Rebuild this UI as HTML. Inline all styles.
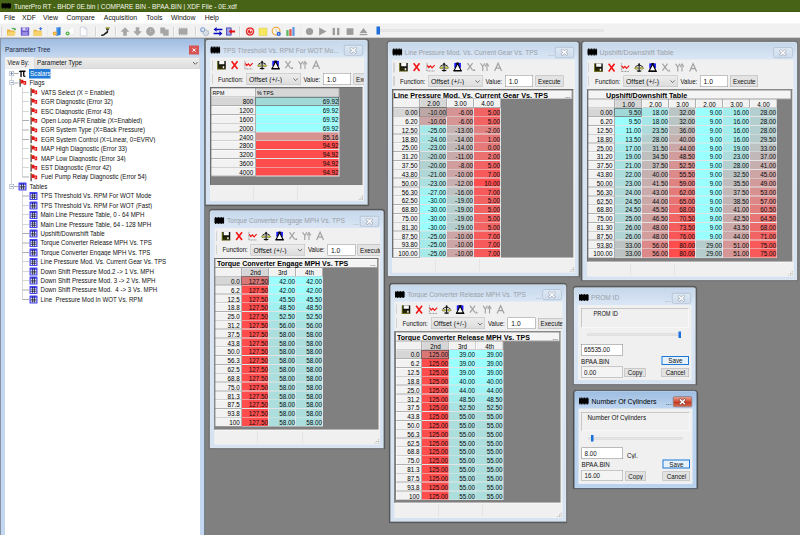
<!DOCTYPE html>
<html><head><meta charset="utf-8"><title>TunerPro RT</title>
<style>
html,body{margin:0;padding:0;}
body{width:800px;height:535px;overflow:hidden;background:#808080;}
#r{position:absolute;left:0;top:0;width:1600px;height:1070px;transform:scale(.5);transform-origin:0 0;overflow:hidden;
font-family:"Liberation Sans",sans-serif;background:#808080;}
#r div,#r svg{position:absolute;box-sizing:border-box;}
#r svg{overflow:visible;}
</style></head><body><div id="r">
<div style="left:0px;top:40px;width:1600px;height:36.2px;background:#f1f1f1;border-bottom:1px solid #a8a8a8;"></div>
<div style="left:0px;top:16px;width:1600px;height:30.8px;background:#fff;"></div>
<div style="left:0px;top:0px;width:1600px;height:24px;background:#476315;border-bottom:1px solid #3c5510;"></div>
<svg style="left:3px;top:6.4px;width:19px;height:11.2px" viewBox="0 0 9.5 5.6"><rect x="0" y="0.9" width="9.5" height="3.8" fill="#000"/><rect x="0.50" y="0" width="0.9" height="5.6" fill="#000"/><rect x="2.02" y="0" width="0.9" height="5.6" fill="#000"/><rect x="3.54" y="0" width="0.9" height="5.6" fill="#000"/><rect x="5.06" y="0" width="0.9" height="5.6" fill="#000"/><rect x="6.58" y="0" width="0.9" height="5.6" fill="#000"/><rect x="8.10" y="0" width="0.9" height="5.6" fill="#000"/></svg>
<div style="left:27.6px;top:2.97px;height:18.46px;font-size:14.2px;line-height:18.46px;color:#f4f6ea;white-space:pre;transform:scaleX(0.923);transform-origin:0 50%;">TunerPro RT - BHDF 0E.bin | COMPARE BIN - BPAA.BIN | XDF File - 0E.xdf</div>
<div style="left:-41px;top:27.23px;width:120px;height:17.94px;text-align:center;font-size:13.8px;line-height:17.94px;color:#111;white-space:pre;">File</div>
<div style="left:-2px;top:27.23px;width:120px;height:17.94px;text-align:center;font-size:13.8px;line-height:17.94px;color:#111;white-space:pre;">XDF</div>
<div style="left:41px;top:27.23px;width:120px;height:17.94px;text-align:center;font-size:13.8px;line-height:17.94px;color:#111;white-space:pre;">View</div>
<div style="left:101.3px;top:27.23px;width:120px;height:17.94px;text-align:center;font-size:13.8px;line-height:17.94px;color:#111;white-space:pre;">Compare</div>
<div style="left:181px;top:27.23px;width:120px;height:17.94px;text-align:center;font-size:13.8px;line-height:17.94px;color:#111;white-space:pre;">Acquisition</div>
<div style="left:248.8px;top:27.23px;width:120px;height:17.94px;text-align:center;font-size:13.8px;line-height:17.94px;color:#111;white-space:pre;">Tools</div>
<div style="left:306.3px;top:27.23px;width:120px;height:17.94px;text-align:center;font-size:13.8px;line-height:17.94px;color:#111;white-space:pre;">Window</div>
<div style="left:363.5px;top:27.23px;width:120px;height:17.94px;text-align:center;font-size:13.8px;line-height:17.94px;color:#111;white-space:pre;">Help</div>
<div style="left:3.2px;top:53px;width:1.2px;height:20px;background:#c4c4c4;"></div>
<div style="left:93.5px;top:53px;width:1px;height:20px;background:#b8b8b8;"></div>
<div style="left:94.5px;top:53px;width:1px;height:20px;background:#fff;"></div>
<div style="left:191.1px;top:53px;width:1px;height:20px;background:#b8b8b8;"></div>
<div style="left:192.1px;top:53px;width:1px;height:20px;background:#fff;"></div>
<div style="left:230.7px;top:53px;width:1px;height:20px;background:#b8b8b8;"></div>
<div style="left:231.7px;top:53px;width:1px;height:20px;background:#fff;"></div>
<div style="left:346.9px;top:53px;width:1px;height:20px;background:#b8b8b8;"></div>
<div style="left:347.9px;top:53px;width:1px;height:20px;background:#fff;"></div>
<div style="left:390.5px;top:53px;width:1px;height:20px;background:#b8b8b8;"></div>
<div style="left:391.5px;top:53px;width:1px;height:20px;background:#fff;"></div>
<div style="left:479.1px;top:53px;width:1px;height:20px;background:#b8b8b8;"></div>
<div style="left:480.1px;top:53px;width:1px;height:20px;background:#fff;"></div>
<div style="left:599.5px;top:53px;width:1px;height:20px;background:#b8b8b8;"></div>
<div style="left:600.5px;top:53px;width:1px;height:20px;background:#fff;"></div>
<svg style="left:13.4px;top:52.6px;width:20px;height:20px" viewBox="0 0 10 10"><path d="M0.5 3 L3.5 3 L4.3 4 L8 4 L8 9 L0.5 9 Z" fill="#e9b64a"/><path d="M2 5.2 L9.6 5.2 L8 9 L0.5 9 Z" fill="#f7d36e"/><path d="M5 2.2 Q7 0.2 8.6 2.2 L9.3 1.6 L9.2 3.8 L7 3.5 L7.8 2.9 Q6.8 1.6 5.6 2.7 Z" fill="#3aa03a"/></svg>
<svg style="left:40px;top:52.6px;width:20px;height:20px" viewBox="0 0 10 10"><rect x="0.8" y="0.8" width="8.4" height="8.4" rx="0.8" fill="#6a5acd"/><rect x="2.4" y="0.8" width="5.2" height="3.2" fill="#d8d4f4"/><rect x="2.2" y="5.6" width="5.6" height="3.6" fill="#9a8fe0"/><rect x="5.6" y="1.2" width="1.2" height="2.2" fill="#6a5acd"/></svg>
<svg style="left:66px;top:52.6px;width:20px;height:20px" viewBox="0 0 10 10"><path d="M0.5 3.2 L3.5 3.2 L4.3 4.2 L8.6 4.2 L8.6 9.2 L0.5 9.2 Z" fill="#e9b64a"/><rect x="0.5" y="5" width="8.1" height="4.2" fill="#f7d36e"/><path d="M7.6 0.4 L9.6 2.4 L8.3 2.4 L8.3 3.8 L6.9 3.8 L6.9 2.4 L5.6 2.4 Z" fill="#3f6fd0"/></svg>
<svg style="left:104px;top:52.6px;width:20px;height:20px" viewBox="0 0 10 10"><path d="M4 1.2 L8.6 0.6 L8.6 8.6 L4 9.4 Z" fill="#2f7fd8"/><path d="M4 1.2 L5.4 0.8 L5.4 9 L4 9.4 Z" fill="#7ab4ee"/><circle cx="2.8" cy="7" r="2" fill="#f0a020"/><circle cx="2.8" cy="7" r="0.8" fill="#fff3c0"/></svg>
<svg style="left:130px;top:52.6px;width:20px;height:20px" viewBox="0 0 10 10"><path d="M3.4 2.6 L7.6 0.8 L9 1.6 L9 7.6 L4.6 9 Z" fill="#fdfdfd" stroke="#d8d8d8" stroke-width=".4"/><circle cx="2.6" cy="7" r="2" fill="#58b548"/><circle cx="2.6" cy="7" r=".7" fill="#e4f6d8"/></svg>
<svg style="left:157.4px;top:52.6px;width:20px;height:20px" viewBox="0 0 10 10"><path d="M1.8 0.6 L6.4 0.6 L8.4 2.6 L8.4 9.4 L1.8 9.4 Z" fill="#fcfcfe" stroke="#b9c0d4" stroke-width=".6"/><path d="M6.4 0.6 L6.4 2.6 L8.4 2.6 Z" fill="#dfe4f0" stroke="#b9c0d4" stroke-width=".4"/></svg>
<svg style="left:201px;top:52.6px;width:20px;height:20px" viewBox="0 0 10 10"><path d="M5.2 0.8 L9 0.8 L8.4 3.2 L7.4 4.2 L6.6 4.2 L5.6 3.2 Z" fill="#444"/><rect x="5.4" y="0.6" width="3.4" height="1.4" fill="#c8c040"/><path d="M7 4.2 C7 7 5.6 6.2 4.6 7.2 C3.6 8.4 2.4 9 0.8 8.6" fill="none" stroke="#1a1a1a" stroke-width="1.6"/></svg>
<svg style="left:239.6px;top:52.6px;width:20px;height:20px" viewBox="0 0 10 10"><path d="M5 0.8 L9.4 5.2 L6.8 5.2 L6.8 9.2 L3.2 9.2 L3.2 5.2 L0.6 5.2 Z" fill="#a6a6a6"/></svg>
<svg style="left:265.4px;top:52.6px;width:20px;height:20px" viewBox="0 0 10 10"><path d="M5 9.2 L9.4 4.8 L6.8 4.8 L6.8 0.8 L3.2 0.8 L3.2 4.8 L0.6 4.8 Z" fill="#a6a6a6"/></svg>
<svg style="left:291.4px;top:52.6px;width:20px;height:20px" viewBox="0 0 10 10"><circle cx="5" cy="5" r="4.4" fill="#a6a6a6"/><path d="M5 2 L5 5 L7 5" stroke="#bdbdbd" stroke-width=".7" fill="none"/></svg>
<svg style="left:319px;top:52.6px;width:20px;height:20px" viewBox="0 0 10 10"><path d="M0.8 1 L5.6 1 L5.6 3 L9.2 3 L9.2 9.2 L3.6 9.2 L3.6 7 L0.8 7 Z" fill="#a6a6a6"/></svg>
<svg style="left:356px;top:52.6px;width:20px;height:20px" viewBox="0 0 10 10"><rect x="0.6" y="2.2" width="8.8" height="5.6" fill="#a6a6a6"/><rect x="1.20" y="1.2" width="0.9" height="7.6" fill="#a6a6a6"/><rect x="2.95" y="1.2" width="0.9" height="7.6" fill="#a6a6a6"/><rect x="4.70" y="1.2" width="0.9" height="7.6" fill="#a6a6a6"/><rect x="6.45" y="1.2" width="0.9" height="7.6" fill="#a6a6a6"/><rect x="8.20" y="1.2" width="0.9" height="7.6" fill="#a6a6a6"/></svg>
<svg style="left:399.4px;top:52.6px;width:20px;height:20px" viewBox="0 0 10 10"><circle cx="3.2" cy="3.2" r="2" fill="#dfe8f6" stroke="#7f9fd0" stroke-width="1.1"/><circle cx="6.4" cy="6.4" r="2.6" fill="none" stroke="#aab4c6" stroke-width="1.5" stroke-dasharray="1.2 .5"/><circle cx="6.4" cy="6.4" r="1.5" fill="#d3d9e4"/></svg>
<svg style="left:426px;top:52.6px;width:20px;height:20px" viewBox="0 0 10 10"><path d="M0.6 3 L3.6 0.6 L3.6 2.2 L9.4 2.2 L9.4 3.8 L3.6 3.8 L3.6 5.2 Z" fill="#0b0bbf"/><path d="M9.4 7 L6.4 4.6 L6.4 6.2 L0.6 6.2 L0.6 7.8 L6.4 7.8 L6.4 9.4 Z" fill="#0b0bbf"/></svg>
<svg style="left:451.2px;top:52.6px;width:20px;height:20px" viewBox="0 0 10 10"><rect x="0.6" y="1" width="5.4" height="8" fill="#3a3ab8"/><rect x="1.4" y="1.8" width="3.8" height="6.4" fill="#9fa4e6"/><path d="M3.2 5 L6.2 2.4 L6.2 4.1 L9.6 4.1 L9.6 5.9 L6.2 5.9 L6.2 7.6 Z" fill="#e81414"/></svg>
<svg style="left:489.6px;top:52.6px;width:20px;height:20px" viewBox="0 0 10 10"><circle cx="5" cy="5" r="4.6" fill="#f7b9b9"/><circle cx="5" cy="5" r="4" fill="#e82222"/><circle cx="5" cy="5" r="2.5" fill="none" stroke="#fff" stroke-width=".8"/><circle cx="5.7" cy="4.1" r=".9" fill="#fff"/></svg>
<svg style="left:516.4px;top:52.6px;width:20px;height:20px" viewBox="0 0 10 10"><rect x="1" y="1.6" width="8" height="7.4" fill="#f6e960" stroke="#d9c94a" stroke-width=".5"/></svg>
<svg style="left:543.2px;top:52.6px;width:20px;height:20px" viewBox="0 0 10 10"><circle cx="4.6" cy="4.6" r="3.9" fill="#fdf6e6" stroke="#e7a233" stroke-width="1.1"/><path d="M4.6 2 L4.6 4.8 L6.4 5.6" stroke="#b0b0b0" stroke-width=".6" fill="none"/><circle cx="7.2" cy="7.4" r="2.1" fill="#2b66d6"/><rect x="6.9" y="6.6" width=".7" height="1.8" fill="#fff"/></svg>
<svg style="left:570.6px;top:52.6px;width:20px;height:20px" viewBox="0 0 10 10"><rect x="0.8" y="3.6" width="2.3" height="5.8" fill="#58b860"/><rect x="3.8" y="2.6" width="2.3" height="6.8" fill="#e0584a"/><rect x="6.8" y="0.6" width="2.3" height="8.8" fill="#5f97e6"/></svg>
<svg style="left:609.2px;top:52.6px;width:20px;height:20px" viewBox="0 0 10 10"><circle cx="5" cy="5" r="3.6" fill="#9c9c9c"/></svg>
<svg style="left:635px;top:52.6px;width:20px;height:20px" viewBox="0 0 10 10"><path d="M1.6 1 L9 5 L1.6 9 Z" fill="#9c9c9c"/></svg>
<svg style="left:662px;top:52.6px;width:20px;height:20px" viewBox="0 0 10 10"><rect x="1.6" y="1.4" width="2.4" height="7.2" fill="#9c9c9c"/><rect x="6" y="1.4" width="2.4" height="7.2" fill="#9c9c9c"/></svg>
<svg style="left:689.8px;top:52.6px;width:20px;height:20px" viewBox="0 0 10 10"><rect x="1.6" y="1.8" width="6.8" height="6.6" fill="#9c9c9c"/></svg>
<svg style="left:717px;top:52.6px;width:20px;height:20px" viewBox="0 0 10 10"><path d="M5 1.4 L8.8 6.6 L1.2 6.6 Z" fill="#9c9c9c"/><rect x="1.2" y="7.4" width="7.6" height="1.3" fill="#9c9c9c"/></svg>
<div style="left:760px;top:58.6px;width:447.2px;height:4.8px;background:#e8e8e8;border:1px solid #d9d9d9;"></div>
<div style="left:753.2px;top:53px;width:7px;height:15.6px;background:#1a6fdb;"></div>
<div style="left:0px;top:77.2px;width:409.2px;height:994px;background:linear-gradient(#9ebbe0 0,#c3d7f0 36px,#c3d7f0 100%);"></div>
<div style="left:0px;top:77.2px;width:2.2px;height:994px;background:linear-gradient(90deg,#6f7580,#9fb2cc);"></div>
<div style="left:407.6px;top:76.8px;width:1.6px;height:994px;background:#4f8aa2;"></div>
<div style="left:409.2px;top:76.8px;width:1.2px;height:994px;background:#686868;"></div>
<div style="left:10px;top:90.1px;height:18.2px;font-size:14px;line-height:18.2px;color:#1c2742;white-space:pre;transform:scaleX(0.936);transform-origin:0 50%;">Parameter Tree</div>
<div style="left:378.4px;top:90.6px;width:19.2px;height:18.6px;background:#d75454;"></div>
<svg style="left:383.8px;top:95.8px;width:8.4px;height:8.4px" viewBox="0 0 4.2 4.2"><path d="M0.5 0.5 L3.7 3.7 M3.7 0.5 L0.5 3.7" stroke="#fff" stroke-width="1"/></svg>
<div style="left:10px;top:114.4px;width:390px;height:23.6px;background:#f0f0f0;"></div>
<div style="left:68.8px;top:114.8px;width:330.8px;height:22.4px;background:linear-gradient(#ececec,#dedede);border:1px solid #c2c2c2;"></div>
<div style="left:15px;top:116.76px;height:17.68px;font-size:13.6px;line-height:17.68px;color:#111;white-space:pre;transform:scaleX(0.817);transform-origin:0 50%;">View By:</div>
<div style="left:74px;top:116.76px;height:17.68px;font-size:13.6px;line-height:17.68px;color:#111;white-space:pre;transform:scaleX(0.933);transform-origin:0 50%;">Parameter Type</div>
<svg style="left:385px;top:122.8px;width:11.2px;height:6.8px" viewBox="0 0 5.6 3.4"><path d="M0.5 0.5 L2.8 2.8 L5.1 0.5" stroke="#555" stroke-width=".9" fill="none"/></svg>
<div style="left:10px;top:138px;width:390px;height:932px;background:#fff;"></div>
<div style="left:22.5px;top:152px;width:1.4px;height:216.01px;background:#adadad;"></div>
<div style="left:28px;top:146.3px;width:9px;height:1.4px;background:#adadad;"></div>
<div style="left:28px;top:165.13px;width:9px;height:1.4px;background:#adadad;"></div>
<div style="left:28px;top:372.31px;width:9px;height:1.4px;background:#adadad;"></div>
<div style="left:44.5px;top:174.83px;width:1.4px;height:179.34px;background:#adadad;"></div>
<div style="left:44.5px;top:382.01px;width:1.4px;height:217.01px;background:#adadad;"></div>
<div style="left:18.6px;top:142.4px;width:9.2px;height:9.2px;background:#fff;border:1px solid #8f9bb3;"></div>
<div style="left:20.6px;top:146.5px;width:5.2px;height:1px;background:#24408c;"></div>
<div style="left:22.7px;top:144.4px;width:1px;height:5.2px;background:#24408c;"></div>
<div style="left:18.6px;top:161.23px;width:9.2px;height:9.2px;background:#fff;border:1px solid #8f9bb3;"></div>
<div style="left:20.6px;top:165.33px;width:5.2px;height:1px;background:#24408c;"></div>
<div style="left:18.6px;top:368.41px;width:9.2px;height:9.2px;background:#fff;border:1px solid #8f9bb3;"></div>
<div style="left:20.6px;top:372.51px;width:5.2px;height:1px;background:#24408c;"></div>
<svg style="left:37.2px;top:139.8px;width:14.8px;height:14.8px" viewBox="0 0 7.4 7.4"><path d="M0.4 1.6 C1 0.6 1.6 0.6 2.4 0.6 L7 0.6 L7 1.9 L5.9 1.9 L5.9 5.4 C5.9 6 6.4 6 7 5.6 L7 6.6 C5.6 7.4 4.6 6.8 4.6 5.6 L4.6 1.9 L3.2 1.9 L3.2 6.9 L1.9 6.9 L1.9 1.9 C1.2 1.9 0.9 2 0.4 2.6 Z" fill="#000"/></svg>
<div style="left:58px;top:138.2px;width:43.4px;height:18.6px;background:#1e7ad6;"></div>
<div style="left:59.6px;top:138.16px;height:17.68px;font-size:13.6px;line-height:17.68px;color:#fff;white-space:pre;transform:scaleX(0.905);transform-origin:0 50%;">Scalars</div>
<svg style="left:37.6px;top:157.43px;width:15.2px;height:16.8px" viewBox="0 0 7.6 8.4"><rect x="0.6" y="0.8" width="1" height="7.4" fill="#111"/><rect x="0.2" y="0.2" width="1.8" height="1" fill="#9a8a20"/><path d="M1.6 1.2 L4.4 1.2 L4.4 2.6 L7.2 2.6 L7.2 6.2 L4.6 6.2 L4.6 5 L1.6 5 Z" fill="#e01818"/><rect x="4.6" y="3.6" width="1.6" height="1.5" fill="#ff8a8a"/></svg>
<div style="left:59px;top:156.99px;height:17.68px;font-size:13.6px;line-height:17.68px;color:#111;white-space:pre;transform:scaleX(0.905);transform-origin:0 50%;">Flags</div>
<div style="left:45.2px;top:183.97px;width:13px;height:1.4px;background:#adadad;"></div>
<svg style="left:59.6px;top:176.27px;width:15.2px;height:16.8px" viewBox="0 0 7.6 8.4"><rect x="0.6" y="0.8" width="1" height="7.4" fill="#111"/><rect x="0.2" y="0.2" width="1.8" height="1" fill="#9a8a20"/><path d="M1.6 1.2 L4.4 1.2 L4.4 2.6 L7.2 2.6 L7.2 6.2 L4.6 6.2 L4.6 5 L1.6 5 Z" fill="#e01818"/><rect x="4.6" y="3.6" width="1.6" height="1.5" fill="#ff8a8a"/></svg>
<div style="left:81.6px;top:175.83px;height:17.68px;font-size:13.6px;line-height:17.68px;color:#111;white-space:pre;transform:scaleX(0.905);transform-origin:0 50%;">VATS Select (X = Enabled)</div>
<div style="left:45.2px;top:202.8px;width:13px;height:1.4px;background:#adadad;"></div>
<svg style="left:59.6px;top:195.1px;width:15.2px;height:16.8px" viewBox="0 0 7.6 8.4"><rect x="0.6" y="0.8" width="1" height="7.4" fill="#111"/><rect x="0.2" y="0.2" width="1.8" height="1" fill="#9a8a20"/><path d="M1.6 1.2 L4.4 1.2 L4.4 2.6 L7.2 2.6 L7.2 6.2 L4.6 6.2 L4.6 5 L1.6 5 Z" fill="#e01818"/><rect x="4.6" y="3.6" width="1.6" height="1.5" fill="#ff8a8a"/></svg>
<div style="left:81.6px;top:194.66px;height:17.68px;font-size:13.6px;line-height:17.68px;color:#111;white-space:pre;transform:scaleX(0.905);transform-origin:0 50%;">EGR Diagnostic (Error 32)</div>
<div style="left:45.2px;top:221.64px;width:13px;height:1.4px;background:#adadad;"></div>
<svg style="left:59.6px;top:213.94px;width:15.2px;height:16.8px" viewBox="0 0 7.6 8.4"><rect x="0.6" y="0.8" width="1" height="7.4" fill="#111"/><rect x="0.2" y="0.2" width="1.8" height="1" fill="#9a8a20"/><path d="M1.6 1.2 L4.4 1.2 L4.4 2.6 L7.2 2.6 L7.2 6.2 L4.6 6.2 L4.6 5 L1.6 5 Z" fill="#e01818"/><rect x="4.6" y="3.6" width="1.6" height="1.5" fill="#ff8a8a"/></svg>
<div style="left:81.6px;top:213.5px;height:17.68px;font-size:13.6px;line-height:17.68px;color:#111;white-space:pre;transform:scaleX(0.905);transform-origin:0 50%;">ESC Diagnostic (Error 43)</div>
<div style="left:45.2px;top:240.47px;width:13px;height:1.4px;background:#adadad;"></div>
<svg style="left:59.6px;top:232.77px;width:15.2px;height:16.8px" viewBox="0 0 7.6 8.4"><rect x="0.6" y="0.8" width="1" height="7.4" fill="#111"/><rect x="0.2" y="0.2" width="1.8" height="1" fill="#9a8a20"/><path d="M1.6 1.2 L4.4 1.2 L4.4 2.6 L7.2 2.6 L7.2 6.2 L4.6 6.2 L4.6 5 L1.6 5 Z" fill="#e01818"/><rect x="4.6" y="3.6" width="1.6" height="1.5" fill="#ff8a8a"/></svg>
<div style="left:81.6px;top:232.33px;height:17.68px;font-size:13.6px;line-height:17.68px;color:#111;white-space:pre;transform:scaleX(0.905);transform-origin:0 50%;">Open Loop AFR Enable (X=Enabled)</div>
<div style="left:45.2px;top:259.3px;width:13px;height:1.4px;background:#adadad;"></div>
<svg style="left:59.6px;top:251.6px;width:15.2px;height:16.8px" viewBox="0 0 7.6 8.4"><rect x="0.6" y="0.8" width="1" height="7.4" fill="#111"/><rect x="0.2" y="0.2" width="1.8" height="1" fill="#9a8a20"/><path d="M1.6 1.2 L4.4 1.2 L4.4 2.6 L7.2 2.6 L7.2 6.2 L4.6 6.2 L4.6 5 L1.6 5 Z" fill="#e01818"/><rect x="4.6" y="3.6" width="1.6" height="1.5" fill="#ff8a8a"/></svg>
<div style="left:81.6px;top:251.16px;height:17.68px;font-size:13.6px;line-height:17.68px;color:#111;white-space:pre;transform:scaleX(0.905);transform-origin:0 50%;">EGR System Type (X=Back Pressure)</div>
<div style="left:45.2px;top:278.14px;width:13px;height:1.4px;background:#adadad;"></div>
<svg style="left:59.6px;top:270.44px;width:15.2px;height:16.8px" viewBox="0 0 7.6 8.4"><rect x="0.6" y="0.8" width="1" height="7.4" fill="#111"/><rect x="0.2" y="0.2" width="1.8" height="1" fill="#9a8a20"/><path d="M1.6 1.2 L4.4 1.2 L4.4 2.6 L7.2 2.6 L7.2 6.2 L4.6 6.2 L4.6 5 L1.6 5 Z" fill="#e01818"/><rect x="4.6" y="3.6" width="1.6" height="1.5" fill="#ff8a8a"/></svg>
<div style="left:81.6px;top:270px;height:17.68px;font-size:13.6px;line-height:17.68px;color:#111;white-space:pre;transform:scaleX(0.905);transform-origin:0 50%;">EGR System Control (X=Linear, 0=EVRV)</div>
<div style="left:45.2px;top:296.97px;width:13px;height:1.4px;background:#adadad;"></div>
<svg style="left:59.6px;top:289.27px;width:15.2px;height:16.8px" viewBox="0 0 7.6 8.4"><rect x="0.6" y="0.8" width="1" height="7.4" fill="#111"/><rect x="0.2" y="0.2" width="1.8" height="1" fill="#9a8a20"/><path d="M1.6 1.2 L4.4 1.2 L4.4 2.6 L7.2 2.6 L7.2 6.2 L4.6 6.2 L4.6 5 L1.6 5 Z" fill="#e01818"/><rect x="4.6" y="3.6" width="1.6" height="1.5" fill="#ff8a8a"/></svg>
<div style="left:81.6px;top:288.83px;height:17.68px;font-size:13.6px;line-height:17.68px;color:#111;white-space:pre;transform:scaleX(0.905);transform-origin:0 50%;">MAP High Diagnostic (Error 33)</div>
<div style="left:45.2px;top:315.81px;width:13px;height:1.4px;background:#adadad;"></div>
<svg style="left:59.6px;top:308.11px;width:15.2px;height:16.8px" viewBox="0 0 7.6 8.4"><rect x="0.6" y="0.8" width="1" height="7.4" fill="#111"/><rect x="0.2" y="0.2" width="1.8" height="1" fill="#9a8a20"/><path d="M1.6 1.2 L4.4 1.2 L4.4 2.6 L7.2 2.6 L7.2 6.2 L4.6 6.2 L4.6 5 L1.6 5 Z" fill="#e01818"/><rect x="4.6" y="3.6" width="1.6" height="1.5" fill="#ff8a8a"/></svg>
<div style="left:81.6px;top:307.67px;height:17.68px;font-size:13.6px;line-height:17.68px;color:#111;white-space:pre;transform:scaleX(0.905);transform-origin:0 50%;">MAP Low Diagnostic (Error 34)</div>
<div style="left:45.2px;top:334.64px;width:13px;height:1.4px;background:#adadad;"></div>
<svg style="left:59.6px;top:326.94px;width:15.2px;height:16.8px" viewBox="0 0 7.6 8.4"><rect x="0.6" y="0.8" width="1" height="7.4" fill="#111"/><rect x="0.2" y="0.2" width="1.8" height="1" fill="#9a8a20"/><path d="M1.6 1.2 L4.4 1.2 L4.4 2.6 L7.2 2.6 L7.2 6.2 L4.6 6.2 L4.6 5 L1.6 5 Z" fill="#e01818"/><rect x="4.6" y="3.6" width="1.6" height="1.5" fill="#ff8a8a"/></svg>
<div style="left:81.6px;top:326.5px;height:17.68px;font-size:13.6px;line-height:17.68px;color:#111;white-space:pre;transform:scaleX(0.905);transform-origin:0 50%;">EST Diagnostic (Error 42)</div>
<div style="left:45.2px;top:353.47px;width:13px;height:1.4px;background:#adadad;"></div>
<svg style="left:59.6px;top:345.77px;width:15.2px;height:16.8px" viewBox="0 0 7.6 8.4"><rect x="0.6" y="0.8" width="1" height="7.4" fill="#111"/><rect x="0.2" y="0.2" width="1.8" height="1" fill="#9a8a20"/><path d="M1.6 1.2 L4.4 1.2 L4.4 2.6 L7.2 2.6 L7.2 6.2 L4.6 6.2 L4.6 5 L1.6 5 Z" fill="#e01818"/><rect x="4.6" y="3.6" width="1.6" height="1.5" fill="#ff8a8a"/></svg>
<div style="left:81.6px;top:345.33px;height:17.68px;font-size:13.6px;line-height:17.68px;color:#111;white-space:pre;transform:scaleX(0.905);transform-origin:0 50%;">Fuel Pump Relay Diagnostic (Error 54)</div>
<svg style="left:36.6px;top:365.01px;width:16px;height:16px" viewBox="0 0 8 8"><rect x="0" y="0" width="8" height="8" rx=".6" fill="#4545f2"/><rect x="1.2" y="2.3" width="5.6" height="4.6" fill="#fff"/><path d="M3.05 1 V7" stroke="#15153a" stroke-width=".75"/><path d="M4.95 1 V7" stroke="#15153a" stroke-width=".75"/><path d="M1.2 3.8 H6.8" stroke="#15153a" stroke-width=".7"/><path d="M1.2 5.4 H6.8" stroke="#15153a" stroke-width=".7"/></svg>
<div style="left:59px;top:364.17px;height:17.68px;font-size:13.6px;line-height:17.68px;color:#111;white-space:pre;transform:scaleX(0.905);transform-origin:0 50%;">Tables</div>
<div style="left:45.2px;top:391.14px;width:13px;height:1.4px;background:#adadad;"></div>
<svg style="left:58.6px;top:383.84px;width:16px;height:16px" viewBox="0 0 8 8"><rect x="0" y="0" width="8" height="8" rx=".6" fill="#4545f2"/><rect x="1.2" y="2.3" width="5.6" height="4.6" fill="#fff"/><path d="M3.05 1 V7" stroke="#15153a" stroke-width=".75"/><path d="M4.95 1 V7" stroke="#15153a" stroke-width=".75"/><path d="M1.2 3.8 H6.8" stroke="#15153a" stroke-width=".7"/><path d="M1.2 5.4 H6.8" stroke="#15153a" stroke-width=".7"/></svg>
<div style="left:81.2px;top:383px;height:17.68px;font-size:13.6px;line-height:17.68px;color:#111;white-space:pre;transform:scaleX(0.905);transform-origin:0 50%;">TPS Threshold Vs. RPM For WOT Mode</div>
<div style="left:45.2px;top:409.98px;width:13px;height:1.4px;background:#adadad;"></div>
<svg style="left:58.6px;top:402.68px;width:16px;height:16px" viewBox="0 0 8 8"><rect x="0" y="0" width="8" height="8" rx=".6" fill="#4545f2"/><rect x="1.2" y="2.3" width="5.6" height="4.6" fill="#fff"/><path d="M3.05 1 V7" stroke="#15153a" stroke-width=".75"/><path d="M4.95 1 V7" stroke="#15153a" stroke-width=".75"/><path d="M1.2 3.8 H6.8" stroke="#15153a" stroke-width=".7"/><path d="M1.2 5.4 H6.8" stroke="#15153a" stroke-width=".7"/></svg>
<div style="left:81.2px;top:401.84px;height:17.68px;font-size:13.6px;line-height:17.68px;color:#111;white-space:pre;transform:scaleX(0.905);transform-origin:0 50%;">TPS Threshold Vs. RPM For WOT (Fast)</div>
<div style="left:45.2px;top:428.81px;width:13px;height:1.4px;background:#adadad;"></div>
<svg style="left:58.6px;top:421.51px;width:16px;height:16px" viewBox="0 0 8 8"><rect x="0" y="0" width="8" height="8" rx=".6" fill="#4545f2"/><rect x="1.2" y="2.3" width="5.6" height="4.6" fill="#fff"/><path d="M3.05 1 V7" stroke="#15153a" stroke-width=".75"/><path d="M4.95 1 V7" stroke="#15153a" stroke-width=".75"/><path d="M1.2 3.8 H6.8" stroke="#15153a" stroke-width=".7"/><path d="M1.2 5.4 H6.8" stroke="#15153a" stroke-width=".7"/></svg>
<div style="left:81.2px;top:420.67px;height:17.68px;font-size:13.6px;line-height:17.68px;color:#111;white-space:pre;transform:scaleX(0.905);transform-origin:0 50%;">Main Line Pressure Table, 0 - 64 MPH</div>
<div style="left:45.2px;top:447.64px;width:13px;height:1.4px;background:#adadad;"></div>
<svg style="left:58.6px;top:440.34px;width:16px;height:16px" viewBox="0 0 8 8"><rect x="0" y="0" width="8" height="8" rx=".6" fill="#4545f2"/><rect x="1.2" y="2.3" width="5.6" height="4.6" fill="#fff"/><path d="M3.05 1 V7" stroke="#15153a" stroke-width=".75"/><path d="M4.95 1 V7" stroke="#15153a" stroke-width=".75"/><path d="M1.2 3.8 H6.8" stroke="#15153a" stroke-width=".7"/><path d="M1.2 5.4 H6.8" stroke="#15153a" stroke-width=".7"/></svg>
<div style="left:81.2px;top:439.5px;height:17.68px;font-size:13.6px;line-height:17.68px;color:#111;white-space:pre;transform:scaleX(0.905);transform-origin:0 50%;">Main Line Pressure Table, 64 - 128 MPH</div>
<div style="left:45.2px;top:466.48px;width:13px;height:1.4px;background:#adadad;"></div>
<svg style="left:58.6px;top:459.18px;width:16px;height:16px" viewBox="0 0 8 8"><rect x="0" y="0" width="8" height="8" rx=".6" fill="#4545f2"/><rect x="1.2" y="2.3" width="5.6" height="4.6" fill="#fff"/><path d="M3.05 1 V7" stroke="#15153a" stroke-width=".75"/><path d="M4.95 1 V7" stroke="#15153a" stroke-width=".75"/><path d="M1.2 3.8 H6.8" stroke="#15153a" stroke-width=".7"/><path d="M1.2 5.4 H6.8" stroke="#15153a" stroke-width=".7"/></svg>
<div style="left:81.2px;top:458.34px;height:17.68px;font-size:13.6px;line-height:17.68px;color:#111;white-space:pre;transform:scaleX(0.905);transform-origin:0 50%;">Upshift/Downshift Table</div>
<div style="left:45.2px;top:485.31px;width:13px;height:1.4px;background:#adadad;"></div>
<svg style="left:58.6px;top:478.01px;width:16px;height:16px" viewBox="0 0 8 8"><rect x="0" y="0" width="8" height="8" rx=".6" fill="#4545f2"/><rect x="1.2" y="2.3" width="5.6" height="4.6" fill="#fff"/><path d="M3.05 1 V7" stroke="#15153a" stroke-width=".75"/><path d="M4.95 1 V7" stroke="#15153a" stroke-width=".75"/><path d="M1.2 3.8 H6.8" stroke="#15153a" stroke-width=".7"/><path d="M1.2 5.4 H6.8" stroke="#15153a" stroke-width=".7"/></svg>
<div style="left:81.2px;top:477.17px;height:17.68px;font-size:13.6px;line-height:17.68px;color:#111;white-space:pre;transform:scaleX(0.905);transform-origin:0 50%;">Torque Converter Release MPH Vs. TPS</div>
<div style="left:45.2px;top:504.15px;width:13px;height:1.4px;background:#adadad;"></div>
<svg style="left:58.6px;top:496.85px;width:16px;height:16px" viewBox="0 0 8 8"><rect x="0" y="0" width="8" height="8" rx=".6" fill="#4545f2"/><rect x="1.2" y="2.3" width="5.6" height="4.6" fill="#fff"/><path d="M3.05 1 V7" stroke="#15153a" stroke-width=".75"/><path d="M4.95 1 V7" stroke="#15153a" stroke-width=".75"/><path d="M1.2 3.8 H6.8" stroke="#15153a" stroke-width=".7"/><path d="M1.2 5.4 H6.8" stroke="#15153a" stroke-width=".7"/></svg>
<div style="left:81.2px;top:496.01px;height:17.68px;font-size:13.6px;line-height:17.68px;color:#111;white-space:pre;transform:scaleX(0.905);transform-origin:0 50%;">Torque Converter Engage MPH Vs. TPS</div>
<div style="left:45.2px;top:522.98px;width:13px;height:1.4px;background:#adadad;"></div>
<svg style="left:58.6px;top:515.68px;width:16px;height:16px" viewBox="0 0 8 8"><rect x="0" y="0" width="8" height="8" rx=".6" fill="#4545f2"/><rect x="1.2" y="2.3" width="5.6" height="4.6" fill="#fff"/><path d="M3.05 1 V7" stroke="#15153a" stroke-width=".75"/><path d="M4.95 1 V7" stroke="#15153a" stroke-width=".75"/><path d="M1.2 3.8 H6.8" stroke="#15153a" stroke-width=".7"/><path d="M1.2 5.4 H6.8" stroke="#15153a" stroke-width=".7"/></svg>
<div style="left:81.2px;top:514.84px;height:17.68px;font-size:13.6px;line-height:17.68px;color:#111;white-space:pre;transform:scaleX(0.905);transform-origin:0 50%;">Line Pressure Mod. Vs. Current Gear Vs. TPS</div>
<div style="left:45.2px;top:541.81px;width:13px;height:1.4px;background:#adadad;"></div>
<svg style="left:58.6px;top:534.51px;width:16px;height:16px" viewBox="0 0 8 8"><rect x="0" y="0" width="8" height="8" rx=".6" fill="#4545f2"/><rect x="1.2" y="2.3" width="5.6" height="4.6" fill="#fff"/><path d="M3.05 1 V7" stroke="#15153a" stroke-width=".75"/><path d="M4.95 1 V7" stroke="#15153a" stroke-width=".75"/><path d="M1.2 3.8 H6.8" stroke="#15153a" stroke-width=".7"/><path d="M1.2 5.4 H6.8" stroke="#15153a" stroke-width=".7"/></svg>
<div style="left:81.2px;top:533.67px;height:17.68px;font-size:13.6px;line-height:17.68px;color:#111;white-space:pre;transform:scaleX(0.905);transform-origin:0 50%;">Down Shift Pressure Mod.2 -&gt; 1 Vs. MPH</div>
<div style="left:45.2px;top:560.65px;width:13px;height:1.4px;background:#adadad;"></div>
<svg style="left:58.6px;top:553.35px;width:16px;height:16px" viewBox="0 0 8 8"><rect x="0" y="0" width="8" height="8" rx=".6" fill="#4545f2"/><rect x="1.2" y="2.3" width="5.6" height="4.6" fill="#fff"/><path d="M3.05 1 V7" stroke="#15153a" stroke-width=".75"/><path d="M4.95 1 V7" stroke="#15153a" stroke-width=".75"/><path d="M1.2 3.8 H6.8" stroke="#15153a" stroke-width=".7"/><path d="M1.2 5.4 H6.8" stroke="#15153a" stroke-width=".7"/></svg>
<div style="left:81.2px;top:552.51px;height:17.68px;font-size:13.6px;line-height:17.68px;color:#111;white-space:pre;transform:scaleX(0.905);transform-origin:0 50%;">Down Shift Pressure Mod. 3 -&gt; 2 Vs. MPH</div>
<div style="left:45.2px;top:579.48px;width:13px;height:1.4px;background:#adadad;"></div>
<svg style="left:58.6px;top:572.18px;width:16px;height:16px" viewBox="0 0 8 8"><rect x="0" y="0" width="8" height="8" rx=".6" fill="#4545f2"/><rect x="1.2" y="2.3" width="5.6" height="4.6" fill="#fff"/><path d="M3.05 1 V7" stroke="#15153a" stroke-width=".75"/><path d="M4.95 1 V7" stroke="#15153a" stroke-width=".75"/><path d="M1.2 3.8 H6.8" stroke="#15153a" stroke-width=".7"/><path d="M1.2 5.4 H6.8" stroke="#15153a" stroke-width=".7"/></svg>
<div style="left:81.2px;top:571.34px;height:17.68px;font-size:13.6px;line-height:17.68px;color:#111;white-space:pre;transform:scaleX(0.905);transform-origin:0 50%;">Down Shift Pressure Mod.  4 -&gt; 3 Vs. MPH</div>
<div style="left:45.2px;top:598.32px;width:13px;height:1.4px;background:#adadad;"></div>
<svg style="left:58.6px;top:591.02px;width:16px;height:16px" viewBox="0 0 8 8"><rect x="0" y="0" width="8" height="8" rx=".6" fill="#4545f2"/><rect x="1.2" y="2.3" width="5.6" height="4.6" fill="#fff"/><path d="M3.05 1 V7" stroke="#15153a" stroke-width=".75"/><path d="M4.95 1 V7" stroke="#15153a" stroke-width=".75"/><path d="M1.2 3.8 H6.8" stroke="#15153a" stroke-width=".7"/><path d="M1.2 5.4 H6.8" stroke="#15153a" stroke-width=".7"/></svg>
<div style="left:81.2px;top:590.18px;height:17.68px;font-size:13.6px;line-height:17.68px;color:#111;white-space:pre;transform:scaleX(0.905);transform-origin:0 50%;">Line  Pressure Mod In WOT Vs. RPM</div>
<div style="left:410.8px;top:78.8px;width:325.4px;height:331.2px;box-shadow:0 0 1.8px 1px rgba(20,20,20,.5);border-radius:6.4px 6.4px 1.2px 1.2px;"></div>
<div style="left:410.8px;top:78.8px;width:325.4px;height:331.2px;background:linear-gradient(#c5d7eb 0,#dbe7f5 36px,#d5e2f2 100%);border:1px solid #9aa6b5;border-radius:6px 6px 1px 1px;box-shadow:inset 0 0 0 1px rgba(255,255,255,.75);"></div>
<svg style="left:421.2px;top:92.8px;width:19.2px;height:14px" viewBox="0 0 9.6 7"><rect x="0" y="0.9" width="9.6" height="5.2" fill="#000"/><rect x="0.50" y="0" width="0.9" height="7" fill="#000"/><rect x="2.04" y="0" width="0.9" height="7" fill="#000"/><rect x="3.58" y="0" width="0.9" height="7" fill="#000"/><rect x="5.12" y="0" width="0.9" height="7" fill="#000"/><rect x="6.66" y="0" width="0.9" height="7" fill="#000"/><rect x="8.20" y="0" width="0.9" height="7" fill="#000"/></svg>
<div style="left:445.6px;top:89.52px;height:19.76px;font-size:15.2px;line-height:19.76px;color:#9aa0a8;white-space:pre;transform:scaleX(0.860);transform-origin:0 50%;">TPS Threshold Vs. RPM For WOT Mo...</div>
<div style="left:688.4px;top:90px;width:37.6px;height:21.4px;background:linear-gradient(#dde8f4,#cddbec);border:1px solid #93a6bd;border-radius:3.2px;box-shadow:inset 0 0 0 1px rgba(255,255,255,.6);"></div>
<svg style="left:700.4px;top:95.1px;width:13.6px;height:11.2px" viewBox="0 0 6.8 5.6"><path d="M1.3 0.9 L5.5 4.7 M5.5 0.9 L1.3 4.7" stroke="#949dab" stroke-width="2.5" stroke-linecap="square" fill="none"/><path d="M1.3 0.9 L5.5 4.7 M5.5 0.9 L1.3 4.7" stroke="#fff" stroke-width="1.5" stroke-linecap="square" fill="none"/></svg>
<div style="left:420.4px;top:114.6px;width:307.6px;height:287.2px;background:#f0f0f0;"></div>
<div style="left:420.4px;top:114.6px;width:307.6px;height:60px;overflow:hidden;"><div style="left:-420.4px;top:-114.6px;width:1600px;height:1070px;">
<div style="left:423.6px;top:120.6px;width:1.2px;height:20px;background:#b5b5b5;"></div>
<div style="left:423.6px;top:147.6px;width:1.2px;height:20px;background:#b5b5b5;"></div>
<svg style="left:434.4px;top:121px;width:18.4px;height:18.4px" viewBox="0 0 10 10"><rect x="0.5" y="0.5" width="9" height="9" fill="#0c0c0c"/><rect x="0.3" y="0.5" width="1" height="9.2" fill="#7d7d18"/><rect x="0.3" y="8.8" width="9.2" height="0.9" fill="#7d7d18"/><rect x="2.4" y="0.5" width="5.6" height="3.6" fill="#fafafa"/><rect x="2" y="5.6" width="6.4" height="3.2" fill="#2a2a08"/><rect x="6.2" y="6.2" width="1.6" height="2.2" fill="#f4f4f4"/></svg>
<svg style="left:460.4px;top:121px;width:18.4px;height:18.4px" viewBox="0 0 10 10"><path d="M1.8 0.8 L8.2 9.2 M8.2 0.8 L1.8 9.2" stroke="#f41212" stroke-width="1.7" fill="none"/></svg>
<svg style="left:487.8px;top:121px;width:18.4px;height:18.4px" viewBox="0 0 10 10"><path d="M1 0.4 V9.2 H9.6" stroke="#333" stroke-width=".6" fill="none" stroke-dasharray=".9 .7"/><path d="M1.2 3 L3 5.4 L4.8 3.6 L6.6 5.8 L9.4 2.8" stroke="#ee1616" stroke-width="1.3" fill="none"/></svg>
<svg style="left:515.2px;top:121px;width:18.4px;height:18.4px" viewBox="0 0 10 10"><path d="M0.9 4.2 Q5 0.6 9.1 4.2" stroke="#111" stroke-width="1" fill="none"/><circle cx="5" cy="1.4" r="1" fill="#111"/><path d="M5 1.6 V8.4" stroke="#111" stroke-width="1.2"/><ellipse cx="2.1" cy="5.6" rx="2.1" ry="1.1" fill="#d2d23a" stroke="#444" stroke-width=".5"/><ellipse cx="7.9" cy="5.6" rx="2.1" ry="1.1" fill="#d2d23a" stroke="#444" stroke-width=".5"/><ellipse cx="5" cy="8.8" rx="2.8" ry="0.9" fill="#111"/></svg>
<svg style="left:542px;top:121px;width:18.4px;height:18.4px" viewBox="0 0 10 10"><rect x="1.4" y="0.4" width="7.2" height="5.4" fill="#1a1aff"/><path d="M5 1.2 L8.8 8.8 H1.2 Z" fill="#fff" stroke="#000" stroke-width="1.25" stroke-linejoin="miter"/><rect x="0.6" y="8.4" width="8.8" height="1.2" fill="#000"/><rect x="3.4" y="0.2" width="3.2" height="1.3" fill="#000"/></svg>
<svg style="left:569.2px;top:121px;width:18.4px;height:18.4px" viewBox="0 0 10 10"><path d="M1 0.8 L6.6 8.2 M6.6 0.8 L1 8.2" stroke="#a2a2a2" stroke-width="1.3" fill="none"/><path d="M6.4 9.3 H9.6 L8.6 6.8 Z" fill="#a2a2a2"/></svg>
<svg style="left:596px;top:121px;width:18.4px;height:18.4px" viewBox="0 0 10 10"><path d="M0.6 0.8 L3 4.4 L5.4 0.8 M3 4.4 V9.2" stroke="#a2a2a2" stroke-width="1.3" fill="none"/><path d="M7.6 9.2 V2.4" stroke="#a2a2a2" stroke-width="1.2" fill="none"/><path d="M5.6 4.2 L7.6 1 L9.6 4.2" stroke="#a2a2a2" stroke-width="1.1" fill="none"/></svg>
<svg style="left:623.2px;top:121px;width:18.4px;height:18.4px" viewBox="0 0 10 10"><path d="M1.2 9.2 L5 0.8 L8.8 9.2 M2.6 6.2 H7.4" stroke="#a2a2a2" stroke-width="1.3" fill="none"/></svg>
<div style="left:436.4px;top:149.69px;height:17.42px;font-size:13.4px;line-height:17.42px;color:#111;white-space:pre;transform:scaleX(0.918);transform-origin:0 50%;">Function:</div>
<div style="left:493px;top:146px;width:108.4px;height:23.6px;background:linear-gradient(#ececec,#dddddd);border:1px solid #b4b4b4;"></div>
<div style="left:498.4px;top:150.09px;height:17.42px;font-size:13.4px;line-height:17.42px;color:#111;white-space:pre;transform:scaleX(1.029);transform-origin:0 50%;">Offset (+/-)</div>
<svg style="left:586.4px;top:155.8px;width:10.4px;height:6.4px" viewBox="0 0 5.2 3.2"><path d="M0.4 0.4 L2.6 2.6 L4.8 0.4" stroke="#555" stroke-width=".8" fill="none"/></svg>
<div style="left:607.4px;top:149.69px;height:17.42px;font-size:13.4px;line-height:17.42px;color:#111;white-space:pre;transform:scaleX(0.908);transform-origin:0 50%;">Value:</div>
<div style="left:646.4px;top:146px;width:56px;height:23.6px;background:#fff;border:1px solid #8a8a8a;"></div>
<div style="left:653.6px;top:150.09px;height:17.42px;font-size:13.4px;line-height:17.42px;color:#111;white-space:pre;">1.0</div>
<div style="left:706.8px;top:146.8px;width:56px;height:22.4px;background:#e3e3e3;border:1px solid #adadad;"></div>
<div style="left:712.2px;top:150.49px;height:17.42px;font-size:13.4px;line-height:17.42px;color:#111;white-space:pre;transform:scaleX(0.934);transform-origin:0 50%;">Execute</div>
</div></div>
<div style="left:420.4px;top:174px;width:305.4px;height:197.2px;background:#808080;border-top:1px solid #5a5a5a;border-left:1px solid #5a5a5a;border-right:1px solid #e8e8e8;border-bottom:1px solid #e8e8e8;"></div>
<div style="left:423px;top:176.6px;width:255.8px;height:17.64px;background:#b0b0b0;"></div>
<div style="left:423px;top:176.6px;width:88.6px;height:176.4px;background:#b0b0b0;"></div>
<div style="left:511.6px;top:194.24px;width:167.2px;height:158.76px;background:#e4e4e4;"></div>
<div style="left:423px;top:176.6px;width:87px;height:16.04px;background:#f2f2f2;box-shadow:inset 1px 1px 0 #fff;"></div>
<div style="left:511.6px;top:176.6px;width:165.6px;height:16.04px;background:#d6d6d6;box-shadow:inset 1px 1px 0 #e8e8e8;"></div>
<div style="left:514.4px;top:177.96px;height:16.12px;font-size:12.4px;line-height:16.12px;color:#000;white-space:pre;transform:scaleX(0.860);transform-origin:0 50%;">% TPS</div>
<div style="left:425.4px;top:177.96px;height:16.12px;font-size:12.4px;line-height:16.12px;color:#000;white-space:pre;transform:scaleX(0.860);transform-origin:0 50%;">RPM</div>
<div style="left:423px;top:194.24px;width:87px;height:16.04px;background:#d6d6d6;box-shadow:inset 1px 1px 0 #e8e8e8;"></div>
<div style="left:417.6px;top:195.22px;width:88.6px;height:17.68px;text-align:right;font-size:13.6px;line-height:17.68px;color:#000;white-space:pre;transform:scaleX(0.930);transform-origin:100% 50%;">800</div>
<div style="left:511px;top:193.64px;width:167.4px;height:17.84px;background:rgb(161,217,217);border:1px solid #3a3a3a;"></div>
<div style="left:509.8px;top:195.22px;width:167.2px;height:17.68px;text-align:right;font-size:13.6px;line-height:17.68px;color:#0a0a0a;white-space:pre;transform:scaleX(0.930);transform-origin:100% 50%;">69.92</div>
<div style="left:423px;top:211.88px;width:87px;height:16.04px;background:#f2f2f2;box-shadow:inset 1px 1px 0 #fff;"></div>
<div style="left:417.6px;top:212.86px;width:88.6px;height:17.68px;text-align:right;font-size:13.6px;line-height:17.68px;color:#000;white-space:pre;transform:scaleX(0.930);transform-origin:100% 50%;">1200</div>
<div style="left:511.6px;top:211.88px;width:165.6px;height:16.04px;background:rgb(153,255,255);"></div>
<div style="left:509.8px;top:212.86px;width:167.2px;height:17.68px;text-align:right;font-size:13.6px;line-height:17.68px;color:#0a0a0a;white-space:pre;transform:scaleX(0.930);transform-origin:100% 50%;">69.92</div>
<div style="left:423px;top:229.52px;width:87px;height:16.04px;background:#f2f2f2;box-shadow:inset 1px 1px 0 #fff;"></div>
<div style="left:417.6px;top:230.5px;width:88.6px;height:17.68px;text-align:right;font-size:13.6px;line-height:17.68px;color:#000;white-space:pre;transform:scaleX(0.930);transform-origin:100% 50%;">1600</div>
<div style="left:511.6px;top:229.52px;width:165.6px;height:16.04px;background:rgb(153,255,255);"></div>
<div style="left:509.8px;top:230.5px;width:167.2px;height:17.68px;text-align:right;font-size:13.6px;line-height:17.68px;color:#0a0a0a;white-space:pre;transform:scaleX(0.930);transform-origin:100% 50%;">69.92</div>
<div style="left:423px;top:247.16px;width:87px;height:16.04px;background:#f2f2f2;box-shadow:inset 1px 1px 0 #fff;"></div>
<div style="left:417.6px;top:248.14px;width:88.6px;height:17.68px;text-align:right;font-size:13.6px;line-height:17.68px;color:#000;white-space:pre;transform:scaleX(0.930);transform-origin:100% 50%;">2000</div>
<div style="left:511.6px;top:247.16px;width:165.6px;height:16.04px;background:rgb(153,255,255);"></div>
<div style="left:509.8px;top:248.14px;width:167.2px;height:17.68px;text-align:right;font-size:13.6px;line-height:17.68px;color:#0a0a0a;white-space:pre;transform:scaleX(0.930);transform-origin:100% 50%;">69.92</div>
<div style="left:423px;top:264.8px;width:87px;height:16.04px;background:#f2f2f2;box-shadow:inset 1px 1px 0 #fff;"></div>
<div style="left:417.6px;top:265.78px;width:88.6px;height:17.68px;text-align:right;font-size:13.6px;line-height:17.68px;color:#000;white-space:pre;transform:scaleX(0.930);transform-origin:100% 50%;">2400</div>
<div style="left:511.6px;top:264.8px;width:165.6px;height:16.04px;background:rgb(215,146,146);"></div>
<div style="left:509.8px;top:265.78px;width:167.2px;height:17.68px;text-align:right;font-size:13.6px;line-height:17.68px;color:#0a0a0a;white-space:pre;transform:scaleX(0.930);transform-origin:100% 50%;">85.16</div>
<div style="left:423px;top:282.44px;width:87px;height:16.04px;background:#f2f2f2;box-shadow:inset 1px 1px 0 #fff;"></div>
<div style="left:417.6px;top:283.42px;width:88.6px;height:17.68px;text-align:right;font-size:13.6px;line-height:17.68px;color:#000;white-space:pre;transform:scaleX(0.930);transform-origin:100% 50%;">2800</div>
<div style="left:511.6px;top:282.44px;width:165.6px;height:16.04px;background:rgb(255,77,77);"></div>
<div style="left:509.8px;top:283.42px;width:167.2px;height:17.68px;text-align:right;font-size:13.6px;line-height:17.68px;color:#0a0a0a;white-space:pre;transform:scaleX(0.930);transform-origin:100% 50%;">94.92</div>
<div style="left:423px;top:300.08px;width:87px;height:16.04px;background:#f2f2f2;box-shadow:inset 1px 1px 0 #fff;"></div>
<div style="left:417.6px;top:301.06px;width:88.6px;height:17.68px;text-align:right;font-size:13.6px;line-height:17.68px;color:#000;white-space:pre;transform:scaleX(0.930);transform-origin:100% 50%;">3200</div>
<div style="left:511.6px;top:300.08px;width:165.6px;height:16.04px;background:rgb(255,77,77);"></div>
<div style="left:509.8px;top:301.06px;width:167.2px;height:17.68px;text-align:right;font-size:13.6px;line-height:17.68px;color:#0a0a0a;white-space:pre;transform:scaleX(0.930);transform-origin:100% 50%;">94.92</div>
<div style="left:423px;top:317.72px;width:87px;height:16.04px;background:#f2f2f2;box-shadow:inset 1px 1px 0 #fff;"></div>
<div style="left:417.6px;top:318.7px;width:88.6px;height:17.68px;text-align:right;font-size:13.6px;line-height:17.68px;color:#000;white-space:pre;transform:scaleX(0.930);transform-origin:100% 50%;">3600</div>
<div style="left:511.6px;top:317.72px;width:165.6px;height:16.04px;background:rgb(255,77,77);"></div>
<div style="left:509.8px;top:318.7px;width:167.2px;height:17.68px;text-align:right;font-size:13.6px;line-height:17.68px;color:#0a0a0a;white-space:pre;transform:scaleX(0.930);transform-origin:100% 50%;">94.92</div>
<div style="left:423px;top:335.36px;width:87px;height:16.04px;background:#f2f2f2;box-shadow:inset 1px 1px 0 #fff;"></div>
<div style="left:417.6px;top:336.34px;width:88.6px;height:17.68px;text-align:right;font-size:13.6px;line-height:17.68px;color:#000;white-space:pre;transform:scaleX(0.930);transform-origin:100% 50%;">4000</div>
<div style="left:511.6px;top:335.36px;width:165.6px;height:16.04px;background:rgb(255,77,77);"></div>
<div style="left:509.8px;top:336.34px;width:167.2px;height:17.68px;text-align:right;font-size:13.6px;line-height:17.68px;color:#0a0a0a;white-space:pre;transform:scaleX(0.930);transform-origin:100% 50%;">94.92</div>
<div style="left:420.4px;top:371.2px;width:307.6px;height:30.6px;background:#f0f0f0;border-top:1px solid #fafafa;"></div>
<div style="left:507px;top:374.2px;width:1px;height:24.6px;background:#d8d8d8;"></div>
<div style="left:595.4px;top:374.2px;width:1px;height:24.6px;background:#d8d8d8;"></div>
<svg style="left:716px;top:389.8px;width:11px;height:11px" viewBox="0 0 5.5 5.5"><path d="M4.2 0.8 h.9 v.9 h-.9z M4.2 2.6 h.9 v.9 h-.9z M4.2 4.2 h.9 v.9 h-.9z M2.5 2.6 h.9 v.9 h-.9z M2.5 4.2 h.9 v.9 h-.9z M0.8 4.2 h.9 v.9 h-.9z" fill="#a8a8a8"/></svg>
<div style="left:419px;top:420.4px;width:349.2px;height:476.6px;box-shadow:0 0 1.8px 1px rgba(20,20,20,.5);border-radius:6.4px 6.4px 1.2px 1.2px;"></div>
<div style="left:419px;top:420.4px;width:349.2px;height:476.6px;background:linear-gradient(#c5d7eb 0,#dbe7f5 36px,#d5e2f2 100%);border:1px solid #9aa6b5;border-radius:6px 6px 1px 1px;box-shadow:inset 0 0 0 1px rgba(255,255,255,.75);"></div>
<svg style="left:429.4px;top:434.4px;width:19.2px;height:14px" viewBox="0 0 9.6 7"><rect x="0" y="0.9" width="9.6" height="5.2" fill="#000"/><rect x="0.50" y="0" width="0.9" height="7" fill="#000"/><rect x="2.04" y="0" width="0.9" height="7" fill="#000"/><rect x="3.58" y="0" width="0.9" height="7" fill="#000"/><rect x="5.12" y="0" width="0.9" height="7" fill="#000"/><rect x="6.66" y="0" width="0.9" height="7" fill="#000"/><rect x="8.20" y="0" width="0.9" height="7" fill="#000"/></svg>
<div style="left:453.8px;top:431.12px;height:19.76px;font-size:15.2px;line-height:19.76px;color:#9aa0a8;white-space:pre;transform:scaleX(0.868);transform-origin:0 50%;">Torque Converter Engage MPH Vs. TPS</div>
<div style="left:705.8px;top:435.44px;height:18.72px;font-size:14.4px;line-height:18.72px;color:#9aa0a8;white-space:pre;">...</div>
<div style="left:720.4px;top:431.6px;width:37.6px;height:21.4px;background:linear-gradient(#dde8f4,#cddbec);border:1px solid #93a6bd;border-radius:3.2px;box-shadow:inset 0 0 0 1px rgba(255,255,255,.6);"></div>
<svg style="left:732.4px;top:436.7px;width:13.6px;height:11.2px" viewBox="0 0 6.8 5.6"><path d="M1.3 0.9 L5.5 4.7 M5.5 0.9 L1.3 4.7" stroke="#949dab" stroke-width="2.5" stroke-linecap="square" fill="none"/><path d="M1.3 0.9 L5.5 4.7 M5.5 0.9 L1.3 4.7" stroke="#fff" stroke-width="1.5" stroke-linecap="square" fill="none"/></svg>
<div style="left:428.6px;top:456.2px;width:331.4px;height:432.6px;background:#f0f0f0;"></div>
<div style="left:428.6px;top:456.2px;width:331.4px;height:60px;overflow:hidden;"><div style="left:-428.6px;top:-456.2px;width:1600px;height:1070px;">
<div style="left:431.8px;top:462.2px;width:1.2px;height:20px;background:#b5b5b5;"></div>
<div style="left:431.8px;top:489.2px;width:1.2px;height:20px;background:#b5b5b5;"></div>
<svg style="left:442.6px;top:462.6px;width:18.4px;height:18.4px" viewBox="0 0 10 10"><rect x="0.5" y="0.5" width="9" height="9" fill="#0c0c0c"/><rect x="0.3" y="0.5" width="1" height="9.2" fill="#7d7d18"/><rect x="0.3" y="8.8" width="9.2" height="0.9" fill="#7d7d18"/><rect x="2.4" y="0.5" width="5.6" height="3.6" fill="#fafafa"/><rect x="2" y="5.6" width="6.4" height="3.2" fill="#2a2a08"/><rect x="6.2" y="6.2" width="1.6" height="2.2" fill="#f4f4f4"/></svg>
<svg style="left:468.6px;top:462.6px;width:18.4px;height:18.4px" viewBox="0 0 10 10"><path d="M1.8 0.8 L8.2 9.2 M8.2 0.8 L1.8 9.2" stroke="#f41212" stroke-width="1.7" fill="none"/></svg>
<svg style="left:496px;top:462.6px;width:18.4px;height:18.4px" viewBox="0 0 10 10"><path d="M1 0.4 V9.2 H9.6" stroke="#333" stroke-width=".6" fill="none" stroke-dasharray=".9 .7"/><path d="M1.2 3 L3 5.4 L4.8 3.6 L6.6 5.8 L9.4 2.8" stroke="#ee1616" stroke-width="1.3" fill="none"/></svg>
<svg style="left:523.4px;top:462.6px;width:18.4px;height:18.4px" viewBox="0 0 10 10"><path d="M0.9 4.2 Q5 0.6 9.1 4.2" stroke="#111" stroke-width="1" fill="none"/><circle cx="5" cy="1.4" r="1" fill="#111"/><path d="M5 1.6 V8.4" stroke="#111" stroke-width="1.2"/><ellipse cx="2.1" cy="5.6" rx="2.1" ry="1.1" fill="#d2d23a" stroke="#444" stroke-width=".5"/><ellipse cx="7.9" cy="5.6" rx="2.1" ry="1.1" fill="#d2d23a" stroke="#444" stroke-width=".5"/><ellipse cx="5" cy="8.8" rx="2.8" ry="0.9" fill="#111"/></svg>
<svg style="left:550.2px;top:462.6px;width:18.4px;height:18.4px" viewBox="0 0 10 10"><rect x="1.4" y="0.4" width="7.2" height="5.4" fill="#1a1aff"/><path d="M5 1.2 L8.8 8.8 H1.2 Z" fill="#fff" stroke="#000" stroke-width="1.25" stroke-linejoin="miter"/><rect x="0.6" y="8.4" width="8.8" height="1.2" fill="#000"/><rect x="3.4" y="0.2" width="3.2" height="1.3" fill="#000"/></svg>
<svg style="left:577.4px;top:462.6px;width:18.4px;height:18.4px" viewBox="0 0 10 10"><path d="M1 0.8 L6.6 8.2 M6.6 0.8 L1 8.2" stroke="#a2a2a2" stroke-width="1.3" fill="none"/><path d="M6.4 9.3 H9.6 L8.6 6.8 Z" fill="#a2a2a2"/></svg>
<svg style="left:604.2px;top:462.6px;width:18.4px;height:18.4px" viewBox="0 0 10 10"><path d="M0.6 0.8 L3 4.4 L5.4 0.8 M3 4.4 V9.2" stroke="#a2a2a2" stroke-width="1.3" fill="none"/><path d="M7.6 9.2 V2.4" stroke="#a2a2a2" stroke-width="1.2" fill="none"/><path d="M5.6 4.2 L7.6 1 L9.6 4.2" stroke="#a2a2a2" stroke-width="1.1" fill="none"/></svg>
<svg style="left:631.4px;top:462.6px;width:18.4px;height:18.4px" viewBox="0 0 10 10"><path d="M1.2 9.2 L5 0.8 L8.8 9.2 M2.6 6.2 H7.4" stroke="#a2a2a2" stroke-width="1.3" fill="none"/></svg>
<div style="left:444.6px;top:491.29px;height:17.42px;font-size:13.4px;line-height:17.42px;color:#111;white-space:pre;transform:scaleX(0.918);transform-origin:0 50%;">Function:</div>
<div style="left:501.2px;top:487.6px;width:108.4px;height:23.6px;background:linear-gradient(#ececec,#dddddd);border:1px solid #b4b4b4;"></div>
<div style="left:506.6px;top:491.69px;height:17.42px;font-size:13.4px;line-height:17.42px;color:#111;white-space:pre;transform:scaleX(1.029);transform-origin:0 50%;">Offset (+/-)</div>
<svg style="left:594.6px;top:497.4px;width:10.4px;height:6.4px" viewBox="0 0 5.2 3.2"><path d="M0.4 0.4 L2.6 2.6 L4.8 0.4" stroke="#555" stroke-width=".8" fill="none"/></svg>
<div style="left:615.6px;top:491.29px;height:17.42px;font-size:13.4px;line-height:17.42px;color:#111;white-space:pre;transform:scaleX(0.908);transform-origin:0 50%;">Value:</div>
<div style="left:654.6px;top:487.6px;width:56px;height:23.6px;background:#fff;border:1px solid #8a8a8a;"></div>
<div style="left:661.8px;top:491.69px;height:17.42px;font-size:13.4px;line-height:17.42px;color:#111;white-space:pre;">1.0</div>
<div style="left:715px;top:488.4px;width:56px;height:22.4px;background:#e3e3e3;border:1px solid #adadad;"></div>
<div style="left:720.4px;top:492.09px;height:17.42px;font-size:13.4px;line-height:17.42px;color:#111;white-space:pre;transform:scaleX(0.934);transform-origin:0 50%;">Execute</div>
</div></div>
<div style="left:428.6px;top:515.6px;width:329.2px;height:344px;background:#808080;border-top:1px solid #5a5a5a;border-left:1px solid #5a5a5a;border-right:1px solid #e8e8e8;border-bottom:1px solid #e8e8e8;"></div>
<div style="left:431.2px;top:518.2px;width:324.2px;height:17.4px;background:#a0a0a0;"></div>
<div style="left:431.2px;top:518.2px;width:322.6px;height:15.8px;background:#f4f4f4;box-shadow:inset 1px 1px 0 #fff;overflow:hidden;"></div>
<div style="left:434.2px;top:518.17px;height:18.46px;font-size:14.2px;line-height:18.46px;color:#000;white-space:pre;font-weight:bold;transform:scaleX(0.989);transform-origin:0 50%;">Torque Converter Engage MPH Vs. TPS</div>
<div style="left:740.2px;top:519.42px;height:17.16px;font-size:13.2px;line-height:17.16px;color:#222;white-space:pre;">...</div>
<div style="left:431.2px;top:535.6px;width:214.4px;height:17.64px;background:#b0b0b0;"></div>
<div style="left:431.2px;top:535.6px;width:52.4px;height:317.52px;background:#b0b0b0;"></div>
<div style="left:483.6px;top:553.24px;width:162px;height:299.88px;background:#e4e4e4;"></div>
<div style="left:431.2px;top:535.6px;width:50.8px;height:16.04px;background:#f2f2f2;box-shadow:inset 1px 1px 0 #fff;"></div>
<div style="left:483.6px;top:535.6px;width:52.4px;height:16.04px;background:#d6d6d6;box-shadow:inset 1px 1px 0 #e8e8e8;"></div>
<div style="left:483.6px;top:536.58px;width:54px;height:17.68px;text-align:center;font-size:13.6px;line-height:17.68px;color:#000;white-space:pre;transform:scaleX(0.930);transform-origin:50% 50%;">2nd</div>
<div style="left:537.6px;top:535.6px;width:52.4px;height:16.04px;background:#f2f2f2;box-shadow:inset 1px 1px 0 #fff;"></div>
<div style="left:537.6px;top:536.58px;width:54px;height:17.68px;text-align:center;font-size:13.6px;line-height:17.68px;color:#000;white-space:pre;transform:scaleX(0.930);transform-origin:50% 50%;">3rd</div>
<div style="left:591.6px;top:535.6px;width:52.4px;height:16.04px;background:#f2f2f2;box-shadow:inset 1px 1px 0 #fff;"></div>
<div style="left:591.6px;top:536.58px;width:54px;height:17.68px;text-align:center;font-size:13.6px;line-height:17.68px;color:#000;white-space:pre;transform:scaleX(0.930);transform-origin:50% 50%;">4th</div>
<div style="left:431.2px;top:553.24px;width:50.8px;height:16.04px;background:#d6d6d6;box-shadow:inset 1px 1px 0 #e8e8e8;"></div>
<div style="left:426.6px;top:554.22px;width:52.4px;height:17.68px;text-align:right;font-size:13.6px;line-height:17.68px;color:#000;white-space:pre;transform:scaleX(0.930);transform-origin:100% 50%;">0.0</div>
<div style="left:483px;top:552.64px;width:54.2px;height:17.84px;background:rgb(217,119,119);border:1px solid #3a3a3a;"></div>
<div style="left:481.8px;top:554.22px;width:54px;height:17.68px;text-align:right;font-size:13.6px;line-height:17.68px;color:#0a0a0a;white-space:pre;transform:scaleX(0.930);transform-origin:100% 50%;">127.50</div>
<div style="left:537.6px;top:553.24px;width:52.4px;height:16.04px;background:rgb(153,255,255);"></div>
<div style="left:535.8px;top:554.22px;width:54px;height:17.68px;text-align:right;font-size:13.6px;line-height:17.68px;color:#0a0a0a;white-space:pre;transform:scaleX(0.930);transform-origin:100% 50%;">42.00</div>
<div style="left:591.6px;top:553.24px;width:52.4px;height:16.04px;background:rgb(153,255,255);"></div>
<div style="left:589.8px;top:554.22px;width:54px;height:17.68px;text-align:right;font-size:13.6px;line-height:17.68px;color:#0a0a0a;white-space:pre;transform:scaleX(0.930);transform-origin:100% 50%;">42.00</div>
<div style="left:431.2px;top:570.88px;width:50.8px;height:16.04px;background:#f2f2f2;box-shadow:inset 1px 1px 0 #fff;"></div>
<div style="left:426.6px;top:571.86px;width:52.4px;height:17.68px;text-align:right;font-size:13.6px;line-height:17.68px;color:#000;white-space:pre;transform:scaleX(0.930);transform-origin:100% 50%;">6.2</div>
<div style="left:483.6px;top:570.88px;width:52.4px;height:16.04px;background:rgb(255,77,77);"></div>
<div style="left:481.8px;top:571.86px;width:54px;height:17.68px;text-align:right;font-size:13.6px;line-height:17.68px;color:#0a0a0a;white-space:pre;transform:scaleX(0.930);transform-origin:100% 50%;">127.50</div>
<div style="left:537.6px;top:570.88px;width:52.4px;height:16.04px;background:rgb(153,255,255);"></div>
<div style="left:535.8px;top:571.86px;width:54px;height:17.68px;text-align:right;font-size:13.6px;line-height:17.68px;color:#0a0a0a;white-space:pre;transform:scaleX(0.930);transform-origin:100% 50%;">42.00</div>
<div style="left:591.6px;top:570.88px;width:52.4px;height:16.04px;background:rgb(153,255,255);"></div>
<div style="left:589.8px;top:571.86px;width:54px;height:17.68px;text-align:right;font-size:13.6px;line-height:17.68px;color:#0a0a0a;white-space:pre;transform:scaleX(0.930);transform-origin:100% 50%;">42.00</div>
<div style="left:431.2px;top:588.52px;width:50.8px;height:16.04px;background:#f2f2f2;box-shadow:inset 1px 1px 0 #fff;"></div>
<div style="left:426.6px;top:589.5px;width:52.4px;height:17.68px;text-align:right;font-size:13.6px;line-height:17.68px;color:#000;white-space:pre;transform:scaleX(0.930);transform-origin:100% 50%;">12.5</div>
<div style="left:483.6px;top:588.52px;width:52.4px;height:16.04px;background:rgb(255,77,77);"></div>
<div style="left:481.8px;top:589.5px;width:54px;height:17.68px;text-align:right;font-size:13.6px;line-height:17.68px;color:#0a0a0a;white-space:pre;transform:scaleX(0.930);transform-origin:100% 50%;">127.50</div>
<div style="left:537.6px;top:588.52px;width:52.4px;height:16.04px;background:rgb(157,248,248);"></div>
<div style="left:535.8px;top:589.5px;width:54px;height:17.68px;text-align:right;font-size:13.6px;line-height:17.68px;color:#0a0a0a;white-space:pre;transform:scaleX(0.930);transform-origin:100% 50%;">45.50</div>
<div style="left:591.6px;top:588.52px;width:52.4px;height:16.04px;background:rgb(157,248,248);"></div>
<div style="left:589.8px;top:589.5px;width:54px;height:17.68px;text-align:right;font-size:13.6px;line-height:17.68px;color:#0a0a0a;white-space:pre;transform:scaleX(0.930);transform-origin:100% 50%;">45.50</div>
<div style="left:431.2px;top:606.16px;width:50.8px;height:16.04px;background:#f2f2f2;box-shadow:inset 1px 1px 0 #fff;"></div>
<div style="left:426.6px;top:607.14px;width:52.4px;height:17.68px;text-align:right;font-size:13.6px;line-height:17.68px;color:#000;white-space:pre;transform:scaleX(0.930);transform-origin:100% 50%;">18.8</div>
<div style="left:483.6px;top:606.16px;width:52.4px;height:16.04px;background:rgb(255,77,77);"></div>
<div style="left:481.8px;top:607.14px;width:54px;height:17.68px;text-align:right;font-size:13.6px;line-height:17.68px;color:#0a0a0a;white-space:pre;transform:scaleX(0.930);transform-origin:100% 50%;">127.50</div>
<div style="left:537.6px;top:606.16px;width:52.4px;height:16.04px;background:rgb(161,241,241);"></div>
<div style="left:535.8px;top:607.14px;width:54px;height:17.68px;text-align:right;font-size:13.6px;line-height:17.68px;color:#0a0a0a;white-space:pre;transform:scaleX(0.930);transform-origin:100% 50%;">48.50</div>
<div style="left:591.6px;top:606.16px;width:52.4px;height:16.04px;background:rgb(161,241,241);"></div>
<div style="left:589.8px;top:607.14px;width:54px;height:17.68px;text-align:right;font-size:13.6px;line-height:17.68px;color:#0a0a0a;white-space:pre;transform:scaleX(0.930);transform-origin:100% 50%;">48.50</div>
<div style="left:431.2px;top:623.8px;width:50.8px;height:16.04px;background:#f2f2f2;box-shadow:inset 1px 1px 0 #fff;"></div>
<div style="left:426.6px;top:624.78px;width:52.4px;height:17.68px;text-align:right;font-size:13.6px;line-height:17.68px;color:#000;white-space:pre;transform:scaleX(0.930);transform-origin:100% 50%;">25.0</div>
<div style="left:483.6px;top:623.8px;width:52.4px;height:16.04px;background:rgb(255,77,77);"></div>
<div style="left:481.8px;top:624.78px;width:54px;height:17.68px;text-align:right;font-size:13.6px;line-height:17.68px;color:#0a0a0a;white-space:pre;transform:scaleX(0.930);transform-origin:100% 50%;">127.50</div>
<div style="left:537.6px;top:623.8px;width:52.4px;height:16.04px;background:rgb(166,233,233);"></div>
<div style="left:535.8px;top:624.78px;width:54px;height:17.68px;text-align:right;font-size:13.6px;line-height:17.68px;color:#0a0a0a;white-space:pre;transform:scaleX(0.930);transform-origin:100% 50%;">52.50</div>
<div style="left:591.6px;top:623.8px;width:52.4px;height:16.04px;background:rgb(166,233,233);"></div>
<div style="left:589.8px;top:624.78px;width:54px;height:17.68px;text-align:right;font-size:13.6px;line-height:17.68px;color:#0a0a0a;white-space:pre;transform:scaleX(0.930);transform-origin:100% 50%;">52.50</div>
<div style="left:431.2px;top:641.44px;width:50.8px;height:16.04px;background:#f2f2f2;box-shadow:inset 1px 1px 0 #fff;"></div>
<div style="left:426.6px;top:642.42px;width:52.4px;height:17.68px;text-align:right;font-size:13.6px;line-height:17.68px;color:#000;white-space:pre;transform:scaleX(0.930);transform-origin:100% 50%;">31.2</div>
<div style="left:483.6px;top:641.44px;width:52.4px;height:16.04px;background:rgb(255,77,77);"></div>
<div style="left:481.8px;top:642.42px;width:54px;height:17.68px;text-align:right;font-size:13.6px;line-height:17.68px;color:#0a0a0a;white-space:pre;transform:scaleX(0.930);transform-origin:100% 50%;">127.50</div>
<div style="left:537.6px;top:641.44px;width:52.4px;height:16.04px;background:rgb(170,226,226);"></div>
<div style="left:535.8px;top:642.42px;width:54px;height:17.68px;text-align:right;font-size:13.6px;line-height:17.68px;color:#0a0a0a;white-space:pre;transform:scaleX(0.930);transform-origin:100% 50%;">56.00</div>
<div style="left:591.6px;top:641.44px;width:52.4px;height:16.04px;background:rgb(170,226,226);"></div>
<div style="left:589.8px;top:642.42px;width:54px;height:17.68px;text-align:right;font-size:13.6px;line-height:17.68px;color:#0a0a0a;white-space:pre;transform:scaleX(0.930);transform-origin:100% 50%;">56.00</div>
<div style="left:431.2px;top:659.08px;width:50.8px;height:16.04px;background:#f2f2f2;box-shadow:inset 1px 1px 0 #fff;"></div>
<div style="left:426.6px;top:660.06px;width:52.4px;height:17.68px;text-align:right;font-size:13.6px;line-height:17.68px;color:#000;white-space:pre;transform:scaleX(0.930);transform-origin:100% 50%;">37.5</div>
<div style="left:483.6px;top:659.08px;width:52.4px;height:16.04px;background:rgb(255,77,77);"></div>
<div style="left:481.8px;top:660.06px;width:54px;height:17.68px;text-align:right;font-size:13.6px;line-height:17.68px;color:#0a0a0a;white-space:pre;transform:scaleX(0.930);transform-origin:100% 50%;">127.50</div>
<div style="left:537.6px;top:659.08px;width:52.4px;height:16.04px;background:rgb(172,222,222);"></div>
<div style="left:535.8px;top:660.06px;width:54px;height:17.68px;text-align:right;font-size:13.6px;line-height:17.68px;color:#0a0a0a;white-space:pre;transform:scaleX(0.930);transform-origin:100% 50%;">58.00</div>
<div style="left:591.6px;top:659.08px;width:52.4px;height:16.04px;background:rgb(172,222,222);"></div>
<div style="left:589.8px;top:660.06px;width:54px;height:17.68px;text-align:right;font-size:13.6px;line-height:17.68px;color:#0a0a0a;white-space:pre;transform:scaleX(0.930);transform-origin:100% 50%;">58.00</div>
<div style="left:431.2px;top:676.72px;width:50.8px;height:16.04px;background:#f2f2f2;box-shadow:inset 1px 1px 0 #fff;"></div>
<div style="left:426.6px;top:677.7px;width:52.4px;height:17.68px;text-align:right;font-size:13.6px;line-height:17.68px;color:#000;white-space:pre;transform:scaleX(0.930);transform-origin:100% 50%;">43.8</div>
<div style="left:483.6px;top:676.72px;width:52.4px;height:16.04px;background:rgb(255,77,77);"></div>
<div style="left:481.8px;top:677.7px;width:54px;height:17.68px;text-align:right;font-size:13.6px;line-height:17.68px;color:#0a0a0a;white-space:pre;transform:scaleX(0.930);transform-origin:100% 50%;">127.50</div>
<div style="left:537.6px;top:676.72px;width:52.4px;height:16.04px;background:rgb(172,222,222);"></div>
<div style="left:535.8px;top:677.7px;width:54px;height:17.68px;text-align:right;font-size:13.6px;line-height:17.68px;color:#0a0a0a;white-space:pre;transform:scaleX(0.930);transform-origin:100% 50%;">58.00</div>
<div style="left:591.6px;top:676.72px;width:52.4px;height:16.04px;background:rgb(172,222,222);"></div>
<div style="left:589.8px;top:677.7px;width:54px;height:17.68px;text-align:right;font-size:13.6px;line-height:17.68px;color:#0a0a0a;white-space:pre;transform:scaleX(0.930);transform-origin:100% 50%;">58.00</div>
<div style="left:431.2px;top:694.36px;width:50.8px;height:16.04px;background:#f2f2f2;box-shadow:inset 1px 1px 0 #fff;"></div>
<div style="left:426.6px;top:695.34px;width:52.4px;height:17.68px;text-align:right;font-size:13.6px;line-height:17.68px;color:#000;white-space:pre;transform:scaleX(0.930);transform-origin:100% 50%;">50.0</div>
<div style="left:483.6px;top:694.36px;width:52.4px;height:16.04px;background:rgb(255,77,77);"></div>
<div style="left:481.8px;top:695.34px;width:54px;height:17.68px;text-align:right;font-size:13.6px;line-height:17.68px;color:#0a0a0a;white-space:pre;transform:scaleX(0.930);transform-origin:100% 50%;">127.50</div>
<div style="left:537.6px;top:694.36px;width:52.4px;height:16.04px;background:rgb(172,222,222);"></div>
<div style="left:535.8px;top:695.34px;width:54px;height:17.68px;text-align:right;font-size:13.6px;line-height:17.68px;color:#0a0a0a;white-space:pre;transform:scaleX(0.930);transform-origin:100% 50%;">58.00</div>
<div style="left:591.6px;top:694.36px;width:52.4px;height:16.04px;background:rgb(172,222,222);"></div>
<div style="left:589.8px;top:695.34px;width:54px;height:17.68px;text-align:right;font-size:13.6px;line-height:17.68px;color:#0a0a0a;white-space:pre;transform:scaleX(0.930);transform-origin:100% 50%;">58.00</div>
<div style="left:431.2px;top:712px;width:50.8px;height:16.04px;background:#f2f2f2;box-shadow:inset 1px 1px 0 #fff;"></div>
<div style="left:426.6px;top:712.98px;width:52.4px;height:17.68px;text-align:right;font-size:13.6px;line-height:17.68px;color:#000;white-space:pre;transform:scaleX(0.930);transform-origin:100% 50%;">56.3</div>
<div style="left:483.6px;top:712px;width:52.4px;height:16.04px;background:rgb(255,77,77);"></div>
<div style="left:481.8px;top:712.98px;width:54px;height:17.68px;text-align:right;font-size:13.6px;line-height:17.68px;color:#0a0a0a;white-space:pre;transform:scaleX(0.930);transform-origin:100% 50%;">127.50</div>
<div style="left:537.6px;top:712px;width:52.4px;height:16.04px;background:rgb(172,222,222);"></div>
<div style="left:535.8px;top:712.98px;width:54px;height:17.68px;text-align:right;font-size:13.6px;line-height:17.68px;color:#0a0a0a;white-space:pre;transform:scaleX(0.930);transform-origin:100% 50%;">58.00</div>
<div style="left:591.6px;top:712px;width:52.4px;height:16.04px;background:rgb(172,222,222);"></div>
<div style="left:589.8px;top:712.98px;width:54px;height:17.68px;text-align:right;font-size:13.6px;line-height:17.68px;color:#0a0a0a;white-space:pre;transform:scaleX(0.930);transform-origin:100% 50%;">58.00</div>
<div style="left:431.2px;top:729.64px;width:50.8px;height:16.04px;background:#f2f2f2;box-shadow:inset 1px 1px 0 #fff;"></div>
<div style="left:426.6px;top:730.62px;width:52.4px;height:17.68px;text-align:right;font-size:13.6px;line-height:17.68px;color:#000;white-space:pre;transform:scaleX(0.930);transform-origin:100% 50%;">62.5</div>
<div style="left:483.6px;top:729.64px;width:52.4px;height:16.04px;background:rgb(255,77,77);"></div>
<div style="left:481.8px;top:730.62px;width:54px;height:17.68px;text-align:right;font-size:13.6px;line-height:17.68px;color:#0a0a0a;white-space:pre;transform:scaleX(0.930);transform-origin:100% 50%;">127.50</div>
<div style="left:537.6px;top:729.64px;width:52.4px;height:16.04px;background:rgb(172,222,222);"></div>
<div style="left:535.8px;top:730.62px;width:54px;height:17.68px;text-align:right;font-size:13.6px;line-height:17.68px;color:#0a0a0a;white-space:pre;transform:scaleX(0.930);transform-origin:100% 50%;">58.00</div>
<div style="left:591.6px;top:729.64px;width:52.4px;height:16.04px;background:rgb(172,222,222);"></div>
<div style="left:589.8px;top:730.62px;width:54px;height:17.68px;text-align:right;font-size:13.6px;line-height:17.68px;color:#0a0a0a;white-space:pre;transform:scaleX(0.930);transform-origin:100% 50%;">58.00</div>
<div style="left:431.2px;top:747.28px;width:50.8px;height:16.04px;background:#f2f2f2;box-shadow:inset 1px 1px 0 #fff;"></div>
<div style="left:426.6px;top:748.26px;width:52.4px;height:17.68px;text-align:right;font-size:13.6px;line-height:17.68px;color:#000;white-space:pre;transform:scaleX(0.930);transform-origin:100% 50%;">68.8</div>
<div style="left:483.6px;top:747.28px;width:52.4px;height:16.04px;background:rgb(255,77,77);"></div>
<div style="left:481.8px;top:748.26px;width:54px;height:17.68px;text-align:right;font-size:13.6px;line-height:17.68px;color:#0a0a0a;white-space:pre;transform:scaleX(0.930);transform-origin:100% 50%;">127.50</div>
<div style="left:537.6px;top:747.28px;width:52.4px;height:16.04px;background:rgb(172,222,222);"></div>
<div style="left:535.8px;top:748.26px;width:54px;height:17.68px;text-align:right;font-size:13.6px;line-height:17.68px;color:#0a0a0a;white-space:pre;transform:scaleX(0.930);transform-origin:100% 50%;">58.00</div>
<div style="left:591.6px;top:747.28px;width:52.4px;height:16.04px;background:rgb(172,222,222);"></div>
<div style="left:589.8px;top:748.26px;width:54px;height:17.68px;text-align:right;font-size:13.6px;line-height:17.68px;color:#0a0a0a;white-space:pre;transform:scaleX(0.930);transform-origin:100% 50%;">58.00</div>
<div style="left:431.2px;top:764.92px;width:50.8px;height:16.04px;background:#f2f2f2;box-shadow:inset 1px 1px 0 #fff;"></div>
<div style="left:426.6px;top:765.9px;width:52.4px;height:17.68px;text-align:right;font-size:13.6px;line-height:17.68px;color:#000;white-space:pre;transform:scaleX(0.930);transform-origin:100% 50%;">75.0</div>
<div style="left:483.6px;top:764.92px;width:52.4px;height:16.04px;background:rgb(255,77,77);"></div>
<div style="left:481.8px;top:765.9px;width:54px;height:17.68px;text-align:right;font-size:13.6px;line-height:17.68px;color:#0a0a0a;white-space:pre;transform:scaleX(0.930);transform-origin:100% 50%;">127.50</div>
<div style="left:537.6px;top:764.92px;width:52.4px;height:16.04px;background:rgb(172,222,222);"></div>
<div style="left:535.8px;top:765.9px;width:54px;height:17.68px;text-align:right;font-size:13.6px;line-height:17.68px;color:#0a0a0a;white-space:pre;transform:scaleX(0.930);transform-origin:100% 50%;">58.00</div>
<div style="left:591.6px;top:764.92px;width:52.4px;height:16.04px;background:rgb(172,222,222);"></div>
<div style="left:589.8px;top:765.9px;width:54px;height:17.68px;text-align:right;font-size:13.6px;line-height:17.68px;color:#0a0a0a;white-space:pre;transform:scaleX(0.930);transform-origin:100% 50%;">58.00</div>
<div style="left:431.2px;top:782.56px;width:50.8px;height:16.04px;background:#f2f2f2;box-shadow:inset 1px 1px 0 #fff;"></div>
<div style="left:426.6px;top:783.54px;width:52.4px;height:17.68px;text-align:right;font-size:13.6px;line-height:17.68px;color:#000;white-space:pre;transform:scaleX(0.930);transform-origin:100% 50%;">81.3</div>
<div style="left:483.6px;top:782.56px;width:52.4px;height:16.04px;background:rgb(255,77,77);"></div>
<div style="left:481.8px;top:783.54px;width:54px;height:17.68px;text-align:right;font-size:13.6px;line-height:17.68px;color:#0a0a0a;white-space:pre;transform:scaleX(0.930);transform-origin:100% 50%;">127.50</div>
<div style="left:537.6px;top:782.56px;width:52.4px;height:16.04px;background:rgb(172,222,222);"></div>
<div style="left:535.8px;top:783.54px;width:54px;height:17.68px;text-align:right;font-size:13.6px;line-height:17.68px;color:#0a0a0a;white-space:pre;transform:scaleX(0.930);transform-origin:100% 50%;">58.00</div>
<div style="left:591.6px;top:782.56px;width:52.4px;height:16.04px;background:rgb(172,222,222);"></div>
<div style="left:589.8px;top:783.54px;width:54px;height:17.68px;text-align:right;font-size:13.6px;line-height:17.68px;color:#0a0a0a;white-space:pre;transform:scaleX(0.930);transform-origin:100% 50%;">58.00</div>
<div style="left:431.2px;top:800.2px;width:50.8px;height:16.04px;background:#f2f2f2;box-shadow:inset 1px 1px 0 #fff;"></div>
<div style="left:426.6px;top:801.18px;width:52.4px;height:17.68px;text-align:right;font-size:13.6px;line-height:17.68px;color:#000;white-space:pre;transform:scaleX(0.930);transform-origin:100% 50%;">87.5</div>
<div style="left:483.6px;top:800.2px;width:52.4px;height:16.04px;background:rgb(255,77,77);"></div>
<div style="left:481.8px;top:801.18px;width:54px;height:17.68px;text-align:right;font-size:13.6px;line-height:17.68px;color:#0a0a0a;white-space:pre;transform:scaleX(0.930);transform-origin:100% 50%;">127.50</div>
<div style="left:537.6px;top:800.2px;width:52.4px;height:16.04px;background:rgb(172,222,222);"></div>
<div style="left:535.8px;top:801.18px;width:54px;height:17.68px;text-align:right;font-size:13.6px;line-height:17.68px;color:#0a0a0a;white-space:pre;transform:scaleX(0.930);transform-origin:100% 50%;">58.00</div>
<div style="left:591.6px;top:800.2px;width:52.4px;height:16.04px;background:rgb(172,222,222);"></div>
<div style="left:589.8px;top:801.18px;width:54px;height:17.68px;text-align:right;font-size:13.6px;line-height:17.68px;color:#0a0a0a;white-space:pre;transform:scaleX(0.930);transform-origin:100% 50%;">58.00</div>
<div style="left:431.2px;top:817.84px;width:50.8px;height:16.04px;background:#f2f2f2;box-shadow:inset 1px 1px 0 #fff;"></div>
<div style="left:426.6px;top:818.82px;width:52.4px;height:17.68px;text-align:right;font-size:13.6px;line-height:17.68px;color:#000;white-space:pre;transform:scaleX(0.930);transform-origin:100% 50%;">93.8</div>
<div style="left:483.6px;top:817.84px;width:52.4px;height:16.04px;background:rgb(255,77,77);"></div>
<div style="left:481.8px;top:818.82px;width:54px;height:17.68px;text-align:right;font-size:13.6px;line-height:17.68px;color:#0a0a0a;white-space:pre;transform:scaleX(0.930);transform-origin:100% 50%;">127.50</div>
<div style="left:537.6px;top:817.84px;width:52.4px;height:16.04px;background:rgb(172,222,222);"></div>
<div style="left:535.8px;top:818.82px;width:54px;height:17.68px;text-align:right;font-size:13.6px;line-height:17.68px;color:#0a0a0a;white-space:pre;transform:scaleX(0.930);transform-origin:100% 50%;">58.00</div>
<div style="left:591.6px;top:817.84px;width:52.4px;height:16.04px;background:rgb(172,222,222);"></div>
<div style="left:589.8px;top:818.82px;width:54px;height:17.68px;text-align:right;font-size:13.6px;line-height:17.68px;color:#0a0a0a;white-space:pre;transform:scaleX(0.930);transform-origin:100% 50%;">58.00</div>
<div style="left:431.2px;top:835.48px;width:50.8px;height:16.04px;background:#f2f2f2;box-shadow:inset 1px 1px 0 #fff;"></div>
<div style="left:426.6px;top:836.46px;width:52.4px;height:17.68px;text-align:right;font-size:13.6px;line-height:17.68px;color:#000;white-space:pre;transform:scaleX(0.930);transform-origin:100% 50%;">100</div>
<div style="left:483.6px;top:835.48px;width:52.4px;height:16.04px;background:rgb(255,77,77);"></div>
<div style="left:481.8px;top:836.46px;width:54px;height:17.68px;text-align:right;font-size:13.6px;line-height:17.68px;color:#0a0a0a;white-space:pre;transform:scaleX(0.930);transform-origin:100% 50%;">127.50</div>
<div style="left:537.6px;top:835.48px;width:52.4px;height:16.04px;background:rgb(172,222,222);"></div>
<div style="left:535.8px;top:836.46px;width:54px;height:17.68px;text-align:right;font-size:13.6px;line-height:17.68px;color:#0a0a0a;white-space:pre;transform:scaleX(0.930);transform-origin:100% 50%;">58.00</div>
<div style="left:591.6px;top:835.48px;width:52.4px;height:16.04px;background:rgb(172,222,222);"></div>
<div style="left:589.8px;top:836.46px;width:54px;height:17.68px;text-align:right;font-size:13.6px;line-height:17.68px;color:#0a0a0a;white-space:pre;transform:scaleX(0.930);transform-origin:100% 50%;">58.00</div>
<div style="left:428.6px;top:859.6px;width:331.4px;height:29.2px;background:#f0f0f0;border-top:1px solid #fafafa;"></div>
<div style="left:515.2px;top:862.6px;width:1px;height:23.2px;background:#d8d8d8;"></div>
<div style="left:603.6px;top:862.6px;width:1px;height:23.2px;background:#d8d8d8;"></div>
<svg style="left:748px;top:876.8px;width:11px;height:11px" viewBox="0 0 5.5 5.5"><path d="M4.2 0.8 h.9 v.9 h-.9z M4.2 2.6 h.9 v.9 h-.9z M4.2 4.2 h.9 v.9 h-.9z M2.5 2.6 h.9 v.9 h-.9z M2.5 4.2 h.9 v.9 h-.9z M0.8 4.2 h.9 v.9 h-.9z" fill="#a8a8a8"/></svg>
<div style="left:774.6px;top:83px;width:383.2px;height:469.8px;box-shadow:0 0 1.8px 1px rgba(20,20,20,.5);border-radius:6.4px 6.4px 1.2px 1.2px;"></div>
<div style="left:774.6px;top:83px;width:383.2px;height:469.8px;background:linear-gradient(#c5d7eb 0,#dbe7f5 36px,#d5e2f2 100%);border:1px solid #9aa6b5;border-radius:6px 6px 1px 1px;box-shadow:inset 0 0 0 1px rgba(255,255,255,.75);"></div>
<svg style="left:785px;top:97px;width:19.2px;height:14px" viewBox="0 0 9.6 7"><rect x="0" y="0.9" width="9.6" height="5.2" fill="#000"/><rect x="0.50" y="0" width="0.9" height="7" fill="#000"/><rect x="2.04" y="0" width="0.9" height="7" fill="#000"/><rect x="3.58" y="0" width="0.9" height="7" fill="#000"/><rect x="5.12" y="0" width="0.9" height="7" fill="#000"/><rect x="6.66" y="0" width="0.9" height="7" fill="#000"/><rect x="8.20" y="0" width="0.9" height="7" fill="#000"/></svg>
<div style="left:809.4px;top:93.72px;height:19.76px;font-size:15.2px;line-height:19.76px;color:#9aa0a8;white-space:pre;transform:scaleX(0.860);transform-origin:0 50%;">Line Pressure Mod. Vs. Current Gear Vs. TPS</div>
<div style="left:1095.4px;top:98.04px;height:18.72px;font-size:14.4px;line-height:18.72px;color:#9aa0a8;white-space:pre;">...</div>
<div style="left:1110px;top:94.2px;width:37.6px;height:21.4px;background:linear-gradient(#dde8f4,#cddbec);border:1px solid #93a6bd;border-radius:3.2px;box-shadow:inset 0 0 0 1px rgba(255,255,255,.6);"></div>
<svg style="left:1122px;top:99.3px;width:13.6px;height:11.2px" viewBox="0 0 6.8 5.6"><path d="M1.3 0.9 L5.5 4.7 M5.5 0.9 L1.3 4.7" stroke="#949dab" stroke-width="2.5" stroke-linecap="square" fill="none"/><path d="M1.3 0.9 L5.5 4.7 M5.5 0.9 L1.3 4.7" stroke="#fff" stroke-width="1.5" stroke-linecap="square" fill="none"/></svg>
<div style="left:784.2px;top:118.8px;width:365.4px;height:425.8px;background:#f0f0f0;"></div>
<div style="left:784.2px;top:118.8px;width:365.4px;height:60px;overflow:hidden;"><div style="left:-784.2px;top:-118.8px;width:1600px;height:1070px;">
<div style="left:787.4px;top:124.8px;width:1.2px;height:20px;background:#b5b5b5;"></div>
<div style="left:787.4px;top:151.8px;width:1.2px;height:20px;background:#b5b5b5;"></div>
<svg style="left:798.2px;top:125.2px;width:18.4px;height:18.4px" viewBox="0 0 10 10"><rect x="0.5" y="0.5" width="9" height="9" fill="#0c0c0c"/><rect x="0.3" y="0.5" width="1" height="9.2" fill="#7d7d18"/><rect x="0.3" y="8.8" width="9.2" height="0.9" fill="#7d7d18"/><rect x="2.4" y="0.5" width="5.6" height="3.6" fill="#fafafa"/><rect x="2" y="5.6" width="6.4" height="3.2" fill="#2a2a08"/><rect x="6.2" y="6.2" width="1.6" height="2.2" fill="#f4f4f4"/></svg>
<svg style="left:824.2px;top:125.2px;width:18.4px;height:18.4px" viewBox="0 0 10 10"><path d="M1.8 0.8 L8.2 9.2 M8.2 0.8 L1.8 9.2" stroke="#f41212" stroke-width="1.7" fill="none"/></svg>
<svg style="left:851.6px;top:125.2px;width:18.4px;height:18.4px" viewBox="0 0 10 10"><path d="M1 0.4 V9.2 H9.6" stroke="#333" stroke-width=".6" fill="none" stroke-dasharray=".9 .7"/><path d="M1.2 3 L3 5.4 L4.8 3.6 L6.6 5.8 L9.4 2.8" stroke="#ee1616" stroke-width="1.3" fill="none"/></svg>
<svg style="left:879px;top:125.2px;width:18.4px;height:18.4px" viewBox="0 0 10 10"><path d="M0.9 4.2 Q5 0.6 9.1 4.2" stroke="#111" stroke-width="1" fill="none"/><circle cx="5" cy="1.4" r="1" fill="#111"/><path d="M5 1.6 V8.4" stroke="#111" stroke-width="1.2"/><ellipse cx="2.1" cy="5.6" rx="2.1" ry="1.1" fill="#d2d23a" stroke="#444" stroke-width=".5"/><ellipse cx="7.9" cy="5.6" rx="2.1" ry="1.1" fill="#d2d23a" stroke="#444" stroke-width=".5"/><ellipse cx="5" cy="8.8" rx="2.8" ry="0.9" fill="#111"/></svg>
<svg style="left:905.8px;top:125.2px;width:18.4px;height:18.4px" viewBox="0 0 10 10"><rect x="1.4" y="0.4" width="7.2" height="5.4" fill="#1a1aff"/><path d="M5 1.2 L8.8 8.8 H1.2 Z" fill="#fff" stroke="#000" stroke-width="1.25" stroke-linejoin="miter"/><rect x="0.6" y="8.4" width="8.8" height="1.2" fill="#000"/><rect x="3.4" y="0.2" width="3.2" height="1.3" fill="#000"/></svg>
<svg style="left:933px;top:125.2px;width:18.4px;height:18.4px" viewBox="0 0 10 10"><path d="M1 0.8 L6.6 8.2 M6.6 0.8 L1 8.2" stroke="#a2a2a2" stroke-width="1.3" fill="none"/><path d="M6.4 9.3 H9.6 L8.6 6.8 Z" fill="#a2a2a2"/></svg>
<svg style="left:959.8px;top:125.2px;width:18.4px;height:18.4px" viewBox="0 0 10 10"><path d="M0.6 0.8 L3 4.4 L5.4 0.8 M3 4.4 V9.2" stroke="#a2a2a2" stroke-width="1.3" fill="none"/><path d="M7.6 9.2 V2.4" stroke="#a2a2a2" stroke-width="1.2" fill="none"/><path d="M5.6 4.2 L7.6 1 L9.6 4.2" stroke="#a2a2a2" stroke-width="1.1" fill="none"/></svg>
<svg style="left:987px;top:125.2px;width:18.4px;height:18.4px" viewBox="0 0 10 10"><path d="M1.2 9.2 L5 0.8 L8.8 9.2 M2.6 6.2 H7.4" stroke="#a2a2a2" stroke-width="1.3" fill="none"/></svg>
<div style="left:800.2px;top:153.89px;height:17.42px;font-size:13.4px;line-height:17.42px;color:#111;white-space:pre;transform:scaleX(0.918);transform-origin:0 50%;">Function:</div>
<div style="left:856.8px;top:150.2px;width:108.4px;height:23.6px;background:linear-gradient(#ececec,#dddddd);border:1px solid #b4b4b4;"></div>
<div style="left:862.2px;top:154.29px;height:17.42px;font-size:13.4px;line-height:17.42px;color:#111;white-space:pre;transform:scaleX(1.029);transform-origin:0 50%;">Offset (+/-)</div>
<svg style="left:950.2px;top:160px;width:10.4px;height:6.4px" viewBox="0 0 5.2 3.2"><path d="M0.4 0.4 L2.6 2.6 L4.8 0.4" stroke="#555" stroke-width=".8" fill="none"/></svg>
<div style="left:971.2px;top:153.89px;height:17.42px;font-size:13.4px;line-height:17.42px;color:#111;white-space:pre;transform:scaleX(0.908);transform-origin:0 50%;">Value:</div>
<div style="left:1010.2px;top:150.2px;width:56px;height:23.6px;background:#fff;border:1px solid #8a8a8a;"></div>
<div style="left:1017.4px;top:154.29px;height:17.42px;font-size:13.4px;line-height:17.42px;color:#111;white-space:pre;">1.0</div>
<div style="left:1070.6px;top:151px;width:56px;height:22.4px;background:#e3e3e3;border:1px solid #adadad;"></div>
<div style="left:1076px;top:154.69px;height:17.42px;font-size:13.4px;line-height:17.42px;color:#111;white-space:pre;transform:scaleX(0.934);transform-origin:0 50%;">Execute</div>
</div></div>
<div style="left:784.2px;top:178.2px;width:363.2px;height:337.4px;background:#808080;border-top:1px solid #5a5a5a;border-left:1px solid #5a5a5a;border-right:1px solid #e8e8e8;border-bottom:1px solid #e8e8e8;"></div>
<div style="left:786.8px;top:180.8px;width:358.2px;height:17.4px;background:#a0a0a0;"></div>
<div style="left:786.8px;top:180.8px;width:356.6px;height:15.8px;background:#f4f4f4;box-shadow:inset 1px 1px 0 #fff;overflow:hidden;"></div>
<div style="left:787.4px;top:180.77px;height:18.46px;font-size:14.2px;line-height:18.46px;color:#000;white-space:pre;font-weight:bold;transform:scaleX(1.015);transform-origin:0 50%;">Line Pressure Mod. Vs. Current Gear Vs. TPS</div>
<div style="left:1129.8px;top:182.02px;height:17.16px;font-size:13.2px;line-height:17.16px;color:#222;white-space:pre;">...</div>
<div style="left:786.8px;top:198.2px;width:215px;height:17.64px;background:#b0b0b0;"></div>
<div style="left:786.8px;top:198.2px;width:53px;height:317.52px;background:#b0b0b0;"></div>
<div style="left:839.8px;top:215.84px;width:162px;height:299.88px;background:#e4e4e4;"></div>
<div style="left:786.8px;top:198.2px;width:51.4px;height:16.04px;background:#f2f2f2;box-shadow:inset 1px 1px 0 #fff;"></div>
<div style="left:839.8px;top:198.2px;width:52.4px;height:16.04px;background:#d6d6d6;box-shadow:inset 1px 1px 0 #e8e8e8;"></div>
<div style="left:839.8px;top:199.18px;width:54px;height:17.68px;text-align:center;font-size:13.6px;line-height:17.68px;color:#000;white-space:pre;transform:scaleX(0.930);transform-origin:50% 50%;">2.00</div>
<div style="left:893.8px;top:198.2px;width:52.4px;height:16.04px;background:#f2f2f2;box-shadow:inset 1px 1px 0 #fff;"></div>
<div style="left:893.8px;top:199.18px;width:54px;height:17.68px;text-align:center;font-size:13.6px;line-height:17.68px;color:#000;white-space:pre;transform:scaleX(0.930);transform-origin:50% 50%;">3.00</div>
<div style="left:947.8px;top:198.2px;width:52.4px;height:16.04px;background:#f2f2f2;box-shadow:inset 1px 1px 0 #fff;"></div>
<div style="left:947.8px;top:199.18px;width:54px;height:17.68px;text-align:center;font-size:13.6px;line-height:17.68px;color:#000;white-space:pre;transform:scaleX(0.930);transform-origin:50% 50%;">4.00</div>
<div style="left:786.8px;top:215.84px;width:51.4px;height:16.04px;background:#d6d6d6;box-shadow:inset 1px 1px 0 #e8e8e8;"></div>
<div style="left:782.2px;top:216.82px;width:53px;height:17.68px;text-align:right;font-size:13.6px;line-height:17.68px;color:#000;white-space:pre;transform:scaleX(0.930);transform-origin:100% 50%;">0.00</div>
<div style="left:839.2px;top:215.24px;width:54.2px;height:17.84px;background:rgb(189,168,168);border:1px solid #3a3a3a;"></div>
<div style="left:838px;top:216.82px;width:54px;height:17.68px;text-align:right;font-size:13.6px;line-height:17.68px;color:#0a0a0a;white-space:pre;transform:scaleX(0.930);transform-origin:100% 50%;">-10.00</div>
<div style="left:893.8px;top:215.84px;width:52.4px;height:16.04px;background:rgb(214,148,148);"></div>
<div style="left:892px;top:216.82px;width:54px;height:17.68px;text-align:right;font-size:13.6px;line-height:17.68px;color:#0a0a0a;white-space:pre;transform:scaleX(0.930);transform-origin:100% 50%;">-6.00</div>
<div style="left:947.8px;top:215.84px;width:52.4px;height:16.04px;background:rgb(242,99,99);"></div>
<div style="left:946px;top:216.82px;width:54px;height:17.68px;text-align:right;font-size:13.6px;line-height:17.68px;color:#0a0a0a;white-space:pre;transform:scaleX(0.930);transform-origin:100% 50%;">5.00</div>
<div style="left:786.8px;top:233.48px;width:51.4px;height:16.04px;background:#f2f2f2;box-shadow:inset 1px 1px 0 #fff;"></div>
<div style="left:782.2px;top:234.46px;width:53px;height:17.68px;text-align:right;font-size:13.6px;line-height:17.68px;color:#000;white-space:pre;transform:scaleX(0.930);transform-origin:100% 50%;">6.20</div>
<div style="left:839.8px;top:233.48px;width:52.4px;height:16.04px;background:rgb(204,166,166);"></div>
<div style="left:838px;top:234.46px;width:54px;height:17.68px;text-align:right;font-size:13.6px;line-height:17.68px;color:#0a0a0a;white-space:pre;transform:scaleX(0.930);transform-origin:100% 50%;">-10.00</div>
<div style="left:893.8px;top:233.48px;width:52.4px;height:16.04px;background:rgb(214,148,148);"></div>
<div style="left:892px;top:234.46px;width:54px;height:17.68px;text-align:right;font-size:13.6px;line-height:17.68px;color:#0a0a0a;white-space:pre;transform:scaleX(0.930);transform-origin:100% 50%;">-6.00</div>
<div style="left:947.8px;top:233.48px;width:52.4px;height:16.04px;background:rgb(242,99,99);"></div>
<div style="left:946px;top:234.46px;width:54px;height:17.68px;text-align:right;font-size:13.6px;line-height:17.68px;color:#0a0a0a;white-space:pre;transform:scaleX(0.930);transform-origin:100% 50%;">5.00</div>
<div style="left:786.8px;top:251.12px;width:51.4px;height:16.04px;background:#f2f2f2;box-shadow:inset 1px 1px 0 #fff;"></div>
<div style="left:782.2px;top:252.1px;width:53px;height:17.68px;text-align:right;font-size:13.6px;line-height:17.68px;color:#000;white-space:pre;transform:scaleX(0.930);transform-origin:100% 50%;">12.50</div>
<div style="left:839.8px;top:251.12px;width:52.4px;height:16.04px;background:rgb(166,233,233);"></div>
<div style="left:838px;top:252.1px;width:54px;height:17.68px;text-align:right;font-size:13.6px;line-height:17.68px;color:#0a0a0a;white-space:pre;transform:scaleX(0.930);transform-origin:100% 50%;">-25.00</div>
<div style="left:893.8px;top:251.12px;width:52.4px;height:16.04px;background:rgb(196,179,179);"></div>
<div style="left:892px;top:252.1px;width:54px;height:17.68px;text-align:right;font-size:13.6px;line-height:17.68px;color:#0a0a0a;white-space:pre;transform:scaleX(0.930);transform-origin:100% 50%;">-13.00</div>
<div style="left:947.8px;top:251.12px;width:52.4px;height:16.04px;background:rgb(224,130,130);"></div>
<div style="left:946px;top:252.1px;width:54px;height:17.68px;text-align:right;font-size:13.6px;line-height:17.68px;color:#0a0a0a;white-space:pre;transform:scaleX(0.930);transform-origin:100% 50%;">-2.00</div>
<div style="left:786.8px;top:268.76px;width:51.4px;height:16.04px;background:#f2f2f2;box-shadow:inset 1px 1px 0 #fff;"></div>
<div style="left:782.2px;top:269.74px;width:53px;height:17.68px;text-align:right;font-size:13.6px;line-height:17.68px;color:#000;white-space:pre;transform:scaleX(0.930);transform-origin:100% 50%;">18.80</div>
<div style="left:839.8px;top:268.76px;width:52.4px;height:16.04px;background:rgb(168,228,228);"></div>
<div style="left:838px;top:269.74px;width:54px;height:17.68px;text-align:right;font-size:13.6px;line-height:17.68px;color:#0a0a0a;white-space:pre;transform:scaleX(0.930);transform-origin:100% 50%;">-24.00</div>
<div style="left:893.8px;top:268.76px;width:52.4px;height:16.04px;background:rgb(194,184,184);"></div>
<div style="left:892px;top:269.74px;width:54px;height:17.68px;text-align:right;font-size:13.6px;line-height:17.68px;color:#0a0a0a;white-space:pre;transform:scaleX(0.930);transform-origin:100% 50%;">-14.00</div>
<div style="left:947.8px;top:268.76px;width:52.4px;height:16.04px;background:rgb(232,117,117);"></div>
<div style="left:946px;top:269.74px;width:54px;height:17.68px;text-align:right;font-size:13.6px;line-height:17.68px;color:#0a0a0a;white-space:pre;transform:scaleX(0.930);transform-origin:100% 50%;">1.00</div>
<div style="left:786.8px;top:286.4px;width:51.4px;height:16.04px;background:#f2f2f2;box-shadow:inset 1px 1px 0 #fff;"></div>
<div style="left:782.2px;top:287.38px;width:53px;height:17.68px;text-align:right;font-size:13.6px;line-height:17.68px;color:#000;white-space:pre;transform:scaleX(0.930);transform-origin:100% 50%;">25.00</div>
<div style="left:839.8px;top:286.4px;width:52.4px;height:16.04px;background:rgb(171,224,224);"></div>
<div style="left:838px;top:287.38px;width:54px;height:17.68px;text-align:right;font-size:13.6px;line-height:17.68px;color:#0a0a0a;white-space:pre;transform:scaleX(0.930);transform-origin:100% 50%;">-23.00</div>
<div style="left:893.8px;top:286.4px;width:52.4px;height:16.04px;background:rgb(194,184,184);"></div>
<div style="left:892px;top:287.38px;width:54px;height:17.68px;text-align:right;font-size:13.6px;line-height:17.68px;color:#0a0a0a;white-space:pre;transform:scaleX(0.930);transform-origin:100% 50%;">-14.00</div>
<div style="left:947.8px;top:286.4px;width:52.4px;height:16.04px;background:rgb(230,122,122);"></div>
<div style="left:946px;top:287.38px;width:54px;height:17.68px;text-align:right;font-size:13.6px;line-height:17.68px;color:#0a0a0a;white-space:pre;transform:scaleX(0.930);transform-origin:100% 50%;">0.00</div>
<div style="left:786.8px;top:304.04px;width:51.4px;height:16.04px;background:#f2f2f2;box-shadow:inset 1px 1px 0 #fff;"></div>
<div style="left:782.2px;top:305.02px;width:53px;height:17.68px;text-align:right;font-size:13.6px;line-height:17.68px;color:#000;white-space:pre;transform:scaleX(0.930);transform-origin:100% 50%;">31.20</div>
<div style="left:839.8px;top:304.04px;width:52.4px;height:16.04px;background:rgb(178,210,210);"></div>
<div style="left:838px;top:305.02px;width:54px;height:17.68px;text-align:right;font-size:13.6px;line-height:17.68px;color:#0a0a0a;white-space:pre;transform:scaleX(0.930);transform-origin:100% 50%;">-20.00</div>
<div style="left:893.8px;top:304.04px;width:52.4px;height:16.04px;background:rgb(201,170,170);"></div>
<div style="left:892px;top:305.02px;width:54px;height:17.68px;text-align:right;font-size:13.6px;line-height:17.68px;color:#0a0a0a;white-space:pre;transform:scaleX(0.930);transform-origin:100% 50%;">-11.00</div>
<div style="left:947.8px;top:304.04px;width:52.4px;height:16.04px;background:rgb(235,113,113);"></div>
<div style="left:946px;top:305.02px;width:54px;height:17.68px;text-align:right;font-size:13.6px;line-height:17.68px;color:#0a0a0a;white-space:pre;transform:scaleX(0.930);transform-origin:100% 50%;">2.00</div>
<div style="left:786.8px;top:321.68px;width:51.4px;height:16.04px;background:#f2f2f2;box-shadow:inset 1px 1px 0 #fff;"></div>
<div style="left:782.2px;top:322.66px;width:53px;height:17.68px;text-align:right;font-size:13.6px;line-height:17.68px;color:#000;white-space:pre;transform:scaleX(0.930);transform-origin:100% 50%;">37.50</div>
<div style="left:839.8px;top:321.68px;width:52.4px;height:16.04px;background:rgb(178,210,210);"></div>
<div style="left:838px;top:322.66px;width:54px;height:17.68px;text-align:right;font-size:13.6px;line-height:17.68px;color:#0a0a0a;white-space:pre;transform:scaleX(0.930);transform-origin:100% 50%;">-20.00</div>
<div style="left:893.8px;top:321.68px;width:52.4px;height:16.04px;background:rgb(209,157,157);"></div>
<div style="left:892px;top:322.66px;width:54px;height:17.68px;text-align:right;font-size:13.6px;line-height:17.68px;color:#0a0a0a;white-space:pre;transform:scaleX(0.930);transform-origin:100% 50%;">-8.00</div>
<div style="left:947.8px;top:321.68px;width:52.4px;height:16.04px;background:rgb(242,99,99);"></div>
<div style="left:946px;top:322.66px;width:54px;height:17.68px;text-align:right;font-size:13.6px;line-height:17.68px;color:#0a0a0a;white-space:pre;transform:scaleX(0.930);transform-origin:100% 50%;">5.00</div>
<div style="left:786.8px;top:339.32px;width:51.4px;height:16.04px;background:#f2f2f2;box-shadow:inset 1px 1px 0 #fff;"></div>
<div style="left:782.2px;top:340.3px;width:53px;height:17.68px;text-align:right;font-size:13.6px;line-height:17.68px;color:#000;white-space:pre;transform:scaleX(0.930);transform-origin:100% 50%;">43.80</div>
<div style="left:839.8px;top:339.32px;width:52.4px;height:16.04px;background:rgb(176,215,215);"></div>
<div style="left:838px;top:340.3px;width:54px;height:17.68px;text-align:right;font-size:13.6px;line-height:17.68px;color:#0a0a0a;white-space:pre;transform:scaleX(0.930);transform-origin:100% 50%;">-21.00</div>
<div style="left:893.8px;top:339.32px;width:52.4px;height:16.04px;background:rgb(204,166,166);"></div>
<div style="left:892px;top:340.3px;width:54px;height:17.68px;text-align:right;font-size:13.6px;line-height:17.68px;color:#0a0a0a;white-space:pre;transform:scaleX(0.930);transform-origin:100% 50%;">-10.00</div>
<div style="left:947.8px;top:339.32px;width:52.4px;height:16.04px;background:rgb(247,90,90);"></div>
<div style="left:946px;top:340.3px;width:54px;height:17.68px;text-align:right;font-size:13.6px;line-height:17.68px;color:#0a0a0a;white-space:pre;transform:scaleX(0.930);transform-origin:100% 50%;">7.00</div>
<div style="left:786.8px;top:356.96px;width:51.4px;height:16.04px;background:#f2f2f2;box-shadow:inset 1px 1px 0 #fff;"></div>
<div style="left:782.2px;top:357.94px;width:53px;height:17.68px;text-align:right;font-size:13.6px;line-height:17.68px;color:#000;white-space:pre;transform:scaleX(0.930);transform-origin:100% 50%;">50.00</div>
<div style="left:839.8px;top:356.96px;width:52.4px;height:16.04px;background:rgb(171,224,224);"></div>
<div style="left:838px;top:357.94px;width:54px;height:17.68px;text-align:right;font-size:13.6px;line-height:17.68px;color:#0a0a0a;white-space:pre;transform:scaleX(0.930);transform-origin:100% 50%;">-23.00</div>
<div style="left:893.8px;top:356.96px;width:52.4px;height:16.04px;background:rgb(199,175,175);"></div>
<div style="left:892px;top:357.94px;width:54px;height:17.68px;text-align:right;font-size:13.6px;line-height:17.68px;color:#0a0a0a;white-space:pre;transform:scaleX(0.930);transform-origin:100% 50%;">-12.00</div>
<div style="left:947.8px;top:356.96px;width:52.4px;height:16.04px;background:rgb(255,77,77);"></div>
<div style="left:946px;top:357.94px;width:54px;height:17.68px;text-align:right;font-size:13.6px;line-height:17.68px;color:#0a0a0a;white-space:pre;transform:scaleX(0.930);transform-origin:100% 50%;">10.00</div>
<div style="left:786.8px;top:374.6px;width:51.4px;height:16.04px;background:#f2f2f2;box-shadow:inset 1px 1px 0 #fff;"></div>
<div style="left:782.2px;top:375.58px;width:53px;height:17.68px;text-align:right;font-size:13.6px;line-height:17.68px;color:#000;white-space:pre;transform:scaleX(0.930);transform-origin:100% 50%;">56.30</div>
<div style="left:839.8px;top:374.6px;width:52.4px;height:16.04px;background:rgb(161,242,242);"></div>
<div style="left:838px;top:375.58px;width:54px;height:17.68px;text-align:right;font-size:13.6px;line-height:17.68px;color:#0a0a0a;white-space:pre;transform:scaleX(0.930);transform-origin:100% 50%;">-27.00</div>
<div style="left:893.8px;top:374.6px;width:52.4px;height:16.04px;background:rgb(189,193,193);"></div>
<div style="left:892px;top:375.58px;width:54px;height:17.68px;text-align:right;font-size:13.6px;line-height:17.68px;color:#0a0a0a;white-space:pre;transform:scaleX(0.930);transform-origin:100% 50%;">-16.00</div>
<div style="left:947.8px;top:374.6px;width:52.4px;height:16.04px;background:rgb(247,90,90);"></div>
<div style="left:946px;top:375.58px;width:54px;height:17.68px;text-align:right;font-size:13.6px;line-height:17.68px;color:#0a0a0a;white-space:pre;transform:scaleX(0.930);transform-origin:100% 50%;">7.00</div>
<div style="left:786.8px;top:392.24px;width:51.4px;height:16.04px;background:#f2f2f2;box-shadow:inset 1px 1px 0 #fff;"></div>
<div style="left:782.2px;top:393.22px;width:53px;height:17.68px;text-align:right;font-size:13.6px;line-height:17.68px;color:#000;white-space:pre;transform:scaleX(0.930);transform-origin:100% 50%;">62.50</div>
<div style="left:839.8px;top:392.24px;width:52.4px;height:16.04px;background:rgb(153,255,255);"></div>
<div style="left:838px;top:393.22px;width:54px;height:17.68px;text-align:right;font-size:13.6px;line-height:17.68px;color:#0a0a0a;white-space:pre;transform:scaleX(0.930);transform-origin:100% 50%;">-30.00</div>
<div style="left:893.8px;top:392.24px;width:52.4px;height:16.04px;background:rgb(181,206,206);"></div>
<div style="left:892px;top:393.22px;width:54px;height:17.68px;text-align:right;font-size:13.6px;line-height:17.68px;color:#0a0a0a;white-space:pre;transform:scaleX(0.930);transform-origin:100% 50%;">-19.00</div>
<div style="left:947.8px;top:392.24px;width:52.4px;height:16.04px;background:rgb(242,99,99);"></div>
<div style="left:946px;top:393.22px;width:54px;height:17.68px;text-align:right;font-size:13.6px;line-height:17.68px;color:#0a0a0a;white-space:pre;transform:scaleX(0.930);transform-origin:100% 50%;">5.00</div>
<div style="left:786.8px;top:409.88px;width:51.4px;height:16.04px;background:#f2f2f2;box-shadow:inset 1px 1px 0 #fff;"></div>
<div style="left:782.2px;top:410.86px;width:53px;height:17.68px;text-align:right;font-size:13.6px;line-height:17.68px;color:#000;white-space:pre;transform:scaleX(0.930);transform-origin:100% 50%;">68.80</div>
<div style="left:839.8px;top:409.88px;width:52.4px;height:16.04px;background:rgb(153,255,255);"></div>
<div style="left:838px;top:410.86px;width:54px;height:17.68px;text-align:right;font-size:13.6px;line-height:17.68px;color:#0a0a0a;white-space:pre;transform:scaleX(0.930);transform-origin:100% 50%;">-30.00</div>
<div style="left:893.8px;top:409.88px;width:52.4px;height:16.04px;background:rgb(181,206,206);"></div>
<div style="left:892px;top:410.86px;width:54px;height:17.68px;text-align:right;font-size:13.6px;line-height:17.68px;color:#0a0a0a;white-space:pre;transform:scaleX(0.930);transform-origin:100% 50%;">-19.00</div>
<div style="left:947.8px;top:409.88px;width:52.4px;height:16.04px;background:rgb(242,99,99);"></div>
<div style="left:946px;top:410.86px;width:54px;height:17.68px;text-align:right;font-size:13.6px;line-height:17.68px;color:#0a0a0a;white-space:pre;transform:scaleX(0.930);transform-origin:100% 50%;">5.00</div>
<div style="left:786.8px;top:427.52px;width:51.4px;height:16.04px;background:#f2f2f2;box-shadow:inset 1px 1px 0 #fff;"></div>
<div style="left:782.2px;top:428.5px;width:53px;height:17.68px;text-align:right;font-size:13.6px;line-height:17.68px;color:#000;white-space:pre;transform:scaleX(0.930);transform-origin:100% 50%;">75.00</div>
<div style="left:839.8px;top:427.52px;width:52.4px;height:16.04px;background:rgb(153,255,255);"></div>
<div style="left:838px;top:428.5px;width:54px;height:17.68px;text-align:right;font-size:13.6px;line-height:17.68px;color:#0a0a0a;white-space:pre;transform:scaleX(0.930);transform-origin:100% 50%;">-30.00</div>
<div style="left:893.8px;top:427.52px;width:52.4px;height:16.04px;background:rgb(181,206,206);"></div>
<div style="left:892px;top:428.5px;width:54px;height:17.68px;text-align:right;font-size:13.6px;line-height:17.68px;color:#0a0a0a;white-space:pre;transform:scaleX(0.930);transform-origin:100% 50%;">-19.00</div>
<div style="left:947.8px;top:427.52px;width:52.4px;height:16.04px;background:rgb(242,99,99);"></div>
<div style="left:946px;top:428.5px;width:54px;height:17.68px;text-align:right;font-size:13.6px;line-height:17.68px;color:#0a0a0a;white-space:pre;transform:scaleX(0.930);transform-origin:100% 50%;">5.00</div>
<div style="left:786.8px;top:445.16px;width:51.4px;height:16.04px;background:#f2f2f2;box-shadow:inset 1px 1px 0 #fff;"></div>
<div style="left:782.2px;top:446.14px;width:53px;height:17.68px;text-align:right;font-size:13.6px;line-height:17.68px;color:#000;white-space:pre;transform:scaleX(0.930);transform-origin:100% 50%;">81.30</div>
<div style="left:839.8px;top:445.16px;width:52.4px;height:16.04px;background:rgb(153,255,255);"></div>
<div style="left:838px;top:446.14px;width:54px;height:17.68px;text-align:right;font-size:13.6px;line-height:17.68px;color:#0a0a0a;white-space:pre;transform:scaleX(0.930);transform-origin:100% 50%;">-30.00</div>
<div style="left:893.8px;top:445.16px;width:52.4px;height:16.04px;background:rgb(181,206,206);"></div>
<div style="left:892px;top:446.14px;width:54px;height:17.68px;text-align:right;font-size:13.6px;line-height:17.68px;color:#0a0a0a;white-space:pre;transform:scaleX(0.930);transform-origin:100% 50%;">-19.00</div>
<div style="left:947.8px;top:445.16px;width:52.4px;height:16.04px;background:rgb(242,99,99);"></div>
<div style="left:946px;top:446.14px;width:54px;height:17.68px;text-align:right;font-size:13.6px;line-height:17.68px;color:#0a0a0a;white-space:pre;transform:scaleX(0.930);transform-origin:100% 50%;">5.00</div>
<div style="left:786.8px;top:462.8px;width:51.4px;height:16.04px;background:#f2f2f2;box-shadow:inset 1px 1px 0 #fff;"></div>
<div style="left:782.2px;top:463.78px;width:53px;height:17.68px;text-align:right;font-size:13.6px;line-height:17.68px;color:#000;white-space:pre;transform:scaleX(0.930);transform-origin:100% 50%;">87.50</div>
<div style="left:839.8px;top:462.8px;width:52.4px;height:16.04px;background:rgb(166,233,233);"></div>
<div style="left:838px;top:463.78px;width:54px;height:17.68px;text-align:right;font-size:13.6px;line-height:17.68px;color:#0a0a0a;white-space:pre;transform:scaleX(0.930);transform-origin:100% 50%;">-25.00</div>
<div style="left:893.8px;top:462.8px;width:52.4px;height:16.04px;background:rgb(204,166,166);"></div>
<div style="left:892px;top:463.78px;width:54px;height:17.68px;text-align:right;font-size:13.6px;line-height:17.68px;color:#0a0a0a;white-space:pre;transform:scaleX(0.930);transform-origin:100% 50%;">-10.00</div>
<div style="left:947.8px;top:462.8px;width:52.4px;height:16.04px;background:rgb(247,90,90);"></div>
<div style="left:946px;top:463.78px;width:54px;height:17.68px;text-align:right;font-size:13.6px;line-height:17.68px;color:#0a0a0a;white-space:pre;transform:scaleX(0.930);transform-origin:100% 50%;">7.00</div>
<div style="left:786.8px;top:480.44px;width:51.4px;height:16.04px;background:#f2f2f2;box-shadow:inset 1px 1px 0 #fff;"></div>
<div style="left:782.2px;top:481.42px;width:53px;height:17.68px;text-align:right;font-size:13.6px;line-height:17.68px;color:#000;white-space:pre;transform:scaleX(0.930);transform-origin:100% 50%;">93.80</div>
<div style="left:839.8px;top:480.44px;width:52.4px;height:16.04px;background:rgb(166,233,233);"></div>
<div style="left:838px;top:481.42px;width:54px;height:17.68px;text-align:right;font-size:13.6px;line-height:17.68px;color:#0a0a0a;white-space:pre;transform:scaleX(0.930);transform-origin:100% 50%;">-25.00</div>
<div style="left:893.8px;top:480.44px;width:52.4px;height:16.04px;background:rgb(204,166,166);"></div>
<div style="left:892px;top:481.42px;width:54px;height:17.68px;text-align:right;font-size:13.6px;line-height:17.68px;color:#0a0a0a;white-space:pre;transform:scaleX(0.930);transform-origin:100% 50%;">-10.00</div>
<div style="left:947.8px;top:480.44px;width:52.4px;height:16.04px;background:rgb(247,90,90);"></div>
<div style="left:946px;top:481.42px;width:54px;height:17.68px;text-align:right;font-size:13.6px;line-height:17.68px;color:#0a0a0a;white-space:pre;transform:scaleX(0.930);transform-origin:100% 50%;">7.00</div>
<div style="left:786.8px;top:498.08px;width:51.4px;height:16.04px;background:#f2f2f2;box-shadow:inset 1px 1px 0 #fff;"></div>
<div style="left:782.2px;top:499.06px;width:53px;height:17.68px;text-align:right;font-size:13.6px;line-height:17.68px;color:#000;white-space:pre;transform:scaleX(0.930);transform-origin:100% 50%;">100.00</div>
<div style="left:839.8px;top:498.08px;width:52.4px;height:16.04px;background:rgb(166,233,233);"></div>
<div style="left:838px;top:499.06px;width:54px;height:17.68px;text-align:right;font-size:13.6px;line-height:17.68px;color:#0a0a0a;white-space:pre;transform:scaleX(0.930);transform-origin:100% 50%;">-25.00</div>
<div style="left:893.8px;top:498.08px;width:52.4px;height:16.04px;background:rgb(204,166,166);"></div>
<div style="left:892px;top:499.06px;width:54px;height:17.68px;text-align:right;font-size:13.6px;line-height:17.68px;color:#0a0a0a;white-space:pre;transform:scaleX(0.930);transform-origin:100% 50%;">-10.00</div>
<div style="left:947.8px;top:498.08px;width:52.4px;height:16.04px;background:rgb(247,90,90);"></div>
<div style="left:946px;top:499.06px;width:54px;height:17.68px;text-align:right;font-size:13.6px;line-height:17.68px;color:#0a0a0a;white-space:pre;transform:scaleX(0.930);transform-origin:100% 50%;">7.00</div>
<div style="left:784.2px;top:515.6px;width:365.4px;height:29px;background:#f0f0f0;border-top:1px solid #fafafa;"></div>
<div style="left:870.8px;top:518.6px;width:1px;height:23px;background:#d8d8d8;"></div>
<div style="left:959.2px;top:518.6px;width:1px;height:23px;background:#d8d8d8;"></div>
<svg style="left:1137.6px;top:532.6px;width:11px;height:11px" viewBox="0 0 5.5 5.5"><path d="M4.2 0.8 h.9 v.9 h-.9z M4.2 2.6 h.9 v.9 h-.9z M4.2 4.2 h.9 v.9 h-.9z M2.5 2.6 h.9 v.9 h-.9z M2.5 4.2 h.9 v.9 h-.9z M0.8 4.2 h.9 v.9 h-.9z" fill="#a8a8a8"/></svg>
<div style="left:1164.4px;top:83.4px;width:430.6px;height:477.6px;box-shadow:0 0 1.8px 1px rgba(20,20,20,.5);border-radius:6.4px 6.4px 1.2px 1.2px;"></div>
<div style="left:1164.4px;top:83.4px;width:430.6px;height:477.6px;background:linear-gradient(#c5d7eb 0,#dbe7f5 36px,#d5e2f2 100%);border:1px solid #9aa6b5;border-radius:6px 6px 1px 1px;box-shadow:inset 0 0 0 1px rgba(255,255,255,.75);"></div>
<svg style="left:1174.8px;top:97.4px;width:19.2px;height:14px" viewBox="0 0 9.6 7"><rect x="0" y="0.9" width="9.6" height="5.2" fill="#000"/><rect x="0.50" y="0" width="0.9" height="7" fill="#000"/><rect x="2.04" y="0" width="0.9" height="7" fill="#000"/><rect x="3.58" y="0" width="0.9" height="7" fill="#000"/><rect x="5.12" y="0" width="0.9" height="7" fill="#000"/><rect x="6.66" y="0" width="0.9" height="7" fill="#000"/><rect x="8.20" y="0" width="0.9" height="7" fill="#000"/></svg>
<div style="left:1199.2px;top:94.12px;height:19.76px;font-size:15.2px;line-height:19.76px;color:#9aa0a8;white-space:pre;transform:scaleX(0.933);transform-origin:0 50%;">Upshift/Downshift Table</div>
<div style="left:1547.2px;top:94.6px;width:37.6px;height:21.4px;background:linear-gradient(#dde8f4,#cddbec);border:1px solid #93a6bd;border-radius:3.2px;box-shadow:inset 0 0 0 1px rgba(255,255,255,.6);"></div>
<svg style="left:1559.2px;top:99.7px;width:13.6px;height:11.2px" viewBox="0 0 6.8 5.6"><path d="M1.3 0.9 L5.5 4.7 M5.5 0.9 L1.3 4.7" stroke="#949dab" stroke-width="2.5" stroke-linecap="square" fill="none"/><path d="M1.3 0.9 L5.5 4.7 M5.5 0.9 L1.3 4.7" stroke="#fff" stroke-width="1.5" stroke-linecap="square" fill="none"/></svg>
<div style="left:1174px;top:119.2px;width:412.8px;height:433.6px;background:#f0f0f0;"></div>
<div style="left:1174px;top:119.2px;width:412.8px;height:60px;overflow:hidden;"><div style="left:-1174px;top:-119.2px;width:1600px;height:1070px;">
<div style="left:1177.2px;top:125.2px;width:1.2px;height:20px;background:#b5b5b5;"></div>
<div style="left:1177.2px;top:152.2px;width:1.2px;height:20px;background:#b5b5b5;"></div>
<svg style="left:1188px;top:125.6px;width:18.4px;height:18.4px" viewBox="0 0 10 10"><rect x="0.5" y="0.5" width="9" height="9" fill="#0c0c0c"/><rect x="0.3" y="0.5" width="1" height="9.2" fill="#7d7d18"/><rect x="0.3" y="8.8" width="9.2" height="0.9" fill="#7d7d18"/><rect x="2.4" y="0.5" width="5.6" height="3.6" fill="#fafafa"/><rect x="2" y="5.6" width="6.4" height="3.2" fill="#2a2a08"/><rect x="6.2" y="6.2" width="1.6" height="2.2" fill="#f4f4f4"/></svg>
<svg style="left:1214px;top:125.6px;width:18.4px;height:18.4px" viewBox="0 0 10 10"><path d="M1.8 0.8 L8.2 9.2 M8.2 0.8 L1.8 9.2" stroke="#f41212" stroke-width="1.7" fill="none"/></svg>
<svg style="left:1241.4px;top:125.6px;width:18.4px;height:18.4px" viewBox="0 0 10 10"><path d="M1 0.4 V9.2 H9.6" stroke="#333" stroke-width=".6" fill="none" stroke-dasharray=".9 .7"/><path d="M1.2 3 L3 5.4 L4.8 3.6 L6.6 5.8 L9.4 2.8" stroke="#ee1616" stroke-width="1.3" fill="none"/></svg>
<svg style="left:1268.8px;top:125.6px;width:18.4px;height:18.4px" viewBox="0 0 10 10"><path d="M0.9 4.2 Q5 0.6 9.1 4.2" stroke="#111" stroke-width="1" fill="none"/><circle cx="5" cy="1.4" r="1" fill="#111"/><path d="M5 1.6 V8.4" stroke="#111" stroke-width="1.2"/><ellipse cx="2.1" cy="5.6" rx="2.1" ry="1.1" fill="#d2d23a" stroke="#444" stroke-width=".5"/><ellipse cx="7.9" cy="5.6" rx="2.1" ry="1.1" fill="#d2d23a" stroke="#444" stroke-width=".5"/><ellipse cx="5" cy="8.8" rx="2.8" ry="0.9" fill="#111"/></svg>
<svg style="left:1295.6px;top:125.6px;width:18.4px;height:18.4px" viewBox="0 0 10 10"><rect x="1.4" y="0.4" width="7.2" height="5.4" fill="#1a1aff"/><path d="M5 1.2 L8.8 8.8 H1.2 Z" fill="#fff" stroke="#000" stroke-width="1.25" stroke-linejoin="miter"/><rect x="0.6" y="8.4" width="8.8" height="1.2" fill="#000"/><rect x="3.4" y="0.2" width="3.2" height="1.3" fill="#000"/></svg>
<svg style="left:1322.8px;top:125.6px;width:18.4px;height:18.4px" viewBox="0 0 10 10"><path d="M1 0.8 L6.6 8.2 M6.6 0.8 L1 8.2" stroke="#a2a2a2" stroke-width="1.3" fill="none"/><path d="M6.4 9.3 H9.6 L8.6 6.8 Z" fill="#a2a2a2"/></svg>
<svg style="left:1349.6px;top:125.6px;width:18.4px;height:18.4px" viewBox="0 0 10 10"><path d="M0.6 0.8 L3 4.4 L5.4 0.8 M3 4.4 V9.2" stroke="#a2a2a2" stroke-width="1.3" fill="none"/><path d="M7.6 9.2 V2.4" stroke="#a2a2a2" stroke-width="1.2" fill="none"/><path d="M5.6 4.2 L7.6 1 L9.6 4.2" stroke="#a2a2a2" stroke-width="1.1" fill="none"/></svg>
<svg style="left:1376.8px;top:125.6px;width:18.4px;height:18.4px" viewBox="0 0 10 10"><path d="M1.2 9.2 L5 0.8 L8.8 9.2 M2.6 6.2 H7.4" stroke="#a2a2a2" stroke-width="1.3" fill="none"/></svg>
<div style="left:1190px;top:154.29px;height:17.42px;font-size:13.4px;line-height:17.42px;color:#111;white-space:pre;transform:scaleX(0.918);transform-origin:0 50%;">Function:</div>
<div style="left:1246.6px;top:150.6px;width:108.4px;height:23.6px;background:linear-gradient(#ececec,#dddddd);border:1px solid #b4b4b4;"></div>
<div style="left:1252px;top:154.69px;height:17.42px;font-size:13.4px;line-height:17.42px;color:#111;white-space:pre;transform:scaleX(1.029);transform-origin:0 50%;">Offset (+/-)</div>
<svg style="left:1340px;top:160.4px;width:10.4px;height:6.4px" viewBox="0 0 5.2 3.2"><path d="M0.4 0.4 L2.6 2.6 L4.8 0.4" stroke="#555" stroke-width=".8" fill="none"/></svg>
<div style="left:1361px;top:154.29px;height:17.42px;font-size:13.4px;line-height:17.42px;color:#111;white-space:pre;transform:scaleX(0.908);transform-origin:0 50%;">Value:</div>
<div style="left:1400px;top:150.6px;width:56px;height:23.6px;background:#fff;border:1px solid #8a8a8a;"></div>
<div style="left:1407.2px;top:154.69px;height:17.42px;font-size:13.4px;line-height:17.42px;color:#111;white-space:pre;">1.0</div>
<div style="left:1460.4px;top:151.4px;width:56px;height:22.4px;background:#e3e3e3;border:1px solid #adadad;"></div>
<div style="left:1465.8px;top:155.09px;height:17.42px;font-size:13.4px;line-height:17.42px;color:#111;white-space:pre;transform:scaleX(0.934);transform-origin:0 50%;">Execute</div>
</div></div>
<div style="left:1174px;top:178.6px;width:410.6px;height:345.4px;background:#808080;border-top:1px solid #5a5a5a;border-left:1px solid #5a5a5a;border-right:1px solid #e8e8e8;border-bottom:1px solid #e8e8e8;"></div>
<div style="left:1176.6px;top:181.2px;width:405.6px;height:17.4px;background:#a0a0a0;"></div>
<div style="left:1176.6px;top:181.2px;width:404px;height:15.8px;background:#f4f4f4;box-shadow:inset 1px 1px 0 #fff;overflow:hidden;"></div>
<div style="left:1212px;top:181.17px;height:18.46px;font-size:14.2px;line-height:18.46px;color:#000;white-space:pre;font-weight:bold;transform:scaleX(1.006);transform-origin:0 50%;">Upshift/Downshift Table</div>
<div style="left:1176.6px;top:198.6px;width:377.56px;height:17.64px;background:#b0b0b0;"></div>
<div style="left:1176.6px;top:198.6px;width:53.2px;height:317.52px;background:#b0b0b0;"></div>
<div style="left:1229.8px;top:216.24px;width:324.36px;height:299.88px;background:#e4e4e4;"></div>
<div style="left:1176.6px;top:198.6px;width:51.6px;height:16.04px;background:#f2f2f2;box-shadow:inset 1px 1px 0 #fff;"></div>
<div style="left:1229.8px;top:198.6px;width:52.46px;height:16.04px;background:#d6d6d6;box-shadow:inset 1px 1px 0 #e8e8e8;"></div>
<div style="left:1229.8px;top:199.58px;width:54.06px;height:17.68px;text-align:center;font-size:13.6px;line-height:17.68px;color:#000;white-space:pre;transform:scaleX(0.930);transform-origin:50% 50%;">1.00</div>
<div style="left:1283.86px;top:198.6px;width:52.46px;height:16.04px;background:#f2f2f2;box-shadow:inset 1px 1px 0 #fff;"></div>
<div style="left:1283.86px;top:199.58px;width:54.06px;height:17.68px;text-align:center;font-size:13.6px;line-height:17.68px;color:#000;white-space:pre;transform:scaleX(0.930);transform-origin:50% 50%;">2.00</div>
<div style="left:1337.92px;top:198.6px;width:52.46px;height:16.04px;background:#f2f2f2;box-shadow:inset 1px 1px 0 #fff;"></div>
<div style="left:1337.92px;top:199.58px;width:54.06px;height:17.68px;text-align:center;font-size:13.6px;line-height:17.68px;color:#000;white-space:pre;transform:scaleX(0.930);transform-origin:50% 50%;">3.00</div>
<div style="left:1391.98px;top:198.6px;width:52.46px;height:16.04px;background:#f2f2f2;box-shadow:inset 1px 1px 0 #fff;"></div>
<div style="left:1391.98px;top:199.58px;width:54.06px;height:17.68px;text-align:center;font-size:13.6px;line-height:17.68px;color:#000;white-space:pre;transform:scaleX(0.930);transform-origin:50% 50%;">2.00</div>
<div style="left:1446.04px;top:198.6px;width:52.46px;height:16.04px;background:#f2f2f2;box-shadow:inset 1px 1px 0 #fff;"></div>
<div style="left:1446.04px;top:199.58px;width:54.06px;height:17.68px;text-align:center;font-size:13.6px;line-height:17.68px;color:#000;white-space:pre;transform:scaleX(0.930);transform-origin:50% 50%;">3.00</div>
<div style="left:1500.1px;top:198.6px;width:52.46px;height:16.04px;background:#f2f2f2;box-shadow:inset 1px 1px 0 #fff;"></div>
<div style="left:1500.1px;top:199.58px;width:54.06px;height:17.68px;text-align:center;font-size:13.6px;line-height:17.68px;color:#000;white-space:pre;transform:scaleX(0.930);transform-origin:50% 50%;">4.00</div>
<div style="left:1176.6px;top:216.24px;width:51.6px;height:16.04px;background:#d6d6d6;box-shadow:inset 1px 1px 0 #e8e8e8;"></div>
<div style="left:1172px;top:217.22px;width:53.2px;height:17.68px;text-align:right;font-size:13.6px;line-height:17.68px;color:#000;white-space:pre;transform:scaleX(0.930);transform-origin:100% 50%;">0.00</div>
<div style="left:1229.2px;top:215.64px;width:54.26px;height:17.84px;background:rgb(161,216,216);border:1px solid #3a3a3a;"></div>
<div style="left:1228px;top:217.22px;width:54.06px;height:17.68px;text-align:right;font-size:13.6px;line-height:17.68px;color:#0a0a0a;white-space:pre;transform:scaleX(0.930);transform-origin:100% 50%;">9.50</div>
<div style="left:1283.86px;top:216.24px;width:52.46px;height:16.04px;background:rgb(166,232,232);"></div>
<div style="left:1282.06px;top:217.22px;width:54.06px;height:17.68px;text-align:right;font-size:13.6px;line-height:17.68px;color:#0a0a0a;white-space:pre;transform:scaleX(0.930);transform-origin:100% 50%;">18.00</div>
<div style="left:1337.92px;top:216.24px;width:52.46px;height:16.04px;background:rgb(186,197,197);"></div>
<div style="left:1336.12px;top:217.22px;width:54.06px;height:17.68px;text-align:right;font-size:13.6px;line-height:17.68px;color:#0a0a0a;white-space:pre;transform:scaleX(0.930);transform-origin:100% 50%;">32.00</div>
<div style="left:1391.98px;top:216.24px;width:52.46px;height:16.04px;background:rgb(153,255,255);"></div>
<div style="left:1390.18px;top:217.22px;width:54.06px;height:17.68px;text-align:right;font-size:13.6px;line-height:17.68px;color:#0a0a0a;white-space:pre;transform:scaleX(0.930);transform-origin:100% 50%;">9.00</div>
<div style="left:1446.04px;top:216.24px;width:52.46px;height:16.04px;background:rgb(163,237,237);"></div>
<div style="left:1444.24px;top:217.22px;width:54.06px;height:17.68px;text-align:right;font-size:13.6px;line-height:17.68px;color:#0a0a0a;white-space:pre;transform:scaleX(0.930);transform-origin:100% 50%;">16.00</div>
<div style="left:1500.1px;top:216.24px;width:52.46px;height:16.04px;background:rgb(180,207,207);"></div>
<div style="left:1498.3px;top:217.22px;width:54.06px;height:17.68px;text-align:right;font-size:13.6px;line-height:17.68px;color:#0a0a0a;white-space:pre;transform:scaleX(0.930);transform-origin:100% 50%;">28.00</div>
<div style="left:1176.6px;top:233.88px;width:51.6px;height:16.04px;background:#f2f2f2;box-shadow:inset 1px 1px 0 #fff;"></div>
<div style="left:1172px;top:234.86px;width:53.2px;height:17.68px;text-align:right;font-size:13.6px;line-height:17.68px;color:#000;white-space:pre;transform:scaleX(0.930);transform-origin:100% 50%;">6.20</div>
<div style="left:1229.8px;top:233.88px;width:52.46px;height:16.04px;background:rgb(154,254,254);"></div>
<div style="left:1228px;top:234.86px;width:54.06px;height:17.68px;text-align:right;font-size:13.6px;line-height:17.68px;color:#0a0a0a;white-space:pre;transform:scaleX(0.930);transform-origin:100% 50%;">9.50</div>
<div style="left:1283.86px;top:233.88px;width:52.46px;height:16.04px;background:rgb(166,232,232);"></div>
<div style="left:1282.06px;top:234.86px;width:54.06px;height:17.68px;text-align:right;font-size:13.6px;line-height:17.68px;color:#0a0a0a;white-space:pre;transform:scaleX(0.930);transform-origin:100% 50%;">18.00</div>
<div style="left:1337.92px;top:233.88px;width:52.46px;height:16.04px;background:rgb(186,197,197);"></div>
<div style="left:1336.12px;top:234.86px;width:54.06px;height:17.68px;text-align:right;font-size:13.6px;line-height:17.68px;color:#0a0a0a;white-space:pre;transform:scaleX(0.930);transform-origin:100% 50%;">32.00</div>
<div style="left:1391.98px;top:233.88px;width:52.46px;height:16.04px;background:rgb(153,255,255);"></div>
<div style="left:1390.18px;top:234.86px;width:54.06px;height:17.68px;text-align:right;font-size:13.6px;line-height:17.68px;color:#0a0a0a;white-space:pre;transform:scaleX(0.930);transform-origin:100% 50%;">9.00</div>
<div style="left:1446.04px;top:233.88px;width:52.46px;height:16.04px;background:rgb(163,237,237);"></div>
<div style="left:1444.24px;top:234.86px;width:54.06px;height:17.68px;text-align:right;font-size:13.6px;line-height:17.68px;color:#0a0a0a;white-space:pre;transform:scaleX(0.930);transform-origin:100% 50%;">16.00</div>
<div style="left:1500.1px;top:233.88px;width:52.46px;height:16.04px;background:rgb(180,207,207);"></div>
<div style="left:1498.3px;top:234.86px;width:54.06px;height:17.68px;text-align:right;font-size:13.6px;line-height:17.68px;color:#0a0a0a;white-space:pre;transform:scaleX(0.930);transform-origin:100% 50%;">28.00</div>
<div style="left:1176.6px;top:251.52px;width:51.6px;height:16.04px;background:#f2f2f2;box-shadow:inset 1px 1px 0 #fff;"></div>
<div style="left:1172px;top:252.5px;width:53.2px;height:17.68px;text-align:right;font-size:13.6px;line-height:17.68px;color:#000;white-space:pre;transform:scaleX(0.930);transform-origin:100% 50%;">12.50</div>
<div style="left:1229.8px;top:251.52px;width:52.46px;height:16.04px;background:rgb(156,250,250);"></div>
<div style="left:1228px;top:252.5px;width:54.06px;height:17.68px;text-align:right;font-size:13.6px;line-height:17.68px;color:#0a0a0a;white-space:pre;transform:scaleX(0.930);transform-origin:100% 50%;">11.00</div>
<div style="left:1283.86px;top:251.52px;width:52.46px;height:16.04px;background:rgb(174,219,219);"></div>
<div style="left:1282.06px;top:252.5px;width:54.06px;height:17.68px;text-align:right;font-size:13.6px;line-height:17.68px;color:#0a0a0a;white-space:pre;transform:scaleX(0.930);transform-origin:100% 50%;">23.50</div>
<div style="left:1337.92px;top:251.52px;width:52.46px;height:16.04px;background:rgb(192,187,187);"></div>
<div style="left:1336.12px;top:252.5px;width:54.06px;height:17.68px;text-align:right;font-size:13.6px;line-height:17.68px;color:#0a0a0a;white-space:pre;transform:scaleX(0.930);transform-origin:100% 50%;">36.00</div>
<div style="left:1391.98px;top:251.52px;width:52.46px;height:16.04px;background:rgb(153,255,255);"></div>
<div style="left:1390.18px;top:252.5px;width:54.06px;height:17.68px;text-align:right;font-size:13.6px;line-height:17.68px;color:#0a0a0a;white-space:pre;transform:scaleX(0.930);transform-origin:100% 50%;">9.00</div>
<div style="left:1446.04px;top:251.52px;width:52.46px;height:16.04px;background:rgb(163,237,237);"></div>
<div style="left:1444.24px;top:252.5px;width:54.06px;height:17.68px;text-align:right;font-size:13.6px;line-height:17.68px;color:#0a0a0a;white-space:pre;transform:scaleX(0.930);transform-origin:100% 50%;">16.00</div>
<div style="left:1500.1px;top:251.52px;width:52.46px;height:16.04px;background:rgb(180,207,207);"></div>
<div style="left:1498.3px;top:252.5px;width:54.06px;height:17.68px;text-align:right;font-size:13.6px;line-height:17.68px;color:#0a0a0a;white-space:pre;transform:scaleX(0.930);transform-origin:100% 50%;">28.00</div>
<div style="left:1176.6px;top:269.16px;width:51.6px;height:16.04px;background:#f2f2f2;box-shadow:inset 1px 1px 0 #fff;"></div>
<div style="left:1172px;top:270.14px;width:53.2px;height:17.68px;text-align:right;font-size:13.6px;line-height:17.68px;color:#000;white-space:pre;transform:scaleX(0.930);transform-origin:100% 50%;">18.80</div>
<div style="left:1229.8px;top:269.16px;width:52.46px;height:16.04px;background:rgb(159,244,244);"></div>
<div style="left:1228px;top:270.14px;width:54.06px;height:17.68px;text-align:right;font-size:13.6px;line-height:17.68px;color:#0a0a0a;white-space:pre;transform:scaleX(0.930);transform-origin:100% 50%;">13.50</div>
<div style="left:1283.86px;top:269.16px;width:52.46px;height:16.04px;background:rgb(180,207,207);"></div>
<div style="left:1282.06px;top:270.14px;width:54.06px;height:17.68px;text-align:right;font-size:13.6px;line-height:17.68px;color:#0a0a0a;white-space:pre;transform:scaleX(0.930);transform-origin:100% 50%;">28.00</div>
<div style="left:1337.92px;top:269.16px;width:52.46px;height:16.04px;background:rgb(198,177,177);"></div>
<div style="left:1336.12px;top:270.14px;width:54.06px;height:17.68px;text-align:right;font-size:13.6px;line-height:17.68px;color:#0a0a0a;white-space:pre;transform:scaleX(0.930);transform-origin:100% 50%;">40.00</div>
<div style="left:1391.98px;top:269.16px;width:52.46px;height:16.04px;background:rgb(153,255,255);"></div>
<div style="left:1390.18px;top:270.14px;width:54.06px;height:17.68px;text-align:right;font-size:13.6px;line-height:17.68px;color:#0a0a0a;white-space:pre;transform:scaleX(0.930);transform-origin:100% 50%;">9.00</div>
<div style="left:1446.04px;top:269.16px;width:52.46px;height:16.04px;background:rgb(163,237,237);"></div>
<div style="left:1444.24px;top:270.14px;width:54.06px;height:17.68px;text-align:right;font-size:13.6px;line-height:17.68px;color:#0a0a0a;white-space:pre;transform:scaleX(0.930);transform-origin:100% 50%;">16.00</div>
<div style="left:1500.1px;top:269.16px;width:52.46px;height:16.04px;background:rgb(182,204,204);"></div>
<div style="left:1498.3px;top:270.14px;width:54.06px;height:17.68px;text-align:right;font-size:13.6px;line-height:17.68px;color:#0a0a0a;white-space:pre;transform:scaleX(0.930);transform-origin:100% 50%;">29.50</div>
<div style="left:1176.6px;top:286.8px;width:51.6px;height:16.04px;background:#f2f2f2;box-shadow:inset 1px 1px 0 #fff;"></div>
<div style="left:1172px;top:287.78px;width:53.2px;height:17.68px;text-align:right;font-size:13.6px;line-height:17.68px;color:#000;white-space:pre;transform:scaleX(0.930);transform-origin:100% 50%;">25.00</div>
<div style="left:1229.8px;top:286.8px;width:52.46px;height:16.04px;background:rgb(164,235,235);"></div>
<div style="left:1228px;top:287.78px;width:54.06px;height:17.68px;text-align:right;font-size:13.6px;line-height:17.68px;color:#0a0a0a;white-space:pre;transform:scaleX(0.930);transform-origin:100% 50%;">17.00</div>
<div style="left:1283.86px;top:286.8px;width:52.46px;height:16.04px;background:rgb(185,199,199);"></div>
<div style="left:1282.06px;top:287.78px;width:54.06px;height:17.68px;text-align:right;font-size:13.6px;line-height:17.68px;color:#0a0a0a;white-space:pre;transform:scaleX(0.930);transform-origin:100% 50%;">31.50</div>
<div style="left:1337.92px;top:286.8px;width:52.46px;height:16.04px;background:rgb(203,167,167);"></div>
<div style="left:1336.12px;top:287.78px;width:54.06px;height:17.68px;text-align:right;font-size:13.6px;line-height:17.68px;color:#0a0a0a;white-space:pre;transform:scaleX(0.930);transform-origin:100% 50%;">44.00</div>
<div style="left:1391.98px;top:286.8px;width:52.46px;height:16.04px;background:rgb(153,255,255);"></div>
<div style="left:1390.18px;top:287.78px;width:54.06px;height:17.68px;text-align:right;font-size:13.6px;line-height:17.68px;color:#0a0a0a;white-space:pre;transform:scaleX(0.930);transform-origin:100% 50%;">9.00</div>
<div style="left:1446.04px;top:286.8px;width:52.46px;height:16.04px;background:rgb(167,230,230);"></div>
<div style="left:1444.24px;top:287.78px;width:54.06px;height:17.68px;text-align:right;font-size:13.6px;line-height:17.68px;color:#0a0a0a;white-space:pre;transform:scaleX(0.930);transform-origin:100% 50%;">19.00</div>
<div style="left:1500.1px;top:286.8px;width:52.46px;height:16.04px;background:rgb(187,195,195);"></div>
<div style="left:1498.3px;top:287.78px;width:54.06px;height:17.68px;text-align:right;font-size:13.6px;line-height:17.68px;color:#0a0a0a;white-space:pre;transform:scaleX(0.930);transform-origin:100% 50%;">33.00</div>
<div style="left:1176.6px;top:304.44px;width:51.6px;height:16.04px;background:#f2f2f2;box-shadow:inset 1px 1px 0 #fff;"></div>
<div style="left:1172px;top:305.42px;width:53.2px;height:17.68px;text-align:right;font-size:13.6px;line-height:17.68px;color:#000;white-space:pre;transform:scaleX(0.930);transform-origin:100% 50%;">31.20</div>
<div style="left:1229.8px;top:304.44px;width:52.46px;height:16.04px;background:rgb(167,230,230);"></div>
<div style="left:1228px;top:305.42px;width:54.06px;height:17.68px;text-align:right;font-size:13.6px;line-height:17.68px;color:#0a0a0a;white-space:pre;transform:scaleX(0.930);transform-origin:100% 50%;">19.00</div>
<div style="left:1283.86px;top:304.44px;width:52.46px;height:16.04px;background:rgb(190,191,191);"></div>
<div style="left:1282.06px;top:305.42px;width:54.06px;height:17.68px;text-align:right;font-size:13.6px;line-height:17.68px;color:#0a0a0a;white-space:pre;transform:scaleX(0.930);transform-origin:100% 50%;">34.50</div>
<div style="left:1337.92px;top:304.44px;width:52.46px;height:16.04px;background:rgb(210,156,156);"></div>
<div style="left:1336.12px;top:305.42px;width:54.06px;height:17.68px;text-align:right;font-size:13.6px;line-height:17.68px;color:#0a0a0a;white-space:pre;transform:scaleX(0.930);transform-origin:100% 50%;">48.50</div>
<div style="left:1391.98px;top:304.44px;width:52.46px;height:16.04px;background:rgb(153,255,255);"></div>
<div style="left:1390.18px;top:305.42px;width:54.06px;height:17.68px;text-align:right;font-size:13.6px;line-height:17.68px;color:#0a0a0a;white-space:pre;transform:scaleX(0.930);transform-origin:100% 50%;">9.00</div>
<div style="left:1446.04px;top:304.44px;width:52.46px;height:16.04px;background:rgb(173,220,220);"></div>
<div style="left:1444.24px;top:305.42px;width:54.06px;height:17.68px;text-align:right;font-size:13.6px;line-height:17.68px;color:#0a0a0a;white-space:pre;transform:scaleX(0.930);transform-origin:100% 50%;">23.00</div>
<div style="left:1500.1px;top:304.44px;width:52.46px;height:16.04px;background:rgb(193,185,185);"></div>
<div style="left:1498.3px;top:305.42px;width:54.06px;height:17.68px;text-align:right;font-size:13.6px;line-height:17.68px;color:#0a0a0a;white-space:pre;transform:scaleX(0.930);transform-origin:100% 50%;">37.00</div>
<div style="left:1176.6px;top:322.08px;width:51.6px;height:16.04px;background:#f2f2f2;box-shadow:inset 1px 1px 0 #fff;"></div>
<div style="left:1172px;top:323.06px;width:53.2px;height:17.68px;text-align:right;font-size:13.6px;line-height:17.68px;color:#000;white-space:pre;transform:scaleX(0.930);transform-origin:100% 50%;">37.50</div>
<div style="left:1229.8px;top:322.08px;width:52.46px;height:16.04px;background:rgb(170,225,225);"></div>
<div style="left:1228px;top:323.06px;width:54.06px;height:17.68px;text-align:right;font-size:13.6px;line-height:17.68px;color:#0a0a0a;white-space:pre;transform:scaleX(0.930);transform-origin:100% 50%;">21.00</div>
<div style="left:1283.86px;top:322.08px;width:52.46px;height:16.04px;background:rgb(194,184,184);"></div>
<div style="left:1282.06px;top:323.06px;width:54.06px;height:17.68px;text-align:right;font-size:13.6px;line-height:17.68px;color:#0a0a0a;white-space:pre;transform:scaleX(0.930);transform-origin:100% 50%;">37.50</div>
<div style="left:1337.92px;top:322.08px;width:52.46px;height:16.04px;background:rgb(215,146,146);"></div>
<div style="left:1336.12px;top:323.06px;width:54.06px;height:17.68px;text-align:right;font-size:13.6px;line-height:17.68px;color:#0a0a0a;white-space:pre;transform:scaleX(0.930);transform-origin:100% 50%;">52.50</div>
<div style="left:1391.98px;top:322.08px;width:52.46px;height:16.04px;background:rgb(153,255,255);"></div>
<div style="left:1390.18px;top:323.06px;width:54.06px;height:17.68px;text-align:right;font-size:13.6px;line-height:17.68px;color:#0a0a0a;white-space:pre;transform:scaleX(0.930);transform-origin:100% 50%;">9.00</div>
<div style="left:1446.04px;top:322.08px;width:52.46px;height:16.04px;background:rgb(180,207,207);"></div>
<div style="left:1444.24px;top:323.06px;width:54.06px;height:17.68px;text-align:right;font-size:13.6px;line-height:17.68px;color:#0a0a0a;white-space:pre;transform:scaleX(0.930);transform-origin:100% 50%;">28.00</div>
<div style="left:1500.1px;top:322.08px;width:52.46px;height:16.04px;background:rgb(199,175,175);"></div>
<div style="left:1498.3px;top:323.06px;width:54.06px;height:17.68px;text-align:right;font-size:13.6px;line-height:17.68px;color:#0a0a0a;white-space:pre;transform:scaleX(0.930);transform-origin:100% 50%;">41.00</div>
<div style="left:1176.6px;top:339.72px;width:51.6px;height:16.04px;background:#f2f2f2;box-shadow:inset 1px 1px 0 #fff;"></div>
<div style="left:1172px;top:340.7px;width:53.2px;height:17.68px;text-align:right;font-size:13.6px;line-height:17.68px;color:#000;white-space:pre;transform:scaleX(0.930);transform-origin:100% 50%;">43.80</div>
<div style="left:1229.8px;top:339.72px;width:52.46px;height:16.04px;background:rgb(172,222,222);"></div>
<div style="left:1228px;top:340.7px;width:54.06px;height:17.68px;text-align:right;font-size:13.6px;line-height:17.68px;color:#0a0a0a;white-space:pre;transform:scaleX(0.930);transform-origin:100% 50%;">22.00</div>
<div style="left:1283.86px;top:339.72px;width:52.46px;height:16.04px;background:rgb(198,177,177);"></div>
<div style="left:1282.06px;top:340.7px;width:54.06px;height:17.68px;text-align:right;font-size:13.6px;line-height:17.68px;color:#0a0a0a;white-space:pre;transform:scaleX(0.930);transform-origin:100% 50%;">40.00</div>
<div style="left:1337.92px;top:339.72px;width:52.46px;height:16.04px;background:rgb(220,138,138);"></div>
<div style="left:1336.12px;top:340.7px;width:54.06px;height:17.68px;text-align:right;font-size:13.6px;line-height:17.68px;color:#0a0a0a;white-space:pre;transform:scaleX(0.930);transform-origin:100% 50%;">55.50</div>
<div style="left:1391.98px;top:339.72px;width:52.46px;height:16.04px;background:rgb(153,255,255);"></div>
<div style="left:1390.18px;top:340.7px;width:54.06px;height:17.68px;text-align:right;font-size:13.6px;line-height:17.68px;color:#0a0a0a;white-space:pre;transform:scaleX(0.930);transform-origin:100% 50%;">9.00</div>
<div style="left:1446.04px;top:339.72px;width:52.46px;height:16.04px;background:rgb(187,196,196);"></div>
<div style="left:1444.24px;top:340.7px;width:54.06px;height:17.68px;text-align:right;font-size:13.6px;line-height:17.68px;color:#0a0a0a;white-space:pre;transform:scaleX(0.930);transform-origin:100% 50%;">32.50</div>
<div style="left:1500.1px;top:339.72px;width:52.46px;height:16.04px;background:rgb(205,165,165);"></div>
<div style="left:1498.3px;top:340.7px;width:54.06px;height:17.68px;text-align:right;font-size:13.6px;line-height:17.68px;color:#0a0a0a;white-space:pre;transform:scaleX(0.930);transform-origin:100% 50%;">45.00</div>
<div style="left:1176.6px;top:357.36px;width:51.6px;height:16.04px;background:#f2f2f2;box-shadow:inset 1px 1px 0 #fff;"></div>
<div style="left:1172px;top:358.34px;width:53.2px;height:17.68px;text-align:right;font-size:13.6px;line-height:17.68px;color:#000;white-space:pre;transform:scaleX(0.930);transform-origin:100% 50%;">50.00</div>
<div style="left:1229.8px;top:357.36px;width:52.46px;height:16.04px;background:rgb(173,220,220);"></div>
<div style="left:1228px;top:358.34px;width:54.06px;height:17.68px;text-align:right;font-size:13.6px;line-height:17.68px;color:#0a0a0a;white-space:pre;transform:scaleX(0.930);transform-origin:100% 50%;">23.00</div>
<div style="left:1283.86px;top:357.36px;width:52.46px;height:16.04px;background:rgb(200,174,174);"></div>
<div style="left:1282.06px;top:358.34px;width:54.06px;height:17.68px;text-align:right;font-size:13.6px;line-height:17.68px;color:#0a0a0a;white-space:pre;transform:scaleX(0.930);transform-origin:100% 50%;">41.50</div>
<div style="left:1337.92px;top:357.36px;width:52.46px;height:16.04px;background:rgb(225,130,130);"></div>
<div style="left:1336.12px;top:358.34px;width:54.06px;height:17.68px;text-align:right;font-size:13.6px;line-height:17.68px;color:#0a0a0a;white-space:pre;transform:scaleX(0.930);transform-origin:100% 50%;">59.00</div>
<div style="left:1391.98px;top:357.36px;width:52.46px;height:16.04px;background:rgb(153,255,255);"></div>
<div style="left:1390.18px;top:358.34px;width:54.06px;height:17.68px;text-align:right;font-size:13.6px;line-height:17.68px;color:#0a0a0a;white-space:pre;transform:scaleX(0.930);transform-origin:100% 50%;">9.00</div>
<div style="left:1446.04px;top:357.36px;width:52.46px;height:16.04px;background:rgb(191,189,189);"></div>
<div style="left:1444.24px;top:358.34px;width:54.06px;height:17.68px;text-align:right;font-size:13.6px;line-height:17.68px;color:#0a0a0a;white-space:pre;transform:scaleX(0.930);transform-origin:100% 50%;">35.50</div>
<div style="left:1500.1px;top:357.36px;width:52.46px;height:16.04px;background:rgb(210,155,155);"></div>
<div style="left:1498.3px;top:358.34px;width:54.06px;height:17.68px;text-align:right;font-size:13.6px;line-height:17.68px;color:#0a0a0a;white-space:pre;transform:scaleX(0.930);transform-origin:100% 50%;">49.00</div>
<div style="left:1176.6px;top:375px;width:51.6px;height:16.04px;background:#f2f2f2;box-shadow:inset 1px 1px 0 #fff;"></div>
<div style="left:1172px;top:375.98px;width:53.2px;height:17.68px;text-align:right;font-size:13.6px;line-height:17.68px;color:#000;white-space:pre;transform:scaleX(0.930);transform-origin:100% 50%;">56.30</div>
<div style="left:1229.8px;top:375px;width:52.46px;height:16.04px;background:rgb(175,217,217);"></div>
<div style="left:1228px;top:375.98px;width:54.06px;height:17.68px;text-align:right;font-size:13.6px;line-height:17.68px;color:#0a0a0a;white-space:pre;transform:scaleX(0.930);transform-origin:100% 50%;">24.00</div>
<div style="left:1283.86px;top:375px;width:52.46px;height:16.04px;background:rgb(202,170,170);"></div>
<div style="left:1282.06px;top:375.98px;width:54.06px;height:17.68px;text-align:right;font-size:13.6px;line-height:17.68px;color:#0a0a0a;white-space:pre;transform:scaleX(0.930);transform-origin:100% 50%;">43.00</div>
<div style="left:1337.92px;top:375px;width:52.46px;height:16.04px;background:rgb(229,122,122);"></div>
<div style="left:1336.12px;top:375.98px;width:54.06px;height:17.68px;text-align:right;font-size:13.6px;line-height:17.68px;color:#0a0a0a;white-space:pre;transform:scaleX(0.930);transform-origin:100% 50%;">62.00</div>
<div style="left:1391.98px;top:375px;width:52.46px;height:16.04px;background:rgb(153,255,255);"></div>
<div style="left:1390.18px;top:375.98px;width:54.06px;height:17.68px;text-align:right;font-size:13.6px;line-height:17.68px;color:#0a0a0a;white-space:pre;transform:scaleX(0.930);transform-origin:100% 50%;">9.00</div>
<div style="left:1446.04px;top:375px;width:52.46px;height:16.04px;background:rgb(194,184,184);"></div>
<div style="left:1444.24px;top:375.98px;width:54.06px;height:17.68px;text-align:right;font-size:13.6px;line-height:17.68px;color:#0a0a0a;white-space:pre;transform:scaleX(0.930);transform-origin:100% 50%;">37.50</div>
<div style="left:1500.1px;top:375px;width:52.46px;height:16.04px;background:rgb(216,145,145);"></div>
<div style="left:1498.3px;top:375.98px;width:54.06px;height:17.68px;text-align:right;font-size:13.6px;line-height:17.68px;color:#0a0a0a;white-space:pre;transform:scaleX(0.930);transform-origin:100% 50%;">53.00</div>
<div style="left:1176.6px;top:392.64px;width:51.6px;height:16.04px;background:#f2f2f2;box-shadow:inset 1px 1px 0 #fff;"></div>
<div style="left:1172px;top:393.62px;width:53.2px;height:17.68px;text-align:right;font-size:13.6px;line-height:17.68px;color:#000;white-space:pre;transform:scaleX(0.930);transform-origin:100% 50%;">62.50</div>
<div style="left:1229.8px;top:392.64px;width:52.46px;height:16.04px;background:rgb(175,216,216);"></div>
<div style="left:1228px;top:393.62px;width:54.06px;height:17.68px;text-align:right;font-size:13.6px;line-height:17.68px;color:#0a0a0a;white-space:pre;transform:scaleX(0.930);transform-origin:100% 50%;">24.50</div>
<div style="left:1283.86px;top:392.64px;width:52.46px;height:16.04px;background:rgb(203,167,167);"></div>
<div style="left:1282.06px;top:393.62px;width:54.06px;height:17.68px;text-align:right;font-size:13.6px;line-height:17.68px;color:#0a0a0a;white-space:pre;transform:scaleX(0.930);transform-origin:100% 50%;">44.00</div>
<div style="left:1337.92px;top:392.64px;width:52.46px;height:16.04px;background:rgb(233,115,115);"></div>
<div style="left:1336.12px;top:393.62px;width:54.06px;height:17.68px;text-align:right;font-size:13.6px;line-height:17.68px;color:#0a0a0a;white-space:pre;transform:scaleX(0.930);transform-origin:100% 50%;">65.00</div>
<div style="left:1391.98px;top:392.64px;width:52.46px;height:16.04px;background:rgb(153,255,255);"></div>
<div style="left:1390.18px;top:393.62px;width:54.06px;height:17.68px;text-align:right;font-size:13.6px;line-height:17.68px;color:#0a0a0a;white-space:pre;transform:scaleX(0.930);transform-origin:100% 50%;">9.00</div>
<div style="left:1446.04px;top:392.64px;width:52.46px;height:16.04px;background:rgb(195,181,181);"></div>
<div style="left:1444.24px;top:393.62px;width:54.06px;height:17.68px;text-align:right;font-size:13.6px;line-height:17.68px;color:#0a0a0a;white-space:pre;transform:scaleX(0.930);transform-origin:100% 50%;">38.50</div>
<div style="left:1500.1px;top:392.64px;width:52.46px;height:16.04px;background:rgb(222,135,135);"></div>
<div style="left:1498.3px;top:393.62px;width:54.06px;height:17.68px;text-align:right;font-size:13.6px;line-height:17.68px;color:#0a0a0a;white-space:pre;transform:scaleX(0.930);transform-origin:100% 50%;">57.00</div>
<div style="left:1176.6px;top:410.28px;width:51.6px;height:16.04px;background:#f2f2f2;box-shadow:inset 1px 1px 0 #fff;"></div>
<div style="left:1172px;top:411.26px;width:53.2px;height:17.68px;text-align:right;font-size:13.6px;line-height:17.68px;color:#000;white-space:pre;transform:scaleX(0.930);transform-origin:100% 50%;">68.80</div>
<div style="left:1229.8px;top:410.28px;width:52.46px;height:16.04px;background:rgb(175,216,216);"></div>
<div style="left:1228px;top:411.26px;width:54.06px;height:17.68px;text-align:right;font-size:13.6px;line-height:17.68px;color:#0a0a0a;white-space:pre;transform:scaleX(0.930);transform-origin:100% 50%;">24.50</div>
<div style="left:1283.86px;top:410.28px;width:52.46px;height:16.04px;background:rgb(205,163,163);"></div>
<div style="left:1282.06px;top:411.26px;width:54.06px;height:17.68px;text-align:right;font-size:13.6px;line-height:17.68px;color:#0a0a0a;white-space:pre;transform:scaleX(0.930);transform-origin:100% 50%;">45.50</div>
<div style="left:1337.92px;top:410.28px;width:52.46px;height:16.04px;background:rgb(238,107,107);"></div>
<div style="left:1336.12px;top:411.26px;width:54.06px;height:17.68px;text-align:right;font-size:13.6px;line-height:17.68px;color:#0a0a0a;white-space:pre;transform:scaleX(0.930);transform-origin:100% 50%;">68.00</div>
<div style="left:1391.98px;top:410.28px;width:52.46px;height:16.04px;background:rgb(153,255,255);"></div>
<div style="left:1390.18px;top:411.26px;width:54.06px;height:17.68px;text-align:right;font-size:13.6px;line-height:17.68px;color:#0a0a0a;white-space:pre;transform:scaleX(0.930);transform-origin:100% 50%;">9.00</div>
<div style="left:1446.04px;top:410.28px;width:52.46px;height:16.04px;background:rgb(199,175,175);"></div>
<div style="left:1444.24px;top:411.26px;width:54.06px;height:17.68px;text-align:right;font-size:13.6px;line-height:17.68px;color:#0a0a0a;white-space:pre;transform:scaleX(0.930);transform-origin:100% 50%;">41.00</div>
<div style="left:1500.1px;top:410.28px;width:52.46px;height:16.04px;background:rgb(227,126,126);"></div>
<div style="left:1498.3px;top:411.26px;width:54.06px;height:17.68px;text-align:right;font-size:13.6px;line-height:17.68px;color:#0a0a0a;white-space:pre;transform:scaleX(0.930);transform-origin:100% 50%;">60.50</div>
<div style="left:1176.6px;top:427.92px;width:51.6px;height:16.04px;background:#f2f2f2;box-shadow:inset 1px 1px 0 #fff;"></div>
<div style="left:1172px;top:428.9px;width:53.2px;height:17.68px;text-align:right;font-size:13.6px;line-height:17.68px;color:#000;white-space:pre;transform:scaleX(0.930);transform-origin:100% 50%;">75.00</div>
<div style="left:1229.8px;top:427.92px;width:52.46px;height:16.04px;background:rgb(176,215,215);"></div>
<div style="left:1228px;top:428.9px;width:54.06px;height:17.68px;text-align:right;font-size:13.6px;line-height:17.68px;color:#0a0a0a;white-space:pre;transform:scaleX(0.930);transform-origin:100% 50%;">25.00</div>
<div style="left:1283.86px;top:427.92px;width:52.46px;height:16.04px;background:rgb(207,161,161);"></div>
<div style="left:1282.06px;top:428.9px;width:54.06px;height:17.68px;text-align:right;font-size:13.6px;line-height:17.68px;color:#0a0a0a;white-space:pre;transform:scaleX(0.930);transform-origin:100% 50%;">46.50</div>
<div style="left:1337.92px;top:427.92px;width:52.46px;height:16.04px;background:rgb(241,101,101);"></div>
<div style="left:1336.12px;top:428.9px;width:54.06px;height:17.68px;text-align:right;font-size:13.6px;line-height:17.68px;color:#0a0a0a;white-space:pre;transform:scaleX(0.930);transform-origin:100% 50%;">70.50</div>
<div style="left:1391.98px;top:427.92px;width:52.46px;height:16.04px;background:rgb(153,255,255);"></div>
<div style="left:1390.18px;top:428.9px;width:54.06px;height:17.68px;text-align:right;font-size:13.6px;line-height:17.68px;color:#0a0a0a;white-space:pre;transform:scaleX(0.930);transform-origin:100% 50%;">9.00</div>
<div style="left:1446.04px;top:427.92px;width:52.46px;height:16.04px;background:rgb(201,171,171);"></div>
<div style="left:1444.24px;top:428.9px;width:54.06px;height:17.68px;text-align:right;font-size:13.6px;line-height:17.68px;color:#0a0a0a;white-space:pre;transform:scaleX(0.930);transform-origin:100% 50%;">42.50</div>
<div style="left:1500.1px;top:427.92px;width:52.46px;height:16.04px;background:rgb(233,116,116);"></div>
<div style="left:1498.3px;top:428.9px;width:54.06px;height:17.68px;text-align:right;font-size:13.6px;line-height:17.68px;color:#0a0a0a;white-space:pre;transform:scaleX(0.930);transform-origin:100% 50%;">64.50</div>
<div style="left:1176.6px;top:445.56px;width:51.6px;height:16.04px;background:#f2f2f2;box-shadow:inset 1px 1px 0 #fff;"></div>
<div style="left:1172px;top:446.54px;width:53.2px;height:17.68px;text-align:right;font-size:13.6px;line-height:17.68px;color:#000;white-space:pre;transform:scaleX(0.930);transform-origin:100% 50%;">81.30</div>
<div style="left:1229.8px;top:445.56px;width:52.46px;height:16.04px;background:rgb(177,212,212);"></div>
<div style="left:1228px;top:446.54px;width:54.06px;height:17.68px;text-align:right;font-size:13.6px;line-height:17.68px;color:#0a0a0a;white-space:pre;transform:scaleX(0.930);transform-origin:100% 50%;">26.00</div>
<div style="left:1283.86px;top:445.56px;width:52.46px;height:16.04px;background:rgb(209,157,157);"></div>
<div style="left:1282.06px;top:446.54px;width:54.06px;height:17.68px;text-align:right;font-size:13.6px;line-height:17.68px;color:#0a0a0a;white-space:pre;transform:scaleX(0.930);transform-origin:100% 50%;">48.00</div>
<div style="left:1337.92px;top:445.56px;width:52.46px;height:16.04px;background:rgb(246,93,93);"></div>
<div style="left:1336.12px;top:446.54px;width:54.06px;height:17.68px;text-align:right;font-size:13.6px;line-height:17.68px;color:#0a0a0a;white-space:pre;transform:scaleX(0.930);transform-origin:100% 50%;">73.50</div>
<div style="left:1391.98px;top:445.56px;width:52.46px;height:16.04px;background:rgb(153,255,255);"></div>
<div style="left:1390.18px;top:446.54px;width:54.06px;height:17.68px;text-align:right;font-size:13.6px;line-height:17.68px;color:#0a0a0a;white-space:pre;transform:scaleX(0.930);transform-origin:100% 50%;">9.00</div>
<div style="left:1446.04px;top:445.56px;width:52.46px;height:16.04px;background:rgb(203,169,169);"></div>
<div style="left:1444.24px;top:446.54px;width:54.06px;height:17.68px;text-align:right;font-size:13.6px;line-height:17.68px;color:#0a0a0a;white-space:pre;transform:scaleX(0.930);transform-origin:100% 50%;">43.50</div>
<div style="left:1500.1px;top:445.56px;width:52.46px;height:16.04px;background:rgb(238,107,107);"></div>
<div style="left:1498.3px;top:446.54px;width:54.06px;height:17.68px;text-align:right;font-size:13.6px;line-height:17.68px;color:#0a0a0a;white-space:pre;transform:scaleX(0.930);transform-origin:100% 50%;">68.00</div>
<div style="left:1176.6px;top:463.2px;width:51.6px;height:16.04px;background:#f2f2f2;box-shadow:inset 1px 1px 0 #fff;"></div>
<div style="left:1172px;top:464.18px;width:53.2px;height:17.68px;text-align:right;font-size:13.6px;line-height:17.68px;color:#000;white-space:pre;transform:scaleX(0.930);transform-origin:100% 50%;">87.50</div>
<div style="left:1229.8px;top:463.2px;width:52.46px;height:16.04px;background:rgb(177,212,212);"></div>
<div style="left:1228px;top:464.18px;width:54.06px;height:17.68px;text-align:right;font-size:13.6px;line-height:17.68px;color:#0a0a0a;white-space:pre;transform:scaleX(0.930);transform-origin:100% 50%;">26.00</div>
<div style="left:1283.86px;top:463.2px;width:52.46px;height:16.04px;background:rgb(209,157,157);"></div>
<div style="left:1282.06px;top:464.18px;width:54.06px;height:17.68px;text-align:right;font-size:13.6px;line-height:17.68px;color:#0a0a0a;white-space:pre;transform:scaleX(0.930);transform-origin:100% 50%;">48.00</div>
<div style="left:1337.92px;top:463.2px;width:52.46px;height:16.04px;background:rgb(249,87,87);"></div>
<div style="left:1336.12px;top:464.18px;width:54.06px;height:17.68px;text-align:right;font-size:13.6px;line-height:17.68px;color:#0a0a0a;white-space:pre;transform:scaleX(0.930);transform-origin:100% 50%;">76.00</div>
<div style="left:1391.98px;top:463.2px;width:52.46px;height:16.04px;background:rgb(153,255,255);"></div>
<div style="left:1390.18px;top:464.18px;width:54.06px;height:17.68px;text-align:right;font-size:13.6px;line-height:17.68px;color:#0a0a0a;white-space:pre;transform:scaleX(0.930);transform-origin:100% 50%;">9.00</div>
<div style="left:1446.04px;top:463.2px;width:52.46px;height:16.04px;background:rgb(203,167,167);"></div>
<div style="left:1444.24px;top:464.18px;width:54.06px;height:17.68px;text-align:right;font-size:13.6px;line-height:17.68px;color:#0a0a0a;white-space:pre;transform:scaleX(0.930);transform-origin:100% 50%;">44.00</div>
<div style="left:1500.1px;top:463.2px;width:52.46px;height:16.04px;background:rgb(242,100,100);"></div>
<div style="left:1498.3px;top:464.18px;width:54.06px;height:17.68px;text-align:right;font-size:13.6px;line-height:17.68px;color:#0a0a0a;white-space:pre;transform:scaleX(0.930);transform-origin:100% 50%;">71.00</div>
<div style="left:1176.6px;top:480.84px;width:51.6px;height:16.04px;background:#f2f2f2;box-shadow:inset 1px 1px 0 #fff;"></div>
<div style="left:1172px;top:481.82px;width:53.2px;height:17.68px;text-align:right;font-size:13.6px;line-height:17.68px;color:#000;white-space:pre;transform:scaleX(0.930);transform-origin:100% 50%;">93.80</div>
<div style="left:1229.8px;top:480.84px;width:52.46px;height:16.04px;background:rgb(187,195,195);"></div>
<div style="left:1228px;top:481.82px;width:54.06px;height:17.68px;text-align:right;font-size:13.6px;line-height:17.68px;color:#0a0a0a;white-space:pre;transform:scaleX(0.930);transform-origin:100% 50%;">33.00</div>
<div style="left:1283.86px;top:480.84px;width:52.46px;height:16.04px;background:rgb(221,137,137);"></div>
<div style="left:1282.06px;top:481.82px;width:54.06px;height:17.68px;text-align:right;font-size:13.6px;line-height:17.68px;color:#0a0a0a;white-space:pre;transform:scaleX(0.930);transform-origin:100% 50%;">56.00</div>
<div style="left:1337.92px;top:480.84px;width:52.46px;height:16.04px;background:rgb(255,77,77);"></div>
<div style="left:1336.12px;top:481.82px;width:54.06px;height:17.68px;text-align:right;font-size:13.6px;line-height:17.68px;color:#0a0a0a;white-space:pre;transform:scaleX(0.930);transform-origin:100% 50%;">80.00</div>
<div style="left:1391.98px;top:480.84px;width:52.46px;height:16.04px;background:rgb(182,205,205);"></div>
<div style="left:1390.18px;top:481.82px;width:54.06px;height:17.68px;text-align:right;font-size:13.6px;line-height:17.68px;color:#0a0a0a;white-space:pre;transform:scaleX(0.930);transform-origin:100% 50%;">29.00</div>
<div style="left:1446.04px;top:480.84px;width:52.46px;height:16.04px;background:rgb(213,150,150);"></div>
<div style="left:1444.24px;top:481.82px;width:54.06px;height:17.68px;text-align:right;font-size:13.6px;line-height:17.68px;color:#0a0a0a;white-space:pre;transform:scaleX(0.930);transform-origin:100% 50%;">51.00</div>
<div style="left:1500.1px;top:480.84px;width:52.46px;height:16.04px;background:rgb(248,90,90);"></div>
<div style="left:1498.3px;top:481.82px;width:54.06px;height:17.68px;text-align:right;font-size:13.6px;line-height:17.68px;color:#0a0a0a;white-space:pre;transform:scaleX(0.930);transform-origin:100% 50%;">75.00</div>
<div style="left:1176.6px;top:498.48px;width:51.6px;height:16.04px;background:#f2f2f2;box-shadow:inset 1px 1px 0 #fff;"></div>
<div style="left:1172px;top:499.46px;width:53.2px;height:17.68px;text-align:right;font-size:13.6px;line-height:17.68px;color:#000;white-space:pre;transform:scaleX(0.930);transform-origin:100% 50%;">100.00</div>
<div style="left:1229.8px;top:498.48px;width:52.46px;height:16.04px;background:rgb(187,195,195);"></div>
<div style="left:1228px;top:499.46px;width:54.06px;height:17.68px;text-align:right;font-size:13.6px;line-height:17.68px;color:#0a0a0a;white-space:pre;transform:scaleX(0.930);transform-origin:100% 50%;">33.00</div>
<div style="left:1283.86px;top:498.48px;width:52.46px;height:16.04px;background:rgb(221,137,137);"></div>
<div style="left:1282.06px;top:499.46px;width:54.06px;height:17.68px;text-align:right;font-size:13.6px;line-height:17.68px;color:#0a0a0a;white-space:pre;transform:scaleX(0.930);transform-origin:100% 50%;">56.00</div>
<div style="left:1337.92px;top:498.48px;width:52.46px;height:16.04px;background:rgb(255,77,77);"></div>
<div style="left:1336.12px;top:499.46px;width:54.06px;height:17.68px;text-align:right;font-size:13.6px;line-height:17.68px;color:#0a0a0a;white-space:pre;transform:scaleX(0.930);transform-origin:100% 50%;">80.00</div>
<div style="left:1391.98px;top:498.48px;width:52.46px;height:16.04px;background:rgb(182,205,205);"></div>
<div style="left:1390.18px;top:499.46px;width:54.06px;height:17.68px;text-align:right;font-size:13.6px;line-height:17.68px;color:#0a0a0a;white-space:pre;transform:scaleX(0.930);transform-origin:100% 50%;">29.00</div>
<div style="left:1446.04px;top:498.48px;width:52.46px;height:16.04px;background:rgb(213,150,150);"></div>
<div style="left:1444.24px;top:499.46px;width:54.06px;height:17.68px;text-align:right;font-size:13.6px;line-height:17.68px;color:#0a0a0a;white-space:pre;transform:scaleX(0.930);transform-origin:100% 50%;">51.00</div>
<div style="left:1500.1px;top:498.48px;width:52.46px;height:16.04px;background:rgb(248,90,90);"></div>
<div style="left:1498.3px;top:499.46px;width:54.06px;height:17.68px;text-align:right;font-size:13.6px;line-height:17.68px;color:#0a0a0a;white-space:pre;transform:scaleX(0.930);transform-origin:100% 50%;">75.00</div>
<div style="left:1174px;top:524px;width:412.8px;height:28.8px;background:#f0f0f0;border-top:1px solid #fafafa;"></div>
<div style="left:1260.6px;top:527px;width:1px;height:22.8px;background:#d8d8d8;"></div>
<div style="left:1349px;top:527px;width:1px;height:22.8px;background:#d8d8d8;"></div>
<svg style="left:1574.8px;top:540.8px;width:11px;height:11px" viewBox="0 0 5.5 5.5"><path d="M4.2 0.8 h.9 v.9 h-.9z M4.2 2.6 h.9 v.9 h-.9z M4.2 4.2 h.9 v.9 h-.9z M2.5 2.6 h.9 v.9 h-.9z M2.5 4.2 h.9 v.9 h-.9z M0.8 4.2 h.9 v.9 h-.9z" fill="#a8a8a8"/></svg>
<div style="left:779.8px;top:567.6px;width:353px;height:476.6px;box-shadow:0 0 1.8px 1px rgba(20,20,20,.5);border-radius:6.4px 6.4px 1.2px 1.2px;"></div>
<div style="left:779.8px;top:567.6px;width:353px;height:476.6px;background:linear-gradient(#c5d7eb 0,#dbe7f5 36px,#d5e2f2 100%);border:1px solid #9aa6b5;border-radius:6px 6px 1px 1px;box-shadow:inset 0 0 0 1px rgba(255,255,255,.75);"></div>
<svg style="left:790.2px;top:581.6px;width:19.2px;height:14px" viewBox="0 0 9.6 7"><rect x="0" y="0.9" width="9.6" height="5.2" fill="#000"/><rect x="0.50" y="0" width="0.9" height="7" fill="#000"/><rect x="2.04" y="0" width="0.9" height="7" fill="#000"/><rect x="3.58" y="0" width="0.9" height="7" fill="#000"/><rect x="5.12" y="0" width="0.9" height="7" fill="#000"/><rect x="6.66" y="0" width="0.9" height="7" fill="#000"/><rect x="8.20" y="0" width="0.9" height="7" fill="#000"/></svg>
<div style="left:814.6px;top:578.32px;height:19.76px;font-size:15.2px;line-height:19.76px;color:#9aa0a8;white-space:pre;transform:scaleX(0.861);transform-origin:0 50%;">Torque Converter Release MPH Vs. TPS</div>
<div style="left:1070.4px;top:582.64px;height:18.72px;font-size:14.4px;line-height:18.72px;color:#9aa0a8;white-space:pre;">...</div>
<div style="left:1085px;top:578.8px;width:37.6px;height:21.4px;background:linear-gradient(#dde8f4,#cddbec);border:1px solid #93a6bd;border-radius:3.2px;box-shadow:inset 0 0 0 1px rgba(255,255,255,.6);"></div>
<svg style="left:1097px;top:583.9px;width:13.6px;height:11.2px" viewBox="0 0 6.8 5.6"><path d="M1.3 0.9 L5.5 4.7 M5.5 0.9 L1.3 4.7" stroke="#949dab" stroke-width="2.5" stroke-linecap="square" fill="none"/><path d="M1.3 0.9 L5.5 4.7 M5.5 0.9 L1.3 4.7" stroke="#fff" stroke-width="1.5" stroke-linecap="square" fill="none"/></svg>
<div style="left:789.4px;top:603.4px;width:335.2px;height:432.6px;background:#f0f0f0;"></div>
<div style="left:789.4px;top:603.4px;width:335.2px;height:60px;overflow:hidden;"><div style="left:-789.4px;top:-603.4px;width:1600px;height:1070px;">
<div style="left:792.6px;top:609.4px;width:1.2px;height:20px;background:#b5b5b5;"></div>
<div style="left:792.6px;top:636.4px;width:1.2px;height:20px;background:#b5b5b5;"></div>
<svg style="left:803.4px;top:609.8px;width:18.4px;height:18.4px" viewBox="0 0 10 10"><rect x="0.5" y="0.5" width="9" height="9" fill="#0c0c0c"/><rect x="0.3" y="0.5" width="1" height="9.2" fill="#7d7d18"/><rect x="0.3" y="8.8" width="9.2" height="0.9" fill="#7d7d18"/><rect x="2.4" y="0.5" width="5.6" height="3.6" fill="#fafafa"/><rect x="2" y="5.6" width="6.4" height="3.2" fill="#2a2a08"/><rect x="6.2" y="6.2" width="1.6" height="2.2" fill="#f4f4f4"/></svg>
<svg style="left:829.4px;top:609.8px;width:18.4px;height:18.4px" viewBox="0 0 10 10"><path d="M1.8 0.8 L8.2 9.2 M8.2 0.8 L1.8 9.2" stroke="#f41212" stroke-width="1.7" fill="none"/></svg>
<svg style="left:856.8px;top:609.8px;width:18.4px;height:18.4px" viewBox="0 0 10 10"><path d="M1 0.4 V9.2 H9.6" stroke="#333" stroke-width=".6" fill="none" stroke-dasharray=".9 .7"/><path d="M1.2 3 L3 5.4 L4.8 3.6 L6.6 5.8 L9.4 2.8" stroke="#ee1616" stroke-width="1.3" fill="none"/></svg>
<svg style="left:884.2px;top:609.8px;width:18.4px;height:18.4px" viewBox="0 0 10 10"><path d="M0.9 4.2 Q5 0.6 9.1 4.2" stroke="#111" stroke-width="1" fill="none"/><circle cx="5" cy="1.4" r="1" fill="#111"/><path d="M5 1.6 V8.4" stroke="#111" stroke-width="1.2"/><ellipse cx="2.1" cy="5.6" rx="2.1" ry="1.1" fill="#d2d23a" stroke="#444" stroke-width=".5"/><ellipse cx="7.9" cy="5.6" rx="2.1" ry="1.1" fill="#d2d23a" stroke="#444" stroke-width=".5"/><ellipse cx="5" cy="8.8" rx="2.8" ry="0.9" fill="#111"/></svg>
<svg style="left:911px;top:609.8px;width:18.4px;height:18.4px" viewBox="0 0 10 10"><rect x="1.4" y="0.4" width="7.2" height="5.4" fill="#1a1aff"/><path d="M5 1.2 L8.8 8.8 H1.2 Z" fill="#fff" stroke="#000" stroke-width="1.25" stroke-linejoin="miter"/><rect x="0.6" y="8.4" width="8.8" height="1.2" fill="#000"/><rect x="3.4" y="0.2" width="3.2" height="1.3" fill="#000"/></svg>
<svg style="left:938.2px;top:609.8px;width:18.4px;height:18.4px" viewBox="0 0 10 10"><path d="M1 0.8 L6.6 8.2 M6.6 0.8 L1 8.2" stroke="#a2a2a2" stroke-width="1.3" fill="none"/><path d="M6.4 9.3 H9.6 L8.6 6.8 Z" fill="#a2a2a2"/></svg>
<svg style="left:965px;top:609.8px;width:18.4px;height:18.4px" viewBox="0 0 10 10"><path d="M0.6 0.8 L3 4.4 L5.4 0.8 M3 4.4 V9.2" stroke="#a2a2a2" stroke-width="1.3" fill="none"/><path d="M7.6 9.2 V2.4" stroke="#a2a2a2" stroke-width="1.2" fill="none"/><path d="M5.6 4.2 L7.6 1 L9.6 4.2" stroke="#a2a2a2" stroke-width="1.1" fill="none"/></svg>
<svg style="left:992.2px;top:609.8px;width:18.4px;height:18.4px" viewBox="0 0 10 10"><path d="M1.2 9.2 L5 0.8 L8.8 9.2 M2.6 6.2 H7.4" stroke="#a2a2a2" stroke-width="1.3" fill="none"/></svg>
<div style="left:805.4px;top:638.49px;height:17.42px;font-size:13.4px;line-height:17.42px;color:#111;white-space:pre;transform:scaleX(0.918);transform-origin:0 50%;">Function:</div>
<div style="left:862px;top:634.8px;width:108.4px;height:23.6px;background:linear-gradient(#ececec,#dddddd);border:1px solid #b4b4b4;"></div>
<div style="left:867.4px;top:638.89px;height:17.42px;font-size:13.4px;line-height:17.42px;color:#111;white-space:pre;transform:scaleX(1.029);transform-origin:0 50%;">Offset (+/-)</div>
<svg style="left:955.4px;top:644.6px;width:10.4px;height:6.4px" viewBox="0 0 5.2 3.2"><path d="M0.4 0.4 L2.6 2.6 L4.8 0.4" stroke="#555" stroke-width=".8" fill="none"/></svg>
<div style="left:976.4px;top:638.49px;height:17.42px;font-size:13.4px;line-height:17.42px;color:#111;white-space:pre;transform:scaleX(0.908);transform-origin:0 50%;">Value:</div>
<div style="left:1015.4px;top:634.8px;width:56px;height:23.6px;background:#fff;border:1px solid #8a8a8a;"></div>
<div style="left:1022.6px;top:638.89px;height:17.42px;font-size:13.4px;line-height:17.42px;color:#111;white-space:pre;">1.0</div>
<div style="left:1075.8px;top:635.6px;width:56px;height:22.4px;background:#e3e3e3;border:1px solid #adadad;"></div>
<div style="left:1081.2px;top:639.29px;height:17.42px;font-size:13.4px;line-height:17.42px;color:#111;white-space:pre;transform:scaleX(0.934);transform-origin:0 50%;">Execute</div>
</div></div>
<div style="left:789.4px;top:662.8px;width:333px;height:343.4px;background:#808080;border-top:1px solid #5a5a5a;border-left:1px solid #5a5a5a;border-right:1px solid #e8e8e8;border-bottom:1px solid #e8e8e8;"></div>
<div style="left:792px;top:665.4px;width:328px;height:17.4px;background:#a0a0a0;"></div>
<div style="left:792px;top:665.4px;width:326.4px;height:15.8px;background:#f4f4f4;box-shadow:inset 1px 1px 0 #fff;overflow:hidden;"></div>
<div style="left:794px;top:665.37px;height:18.46px;font-size:14.2px;line-height:18.46px;color:#000;white-space:pre;font-weight:bold;transform:scaleX(0.992);transform-origin:0 50%;">Torque Converter Release MPH Vs. TPS</div>
<div style="left:1104.8px;top:666.62px;height:17.16px;font-size:13.2px;line-height:17.16px;color:#222;white-space:pre;">...</div>
<div style="left:792px;top:682.8px;width:214.6px;height:17.64px;background:#b0b0b0;"></div>
<div style="left:792px;top:682.8px;width:52px;height:317.52px;background:#b0b0b0;"></div>
<div style="left:844px;top:700.44px;width:162.6px;height:299.88px;background:#e4e4e4;"></div>
<div style="left:792px;top:682.8px;width:50.4px;height:16.04px;background:#f2f2f2;box-shadow:inset 1px 1px 0 #fff;"></div>
<div style="left:844px;top:682.8px;width:52.6px;height:16.04px;background:#d6d6d6;box-shadow:inset 1px 1px 0 #e8e8e8;"></div>
<div style="left:844px;top:683.78px;width:54.2px;height:17.68px;text-align:center;font-size:13.6px;line-height:17.68px;color:#000;white-space:pre;transform:scaleX(0.930);transform-origin:50% 50%;">2nd</div>
<div style="left:898.2px;top:682.8px;width:52.6px;height:16.04px;background:#f2f2f2;box-shadow:inset 1px 1px 0 #fff;"></div>
<div style="left:898.2px;top:683.78px;width:54.2px;height:17.68px;text-align:center;font-size:13.6px;line-height:17.68px;color:#000;white-space:pre;transform:scaleX(0.930);transform-origin:50% 50%;">3rd</div>
<div style="left:952.4px;top:682.8px;width:52.6px;height:16.04px;background:#f2f2f2;box-shadow:inset 1px 1px 0 #fff;"></div>
<div style="left:952.4px;top:683.78px;width:54.2px;height:17.68px;text-align:center;font-size:13.6px;line-height:17.68px;color:#000;white-space:pre;transform:scaleX(0.930);transform-origin:50% 50%;">4th</div>
<div style="left:792px;top:700.44px;width:50.4px;height:16.04px;background:#d6d6d6;box-shadow:inset 1px 1px 0 #e8e8e8;"></div>
<div style="left:787.4px;top:701.42px;width:52px;height:17.68px;text-align:right;font-size:13.6px;line-height:17.68px;color:#000;white-space:pre;transform:scaleX(0.930);transform-origin:100% 50%;">0.0</div>
<div style="left:843.4px;top:699.84px;width:54.4px;height:17.84px;background:rgb(217,119,119);border:1px solid #3a3a3a;"></div>
<div style="left:842.2px;top:701.42px;width:54.2px;height:17.68px;text-align:right;font-size:13.6px;line-height:17.68px;color:#0a0a0a;white-space:pre;transform:scaleX(0.930);transform-origin:100% 50%;">125.00</div>
<div style="left:898.2px;top:700.44px;width:52.6px;height:16.04px;background:rgb(153,255,255);"></div>
<div style="left:896.4px;top:701.42px;width:54.2px;height:17.68px;text-align:right;font-size:13.6px;line-height:17.68px;color:#0a0a0a;white-space:pre;transform:scaleX(0.930);transform-origin:100% 50%;">39.00</div>
<div style="left:952.4px;top:700.44px;width:52.6px;height:16.04px;background:rgb(153,255,255);"></div>
<div style="left:950.6px;top:701.42px;width:54.2px;height:17.68px;text-align:right;font-size:13.6px;line-height:17.68px;color:#0a0a0a;white-space:pre;transform:scaleX(0.930);transform-origin:100% 50%;">39.00</div>
<div style="left:792px;top:718.08px;width:50.4px;height:16.04px;background:#f2f2f2;box-shadow:inset 1px 1px 0 #fff;"></div>
<div style="left:787.4px;top:719.06px;width:52px;height:17.68px;text-align:right;font-size:13.6px;line-height:17.68px;color:#000;white-space:pre;transform:scaleX(0.930);transform-origin:100% 50%;">6.2</div>
<div style="left:844px;top:718.08px;width:52.6px;height:16.04px;background:rgb(255,77,77);"></div>
<div style="left:842.2px;top:719.06px;width:54.2px;height:17.68px;text-align:right;font-size:13.6px;line-height:17.68px;color:#0a0a0a;white-space:pre;transform:scaleX(0.930);transform-origin:100% 50%;">125.00</div>
<div style="left:898.2px;top:718.08px;width:52.6px;height:16.04px;background:rgb(153,255,255);"></div>
<div style="left:896.4px;top:719.06px;width:54.2px;height:17.68px;text-align:right;font-size:13.6px;line-height:17.68px;color:#0a0a0a;white-space:pre;transform:scaleX(0.930);transform-origin:100% 50%;">39.00</div>
<div style="left:952.4px;top:718.08px;width:52.6px;height:16.04px;background:rgb(153,255,255);"></div>
<div style="left:950.6px;top:719.06px;width:54.2px;height:17.68px;text-align:right;font-size:13.6px;line-height:17.68px;color:#0a0a0a;white-space:pre;transform:scaleX(0.930);transform-origin:100% 50%;">39.00</div>
<div style="left:792px;top:735.72px;width:50.4px;height:16.04px;background:#f2f2f2;box-shadow:inset 1px 1px 0 #fff;"></div>
<div style="left:787.4px;top:736.7px;width:52px;height:17.68px;text-align:right;font-size:13.6px;line-height:17.68px;color:#000;white-space:pre;transform:scaleX(0.930);transform-origin:100% 50%;">12.5</div>
<div style="left:844px;top:735.72px;width:52.6px;height:16.04px;background:rgb(255,77,77);"></div>
<div style="left:842.2px;top:736.7px;width:54.2px;height:17.68px;text-align:right;font-size:13.6px;line-height:17.68px;color:#0a0a0a;white-space:pre;transform:scaleX(0.930);transform-origin:100% 50%;">125.00</div>
<div style="left:898.2px;top:735.72px;width:52.6px;height:16.04px;background:rgb(153,255,255);"></div>
<div style="left:896.4px;top:736.7px;width:54.2px;height:17.68px;text-align:right;font-size:13.6px;line-height:17.68px;color:#0a0a0a;white-space:pre;transform:scaleX(0.930);transform-origin:100% 50%;">39.00</div>
<div style="left:952.4px;top:735.72px;width:52.6px;height:16.04px;background:rgb(153,255,255);"></div>
<div style="left:950.6px;top:736.7px;width:54.2px;height:17.68px;text-align:right;font-size:13.6px;line-height:17.68px;color:#0a0a0a;white-space:pre;transform:scaleX(0.930);transform-origin:100% 50%;">39.00</div>
<div style="left:792px;top:753.36px;width:50.4px;height:16.04px;background:#f2f2f2;box-shadow:inset 1px 1px 0 #fff;"></div>
<div style="left:787.4px;top:754.34px;width:52px;height:17.68px;text-align:right;font-size:13.6px;line-height:17.68px;color:#000;white-space:pre;transform:scaleX(0.930);transform-origin:100% 50%;">18.8</div>
<div style="left:844px;top:753.36px;width:52.6px;height:16.04px;background:rgb(255,77,77);"></div>
<div style="left:842.2px;top:754.34px;width:54.2px;height:17.68px;text-align:right;font-size:13.6px;line-height:17.68px;color:#0a0a0a;white-space:pre;transform:scaleX(0.930);transform-origin:100% 50%;">125.00</div>
<div style="left:898.2px;top:753.36px;width:52.6px;height:16.04px;background:rgb(154,253,253);"></div>
<div style="left:896.4px;top:754.34px;width:54.2px;height:17.68px;text-align:right;font-size:13.6px;line-height:17.68px;color:#0a0a0a;white-space:pre;transform:scaleX(0.930);transform-origin:100% 50%;">40.00</div>
<div style="left:952.4px;top:753.36px;width:52.6px;height:16.04px;background:rgb(154,253,253);"></div>
<div style="left:950.6px;top:754.34px;width:54.2px;height:17.68px;text-align:right;font-size:13.6px;line-height:17.68px;color:#0a0a0a;white-space:pre;transform:scaleX(0.930);transform-origin:100% 50%;">40.00</div>
<div style="left:792px;top:771px;width:50.4px;height:16.04px;background:#f2f2f2;box-shadow:inset 1px 1px 0 #fff;"></div>
<div style="left:787.4px;top:771.98px;width:52px;height:17.68px;text-align:right;font-size:13.6px;line-height:17.68px;color:#000;white-space:pre;transform:scaleX(0.930);transform-origin:100% 50%;">25.0</div>
<div style="left:844px;top:771px;width:52.6px;height:16.04px;background:rgb(255,77,77);"></div>
<div style="left:842.2px;top:771.98px;width:54.2px;height:17.68px;text-align:right;font-size:13.6px;line-height:17.68px;color:#0a0a0a;white-space:pre;transform:scaleX(0.930);transform-origin:100% 50%;">125.00</div>
<div style="left:898.2px;top:771px;width:52.6px;height:16.04px;background:rgb(159,245,245);"></div>
<div style="left:896.4px;top:771.98px;width:54.2px;height:17.68px;text-align:right;font-size:13.6px;line-height:17.68px;color:#0a0a0a;white-space:pre;transform:scaleX(0.930);transform-origin:100% 50%;">44.00</div>
<div style="left:952.4px;top:771px;width:52.6px;height:16.04px;background:rgb(159,245,245);"></div>
<div style="left:950.6px;top:771.98px;width:54.2px;height:17.68px;text-align:right;font-size:13.6px;line-height:17.68px;color:#0a0a0a;white-space:pre;transform:scaleX(0.930);transform-origin:100% 50%;">44.00</div>
<div style="left:792px;top:788.64px;width:50.4px;height:16.04px;background:#f2f2f2;box-shadow:inset 1px 1px 0 #fff;"></div>
<div style="left:787.4px;top:789.62px;width:52px;height:17.68px;text-align:right;font-size:13.6px;line-height:17.68px;color:#000;white-space:pre;transform:scaleX(0.930);transform-origin:100% 50%;">31.2</div>
<div style="left:844px;top:788.64px;width:52.6px;height:16.04px;background:rgb(255,77,77);"></div>
<div style="left:842.2px;top:789.62px;width:54.2px;height:17.68px;text-align:right;font-size:13.6px;line-height:17.68px;color:#0a0a0a;white-space:pre;transform:scaleX(0.930);transform-origin:100% 50%;">125.00</div>
<div style="left:898.2px;top:788.64px;width:52.6px;height:16.04px;background:rgb(164,235,235);"></div>
<div style="left:896.4px;top:789.62px;width:54.2px;height:17.68px;text-align:right;font-size:13.6px;line-height:17.68px;color:#0a0a0a;white-space:pre;transform:scaleX(0.930);transform-origin:100% 50%;">48.50</div>
<div style="left:952.4px;top:788.64px;width:52.6px;height:16.04px;background:rgb(164,235,235);"></div>
<div style="left:950.6px;top:789.62px;width:54.2px;height:17.68px;text-align:right;font-size:13.6px;line-height:17.68px;color:#0a0a0a;white-space:pre;transform:scaleX(0.930);transform-origin:100% 50%;">48.50</div>
<div style="left:792px;top:806.28px;width:50.4px;height:16.04px;background:#f2f2f2;box-shadow:inset 1px 1px 0 #fff;"></div>
<div style="left:787.4px;top:807.26px;width:52px;height:17.68px;text-align:right;font-size:13.6px;line-height:17.68px;color:#000;white-space:pre;transform:scaleX(0.930);transform-origin:100% 50%;">37.5</div>
<div style="left:844px;top:806.28px;width:52.6px;height:16.04px;background:rgb(255,77,77);"></div>
<div style="left:842.2px;top:807.26px;width:54.2px;height:17.68px;text-align:right;font-size:13.6px;line-height:17.68px;color:#0a0a0a;white-space:pre;transform:scaleX(0.930);transform-origin:100% 50%;">125.00</div>
<div style="left:898.2px;top:806.28px;width:52.6px;height:16.04px;background:rgb(169,227,227);"></div>
<div style="left:896.4px;top:807.26px;width:54.2px;height:17.68px;text-align:right;font-size:13.6px;line-height:17.68px;color:#0a0a0a;white-space:pre;transform:scaleX(0.930);transform-origin:100% 50%;">52.50</div>
<div style="left:952.4px;top:806.28px;width:52.6px;height:16.04px;background:rgb(169,227,227);"></div>
<div style="left:950.6px;top:807.26px;width:54.2px;height:17.68px;text-align:right;font-size:13.6px;line-height:17.68px;color:#0a0a0a;white-space:pre;transform:scaleX(0.930);transform-origin:100% 50%;">52.50</div>
<div style="left:792px;top:823.92px;width:50.4px;height:16.04px;background:#f2f2f2;box-shadow:inset 1px 1px 0 #fff;"></div>
<div style="left:787.4px;top:824.9px;width:52px;height:17.68px;text-align:right;font-size:13.6px;line-height:17.68px;color:#000;white-space:pre;transform:scaleX(0.930);transform-origin:100% 50%;">43.8</div>
<div style="left:844px;top:823.92px;width:52.6px;height:16.04px;background:rgb(255,77,77);"></div>
<div style="left:842.2px;top:824.9px;width:54.2px;height:17.68px;text-align:right;font-size:13.6px;line-height:17.68px;color:#0a0a0a;white-space:pre;transform:scaleX(0.930);transform-origin:100% 50%;">125.00</div>
<div style="left:898.2px;top:823.92px;width:52.6px;height:16.04px;background:rgb(172,222,222);"></div>
<div style="left:896.4px;top:824.9px;width:54.2px;height:17.68px;text-align:right;font-size:13.6px;line-height:17.68px;color:#0a0a0a;white-space:pre;transform:scaleX(0.930);transform-origin:100% 50%;">55.00</div>
<div style="left:952.4px;top:823.92px;width:52.6px;height:16.04px;background:rgb(172,222,222);"></div>
<div style="left:950.6px;top:824.9px;width:54.2px;height:17.68px;text-align:right;font-size:13.6px;line-height:17.68px;color:#0a0a0a;white-space:pre;transform:scaleX(0.930);transform-origin:100% 50%;">55.00</div>
<div style="left:792px;top:841.56px;width:50.4px;height:16.04px;background:#f2f2f2;box-shadow:inset 1px 1px 0 #fff;"></div>
<div style="left:787.4px;top:842.54px;width:52px;height:17.68px;text-align:right;font-size:13.6px;line-height:17.68px;color:#000;white-space:pre;transform:scaleX(0.930);transform-origin:100% 50%;">50.0</div>
<div style="left:844px;top:841.56px;width:52.6px;height:16.04px;background:rgb(255,77,77);"></div>
<div style="left:842.2px;top:842.54px;width:54.2px;height:17.68px;text-align:right;font-size:13.6px;line-height:17.68px;color:#0a0a0a;white-space:pre;transform:scaleX(0.930);transform-origin:100% 50%;">125.00</div>
<div style="left:898.2px;top:841.56px;width:52.6px;height:16.04px;background:rgb(172,222,222);"></div>
<div style="left:896.4px;top:842.54px;width:54.2px;height:17.68px;text-align:right;font-size:13.6px;line-height:17.68px;color:#0a0a0a;white-space:pre;transform:scaleX(0.930);transform-origin:100% 50%;">55.00</div>
<div style="left:952.4px;top:841.56px;width:52.6px;height:16.04px;background:rgb(172,222,222);"></div>
<div style="left:950.6px;top:842.54px;width:54.2px;height:17.68px;text-align:right;font-size:13.6px;line-height:17.68px;color:#0a0a0a;white-space:pre;transform:scaleX(0.930);transform-origin:100% 50%;">55.00</div>
<div style="left:792px;top:859.2px;width:50.4px;height:16.04px;background:#f2f2f2;box-shadow:inset 1px 1px 0 #fff;"></div>
<div style="left:787.4px;top:860.18px;width:52px;height:17.68px;text-align:right;font-size:13.6px;line-height:17.68px;color:#000;white-space:pre;transform:scaleX(0.930);transform-origin:100% 50%;">56.3</div>
<div style="left:844px;top:859.2px;width:52.6px;height:16.04px;background:rgb(255,77,77);"></div>
<div style="left:842.2px;top:860.18px;width:54.2px;height:17.68px;text-align:right;font-size:13.6px;line-height:17.68px;color:#0a0a0a;white-space:pre;transform:scaleX(0.930);transform-origin:100% 50%;">125.00</div>
<div style="left:898.2px;top:859.2px;width:52.6px;height:16.04px;background:rgb(172,222,222);"></div>
<div style="left:896.4px;top:860.18px;width:54.2px;height:17.68px;text-align:right;font-size:13.6px;line-height:17.68px;color:#0a0a0a;white-space:pre;transform:scaleX(0.930);transform-origin:100% 50%;">55.00</div>
<div style="left:952.4px;top:859.2px;width:52.6px;height:16.04px;background:rgb(172,222,222);"></div>
<div style="left:950.6px;top:860.18px;width:54.2px;height:17.68px;text-align:right;font-size:13.6px;line-height:17.68px;color:#0a0a0a;white-space:pre;transform:scaleX(0.930);transform-origin:100% 50%;">55.00</div>
<div style="left:792px;top:876.84px;width:50.4px;height:16.04px;background:#f2f2f2;box-shadow:inset 1px 1px 0 #fff;"></div>
<div style="left:787.4px;top:877.82px;width:52px;height:17.68px;text-align:right;font-size:13.6px;line-height:17.68px;color:#000;white-space:pre;transform:scaleX(0.930);transform-origin:100% 50%;">62.5</div>
<div style="left:844px;top:876.84px;width:52.6px;height:16.04px;background:rgb(255,77,77);"></div>
<div style="left:842.2px;top:877.82px;width:54.2px;height:17.68px;text-align:right;font-size:13.6px;line-height:17.68px;color:#0a0a0a;white-space:pre;transform:scaleX(0.930);transform-origin:100% 50%;">125.00</div>
<div style="left:898.2px;top:876.84px;width:52.6px;height:16.04px;background:rgb(172,222,222);"></div>
<div style="left:896.4px;top:877.82px;width:54.2px;height:17.68px;text-align:right;font-size:13.6px;line-height:17.68px;color:#0a0a0a;white-space:pre;transform:scaleX(0.930);transform-origin:100% 50%;">55.00</div>
<div style="left:952.4px;top:876.84px;width:52.6px;height:16.04px;background:rgb(172,222,222);"></div>
<div style="left:950.6px;top:877.82px;width:54.2px;height:17.68px;text-align:right;font-size:13.6px;line-height:17.68px;color:#0a0a0a;white-space:pre;transform:scaleX(0.930);transform-origin:100% 50%;">55.00</div>
<div style="left:792px;top:894.48px;width:50.4px;height:16.04px;background:#f2f2f2;box-shadow:inset 1px 1px 0 #fff;"></div>
<div style="left:787.4px;top:895.46px;width:52px;height:17.68px;text-align:right;font-size:13.6px;line-height:17.68px;color:#000;white-space:pre;transform:scaleX(0.930);transform-origin:100% 50%;">68.8</div>
<div style="left:844px;top:894.48px;width:52.6px;height:16.04px;background:rgb(255,77,77);"></div>
<div style="left:842.2px;top:895.46px;width:54.2px;height:17.68px;text-align:right;font-size:13.6px;line-height:17.68px;color:#0a0a0a;white-space:pre;transform:scaleX(0.930);transform-origin:100% 50%;">125.00</div>
<div style="left:898.2px;top:894.48px;width:52.6px;height:16.04px;background:rgb(172,222,222);"></div>
<div style="left:896.4px;top:895.46px;width:54.2px;height:17.68px;text-align:right;font-size:13.6px;line-height:17.68px;color:#0a0a0a;white-space:pre;transform:scaleX(0.930);transform-origin:100% 50%;">55.00</div>
<div style="left:952.4px;top:894.48px;width:52.6px;height:16.04px;background:rgb(172,222,222);"></div>
<div style="left:950.6px;top:895.46px;width:54.2px;height:17.68px;text-align:right;font-size:13.6px;line-height:17.68px;color:#0a0a0a;white-space:pre;transform:scaleX(0.930);transform-origin:100% 50%;">55.00</div>
<div style="left:792px;top:912.12px;width:50.4px;height:16.04px;background:#f2f2f2;box-shadow:inset 1px 1px 0 #fff;"></div>
<div style="left:787.4px;top:913.1px;width:52px;height:17.68px;text-align:right;font-size:13.6px;line-height:17.68px;color:#000;white-space:pre;transform:scaleX(0.930);transform-origin:100% 50%;">75.0</div>
<div style="left:844px;top:912.12px;width:52.6px;height:16.04px;background:rgb(255,77,77);"></div>
<div style="left:842.2px;top:913.1px;width:54.2px;height:17.68px;text-align:right;font-size:13.6px;line-height:17.68px;color:#0a0a0a;white-space:pre;transform:scaleX(0.930);transform-origin:100% 50%;">125.00</div>
<div style="left:898.2px;top:912.12px;width:52.6px;height:16.04px;background:rgb(172,222,222);"></div>
<div style="left:896.4px;top:913.1px;width:54.2px;height:17.68px;text-align:right;font-size:13.6px;line-height:17.68px;color:#0a0a0a;white-space:pre;transform:scaleX(0.930);transform-origin:100% 50%;">55.00</div>
<div style="left:952.4px;top:912.12px;width:52.6px;height:16.04px;background:rgb(172,222,222);"></div>
<div style="left:950.6px;top:913.1px;width:54.2px;height:17.68px;text-align:right;font-size:13.6px;line-height:17.68px;color:#0a0a0a;white-space:pre;transform:scaleX(0.930);transform-origin:100% 50%;">55.00</div>
<div style="left:792px;top:929.76px;width:50.4px;height:16.04px;background:#f2f2f2;box-shadow:inset 1px 1px 0 #fff;"></div>
<div style="left:787.4px;top:930.74px;width:52px;height:17.68px;text-align:right;font-size:13.6px;line-height:17.68px;color:#000;white-space:pre;transform:scaleX(0.930);transform-origin:100% 50%;">81.3</div>
<div style="left:844px;top:929.76px;width:52.6px;height:16.04px;background:rgb(255,77,77);"></div>
<div style="left:842.2px;top:930.74px;width:54.2px;height:17.68px;text-align:right;font-size:13.6px;line-height:17.68px;color:#0a0a0a;white-space:pre;transform:scaleX(0.930);transform-origin:100% 50%;">125.00</div>
<div style="left:898.2px;top:929.76px;width:52.6px;height:16.04px;background:rgb(172,222,222);"></div>
<div style="left:896.4px;top:930.74px;width:54.2px;height:17.68px;text-align:right;font-size:13.6px;line-height:17.68px;color:#0a0a0a;white-space:pre;transform:scaleX(0.930);transform-origin:100% 50%;">55.00</div>
<div style="left:952.4px;top:929.76px;width:52.6px;height:16.04px;background:rgb(172,222,222);"></div>
<div style="left:950.6px;top:930.74px;width:54.2px;height:17.68px;text-align:right;font-size:13.6px;line-height:17.68px;color:#0a0a0a;white-space:pre;transform:scaleX(0.930);transform-origin:100% 50%;">55.00</div>
<div style="left:792px;top:947.4px;width:50.4px;height:16.04px;background:#f2f2f2;box-shadow:inset 1px 1px 0 #fff;"></div>
<div style="left:787.4px;top:948.38px;width:52px;height:17.68px;text-align:right;font-size:13.6px;line-height:17.68px;color:#000;white-space:pre;transform:scaleX(0.930);transform-origin:100% 50%;">87.5</div>
<div style="left:844px;top:947.4px;width:52.6px;height:16.04px;background:rgb(255,77,77);"></div>
<div style="left:842.2px;top:948.38px;width:54.2px;height:17.68px;text-align:right;font-size:13.6px;line-height:17.68px;color:#0a0a0a;white-space:pre;transform:scaleX(0.930);transform-origin:100% 50%;">125.00</div>
<div style="left:898.2px;top:947.4px;width:52.6px;height:16.04px;background:rgb(172,222,222);"></div>
<div style="left:896.4px;top:948.38px;width:54.2px;height:17.68px;text-align:right;font-size:13.6px;line-height:17.68px;color:#0a0a0a;white-space:pre;transform:scaleX(0.930);transform-origin:100% 50%;">55.00</div>
<div style="left:952.4px;top:947.4px;width:52.6px;height:16.04px;background:rgb(172,222,222);"></div>
<div style="left:950.6px;top:948.38px;width:54.2px;height:17.68px;text-align:right;font-size:13.6px;line-height:17.68px;color:#0a0a0a;white-space:pre;transform:scaleX(0.930);transform-origin:100% 50%;">55.00</div>
<div style="left:792px;top:965.04px;width:50.4px;height:16.04px;background:#f2f2f2;box-shadow:inset 1px 1px 0 #fff;"></div>
<div style="left:787.4px;top:966.02px;width:52px;height:17.68px;text-align:right;font-size:13.6px;line-height:17.68px;color:#000;white-space:pre;transform:scaleX(0.930);transform-origin:100% 50%;">93.8</div>
<div style="left:844px;top:965.04px;width:52.6px;height:16.04px;background:rgb(255,77,77);"></div>
<div style="left:842.2px;top:966.02px;width:54.2px;height:17.68px;text-align:right;font-size:13.6px;line-height:17.68px;color:#0a0a0a;white-space:pre;transform:scaleX(0.930);transform-origin:100% 50%;">125.00</div>
<div style="left:898.2px;top:965.04px;width:52.6px;height:16.04px;background:rgb(172,222,222);"></div>
<div style="left:896.4px;top:966.02px;width:54.2px;height:17.68px;text-align:right;font-size:13.6px;line-height:17.68px;color:#0a0a0a;white-space:pre;transform:scaleX(0.930);transform-origin:100% 50%;">55.00</div>
<div style="left:952.4px;top:965.04px;width:52.6px;height:16.04px;background:rgb(172,222,222);"></div>
<div style="left:950.6px;top:966.02px;width:54.2px;height:17.68px;text-align:right;font-size:13.6px;line-height:17.68px;color:#0a0a0a;white-space:pre;transform:scaleX(0.930);transform-origin:100% 50%;">55.00</div>
<div style="left:792px;top:982.68px;width:50.4px;height:16.04px;background:#f2f2f2;box-shadow:inset 1px 1px 0 #fff;"></div>
<div style="left:787.4px;top:983.66px;width:52px;height:17.68px;text-align:right;font-size:13.6px;line-height:17.68px;color:#000;white-space:pre;transform:scaleX(0.930);transform-origin:100% 50%;">100</div>
<div style="left:844px;top:982.68px;width:52.6px;height:16.04px;background:rgb(255,77,77);"></div>
<div style="left:842.2px;top:983.66px;width:54.2px;height:17.68px;text-align:right;font-size:13.6px;line-height:17.68px;color:#0a0a0a;white-space:pre;transform:scaleX(0.930);transform-origin:100% 50%;">125.00</div>
<div style="left:898.2px;top:982.68px;width:52.6px;height:16.04px;background:rgb(172,222,222);"></div>
<div style="left:896.4px;top:983.66px;width:54.2px;height:17.68px;text-align:right;font-size:13.6px;line-height:17.68px;color:#0a0a0a;white-space:pre;transform:scaleX(0.930);transform-origin:100% 50%;">55.00</div>
<div style="left:952.4px;top:982.68px;width:52.6px;height:16.04px;background:rgb(172,222,222);"></div>
<div style="left:950.6px;top:983.66px;width:54.2px;height:17.68px;text-align:right;font-size:13.6px;line-height:17.68px;color:#0a0a0a;white-space:pre;transform:scaleX(0.930);transform-origin:100% 50%;">55.00</div>
<div style="left:789.4px;top:1006.2px;width:335.2px;height:29.8px;background:#f0f0f0;border-top:1px solid #fafafa;"></div>
<div style="left:876px;top:1009.2px;width:1px;height:23.8px;background:#d8d8d8;"></div>
<div style="left:964.4px;top:1009.2px;width:1px;height:23.8px;background:#d8d8d8;"></div>
<svg style="left:1112.6px;top:1024px;width:11px;height:11px" viewBox="0 0 5.5 5.5"><path d="M4.2 0.8 h.9 v.9 h-.9z M4.2 2.6 h.9 v.9 h-.9z M4.2 4.2 h.9 v.9 h-.9z M2.5 2.6 h.9 v.9 h-.9z M2.5 4.2 h.9 v.9 h-.9z M0.8 4.2 h.9 v.9 h-.9z" fill="#a8a8a8"/></svg>
<div style="left:1147.2px;top:574.4px;width:244.6px;height:194.4px;box-shadow:0 0 1.8px 1px rgba(20,20,20,.5);border-radius:6.4px 6.4px 1.2px 1.2px;"></div>
<div style="left:1147.2px;top:574.4px;width:244.6px;height:194.4px;background:linear-gradient(#c5d7eb 0,#dbe7f5 36px,#d5e2f2 100%);border:1px solid #9aa6b5;border-radius:6px 6px 1px 1px;box-shadow:inset 0 0 0 1px rgba(255,255,255,.75);"></div>
<svg style="left:1157.6px;top:588.4px;width:19.2px;height:14px" viewBox="0 0 9.6 7"><rect x="0" y="0.9" width="9.6" height="5.2" fill="#000"/><rect x="0.50" y="0" width="0.9" height="7" fill="#000"/><rect x="2.04" y="0" width="0.9" height="7" fill="#000"/><rect x="3.58" y="0" width="0.9" height="7" fill="#000"/><rect x="5.12" y="0" width="0.9" height="7" fill="#000"/><rect x="6.66" y="0" width="0.9" height="7" fill="#000"/><rect x="8.20" y="0" width="0.9" height="7" fill="#000"/></svg>
<div style="left:1182px;top:585.12px;height:19.76px;font-size:15.2px;line-height:19.76px;color:#9aa0a8;white-space:pre;transform:scaleX(0.867);transform-origin:0 50%;">PROM ID</div>
<div style="left:1329.4px;top:589.44px;height:18.72px;font-size:14.4px;line-height:18.72px;color:#9aa0a8;white-space:pre;">...</div>
<div style="left:1344px;top:585.6px;width:37.6px;height:21.4px;background:linear-gradient(#dde8f4,#cddbec);border:1px solid #93a6bd;border-radius:3.2px;box-shadow:inset 0 0 0 1px rgba(255,255,255,.6);"></div>
<svg style="left:1356px;top:590.7px;width:13.6px;height:11.2px" viewBox="0 0 6.8 5.6"><path d="M1.3 0.9 L5.5 4.7 M5.5 0.9 L1.3 4.7" stroke="#949dab" stroke-width="2.5" stroke-linecap="square" fill="none"/><path d="M1.3 0.9 L5.5 4.7 M5.5 0.9 L1.3 4.7" stroke="#fff" stroke-width="1.5" stroke-linecap="square" fill="none"/></svg>
<div style="left:1156px;top:610.4px;width:226.6px;height:150px;background:#f0f0f0;"></div>
<div style="left:1162.4px;top:617.2px;width:215px;height:38px;background:#f0f0f0;border-top:1px solid #a0a0a0;border-left:1px solid #a0a0a0;border-right:1px solid #fff;border-bottom:1px solid #fff;"></div>
<div style="left:1187px;top:618.69px;height:17.42px;font-size:13.4px;line-height:17.42px;color:#111;white-space:pre;transform:scaleX(0.851);transform-origin:0 50%;">PROM ID</div>
<div style="left:1175.2px;top:667.4px;width:186.8px;height:4.4px;background:#e6e6e6;border:1px solid #d6d6d6;"></div>
<div style="left:1356.6px;top:662.8px;width:5.2px;height:12.8px;background:#1a6fdb;"></div>
<div style="left:1162.4px;top:688.4px;width:83.2px;height:22.8px;background:#fff;border:1px solid #7a7a7a;"></div>
<div style="left:1168.4px;top:691.49px;height:17.42px;font-size:13.4px;line-height:17.42px;color:#111;white-space:pre;transform:scaleX(0.930);transform-origin:0 50%;">65535.00</div>
<div style="left:1162px;top:714.09px;height:17.42px;font-size:13.4px;line-height:17.42px;color:#111;white-space:pre;transform:scaleX(0.930);transform-origin:0 50%;">BPAA.BIN</div>
<div style="left:1162.4px;top:732.8px;width:83.2px;height:22.4px;background:#f4f4f4;border:1px solid #9a9a9a;"></div>
<div style="left:1168.4px;top:735.69px;height:17.42px;font-size:13.4px;line-height:17.42px;color:#111;white-space:pre;transform:scaleX(0.930);transform-origin:0 50%;">0.00</div>
<div style="left:1249.2px;top:736px;width:42px;height:18px;background:#e2e2e2;border:1px solid #adadad;"></div>
<div style="left:1239.2px;top:736.89px;width:62px;height:17.42px;text-align:center;font-size:13.4px;line-height:17.42px;color:#111;white-space:pre;transform:scaleX(0.930);transform-origin:50% 50%;">Copy</div>
<div style="left:1322.6px;top:712px;width:55.6px;height:18px;background:#e5f1fb;border:2px solid #1c78d4;"></div>
<div style="left:1312.6px;top:712.89px;width:75.6px;height:17.42px;text-align:center;font-size:13.4px;line-height:17.42px;color:#111;white-space:pre;transform:scaleX(0.930);transform-origin:50% 50%;">Save</div>
<div style="left:1322.6px;top:736px;width:55.6px;height:18px;background:#e2e2e2;border:1px solid #adadad;"></div>
<div style="left:1312.6px;top:736.89px;width:75.6px;height:17.42px;text-align:center;font-size:13.4px;line-height:17.42px;color:#111;white-space:pre;transform:scaleX(0.930);transform-origin:50% 50%;">Cancel</div>
<div style="left:1148px;top:781.4px;width:246px;height:195.4px;box-shadow:0 0 1.8px 1px rgba(20,20,20,.5);border-radius:6.4px 6.4px 1.2px 1.2px;"></div>
<div style="left:1148px;top:781.4px;width:246px;height:195.4px;background:linear-gradient(#9dbde1 0,#bfd6f0 36px,#b9d2ee 100%);border:1px solid #4a6a8a;border-radius:6px 6px 1px 1px;box-shadow:inset 0 0 0 1px rgba(255,255,255,.75);"></div>
<svg style="left:1158.4px;top:795.4px;width:19.2px;height:14px" viewBox="0 0 9.6 7"><rect x="0" y="0.9" width="9.6" height="5.2" fill="#000"/><rect x="0.50" y="0" width="0.9" height="7" fill="#000"/><rect x="2.04" y="0" width="0.9" height="7" fill="#000"/><rect x="3.58" y="0" width="0.9" height="7" fill="#000"/><rect x="5.12" y="0" width="0.9" height="7" fill="#000"/><rect x="6.66" y="0" width="0.9" height="7" fill="#000"/><rect x="8.20" y="0" width="0.9" height="7" fill="#000"/></svg>
<div style="left:1182.8px;top:792.12px;height:19.76px;font-size:15.2px;line-height:19.76px;color:#000;white-space:pre;transform:scaleX(0.916);transform-origin:0 50%;">Number Of Cylinders</div>
<div style="left:1331.6px;top:796.44px;height:18.72px;font-size:14.4px;line-height:18.72px;color:#222;white-space:pre;">...</div>
<div style="left:1346.2px;top:792.6px;width:37.6px;height:21.4px;background:linear-gradient(#e9a090 0,#d4533d 45%,#c23a22 55%,#d86a4a 100%);border:1px solid #7a2a1a;border-radius:3.2px;box-shadow:inset 0 0 0 1px rgba(255,255,255,.35);"></div>
<svg style="left:1358.2px;top:797.7px;width:13.6px;height:11.2px" viewBox="0 0 6.8 5.6"><path d="M1.3 0.9 L5.5 4.7 M5.5 0.9 L1.3 4.7" stroke="#6a2a20" stroke-width="2.5" stroke-linecap="square" fill="none"/><path d="M1.3 0.9 L5.5 4.7 M5.5 0.9 L1.3 4.7" stroke="#fff" stroke-width="1.5" stroke-linecap="square" fill="none"/></svg>
<div style="left:1156.8px;top:817.4px;width:228px;height:151px;background:#f0f0f0;"></div>
<div style="left:1163.2px;top:824.2px;width:216.4px;height:38px;background:#f0f0f0;border-top:1px solid #a0a0a0;border-left:1px solid #a0a0a0;border-right:1px solid #fff;border-bottom:1px solid #fff;"></div>
<div style="left:1175.2px;top:825.69px;height:17.42px;font-size:13.4px;line-height:17.42px;color:#111;white-space:pre;transform:scaleX(0.937);transform-origin:0 50%;">Number Of Cylinders</div>
<div style="left:1177.2px;top:874.4px;width:187.8px;height:4.4px;background:#e6e6e6;border:1px solid #d6d6d6;"></div>
<div style="left:1182px;top:869.8px;width:5.2px;height:12.8px;background:#1a6fdb;"></div>
<div style="left:1163.2px;top:895.4px;width:83.2px;height:22.8px;background:#fff;border:1px solid #7a7a7a;"></div>
<div style="left:1169.2px;top:898.49px;height:17.42px;font-size:13.4px;line-height:17.42px;color:#111;white-space:pre;transform:scaleX(0.930);transform-origin:0 50%;">8.00</div>
<div style="left:1254px;top:901.89px;height:17.42px;font-size:13.4px;line-height:17.42px;color:#111;white-space:pre;transform:scaleX(0.930);transform-origin:0 50%;">Cyl.</div>
<div style="left:1162.8px;top:921.09px;height:17.42px;font-size:13.4px;line-height:17.42px;color:#111;white-space:pre;transform:scaleX(0.930);transform-origin:0 50%;">BPAA.BIN</div>
<div style="left:1163.2px;top:939.8px;width:83.2px;height:22.4px;background:#f4f4f4;border:1px solid #9a9a9a;"></div>
<div style="left:1169.2px;top:942.69px;height:17.42px;font-size:13.4px;line-height:17.42px;color:#111;white-space:pre;transform:scaleX(0.930);transform-origin:0 50%;">16.00</div>
<div style="left:1250px;top:943px;width:42px;height:18px;background:#e2e2e2;border:1px solid #adadad;"></div>
<div style="left:1240px;top:943.89px;width:62px;height:17.42px;text-align:center;font-size:13.4px;line-height:17.42px;color:#111;white-space:pre;transform:scaleX(0.930);transform-origin:50% 50%;">Copy</div>
<div style="left:1324.8px;top:919px;width:55.6px;height:18px;background:#e5f1fb;border:2px solid #1c78d4;"></div>
<div style="left:1314.8px;top:919.89px;width:75.6px;height:17.42px;text-align:center;font-size:13.4px;line-height:17.42px;color:#111;white-space:pre;transform:scaleX(0.930);transform-origin:50% 50%;">Save</div>
<div style="left:1324.8px;top:943px;width:55.6px;height:18px;background:#e2e2e2;border:1px solid #adadad;"></div>
<div style="left:1314.8px;top:943.89px;width:75.6px;height:17.42px;text-align:center;font-size:13.4px;line-height:17.42px;color:#111;white-space:pre;transform:scaleX(0.930);transform-origin:50% 50%;">Cancel</div>
</div></body></html>
